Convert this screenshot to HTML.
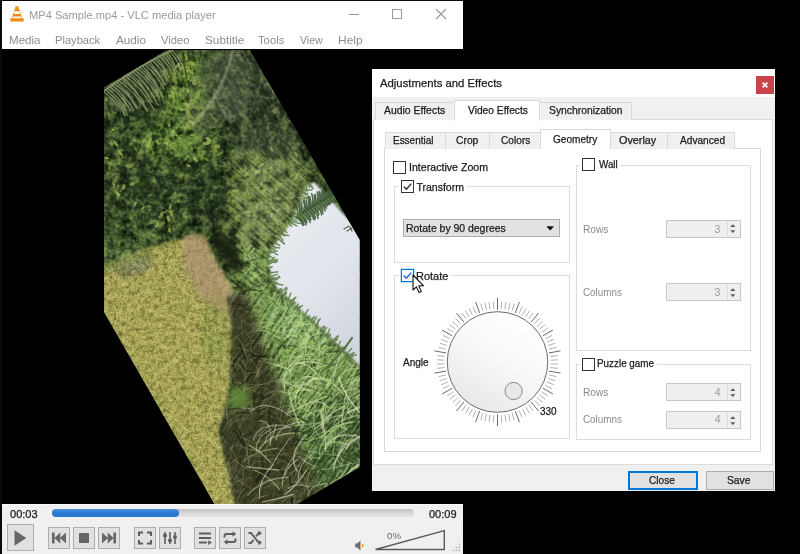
<!DOCTYPE html>
<html lang="en">
<head>
<meta charset="utf-8">
<title>MP4 Sample.mp4 - VLC media player</title>
<style>
html,body{margin:0;padding:0;}
body{width:800px;height:554px;overflow:hidden;background:#000;position:relative;font-family:"Liberation Sans",sans-serif;}
.abs,.t,.box,.btn,.tab,.cb,.grp,.spin{position:absolute;box-sizing:border-box;}
.t{white-space:pre;line-height:1;transform-origin:0 0;}
.btn{background:#e1e1e1;border:1px solid #adadad;}
.tab{background:#f0f0f0;border:1px solid #d9d9d9;border-bottom:none;}
.tab.sel{background:#fff;}
.cb{width:13px;height:13px;background:#fff;border:1px solid #333;}
.grp{border:1px solid #dcdcdc;}
.spin{background:#efefef;border:1px solid #c6c6c6;}
svg{position:absolute;overflow:visible;}
</style>
</head>
<body>

<!-- ===== VLC main window ===== -->
<div class="abs" style="left:0;top:0;width:463px;height:554px;background:#0a0a0a"></div>
<div class="abs" style="left:2px;top:1px;width:461px;height:48px;background:#fff"></div>
<div class="abs" style="left:2px;top:49px;width:461px;height:455px;background:#000"></div>

<!-- cone icon -->
<svg style="left:10px;top:6px" width="14" height="16" viewBox="0 0 14 16">
  <path d="M7 0.3 L8.3 0.3 L12.2 12.2 L13.6 12.2 L13.6 15.6 L0.4 15.6 L0.4 12.2 L1.8 12.2 L5.7 0.3 Z" fill="#f08a10"/>
  <path d="M4.6 5.2 L9.4 5.2 L10.3 7.9 L3.7 7.9 Z" fill="#fff"/>
  <path d="M2.9 10.4 L11.1 10.4 L11.7 12.2 L2.3 12.2 Z" fill="#fff"/>
  <path d="M5.9 0.3 L8.1 0.3 L8.7 2.4 L5.3 2.4 Z" fill="#f6a540"/>
</svg>

<!-- window controls -->
<div class="abs" style="left:349px;top:14px;width:10px;height:1px;background:#999"></div>
<div class="abs" style="left:392px;top:9px;width:10px;height:10px;border:1px solid #999"></div>
<svg style="left:436px;top:9px" width="10" height="10" viewBox="0 0 10 10"><path d="M0 0L10 10M10 0L0 10" stroke="#999" stroke-width="1.1" fill="none"/></svg>

<!-- video -->
<svg style="left:0;top:0" width="800" height="554" viewBox="0 0 800 554">
<defs>
<clipPath id="vc"><polygon points="104,87.5 166.5,50 249.5,50 359.7,240 359.7,467 297,504 214.5,504 104,312"/></clipPath>
<filter id="b9" x="60" y="20" width="340" height="520" filterUnits="userSpaceOnUse"><feGaussianBlur stdDeviation="9"/></filter>
<filter id="b5" x="60" y="20" width="340" height="520" filterUnits="userSpaceOnUse"><feGaussianBlur stdDeviation="5"/></filter>
<filter id="b3" x="60" y="20" width="340" height="520" filterUnits="userSpaceOnUse"><feGaussianBlur stdDeviation="3"/></filter>
<filter id="b2" x="60" y="20" width="340" height="520" filterUnits="userSpaceOnUse"><feGaussianBlur stdDeviation="1.6"/></filter>
<filter id="b1" x="60" y="20" width="340" height="520" filterUnits="userSpaceOnUse"><feGaussianBlur stdDeviation="0.8"/></filter>
<filter id="b05" x="60" y="20" width="340" height="520" filterUnits="userSpaceOnUse"><feGaussianBlur stdDeviation="0.5"/></filter>
<filter id="nFol" x="60" y="20" width="340" height="520" filterUnits="userSpaceOnUse" color-interpolation-filters="sRGB"><feTurbulence type="fractalNoise" baseFrequency="0.1" numOctaves="4" seed="11" result="n"/><feColorMatrix in="n" type="matrix" values="0 0 0 0 0.663  0 0 0 0 0.753  0 0 0 0 0.376  1.6 0 0 0 -0.800" result="l"/><feColorMatrix in="n" type="matrix" values="0 0 0 0 0.047  0 0 0 0 0.082  0 0 0 0 0.031  -3.0 0 0 0 1.500" result="d"/><feMerge><feMergeNode in="d"/><feMergeNode in="l"/></feMerge></filter>
<filter id="nFol2" x="60" y="20" width="340" height="520" filterUnits="userSpaceOnUse" color-interpolation-filters="sRGB"><feTurbulence type="fractalNoise" baseFrequency="0.3" numOctaves="2" seed="5" result="n"/><feColorMatrix in="n" type="matrix" values="0 0 0 0 0.706  0 0 0 0 0.784  0 0 0 0 0.471  0 0.9 0 0 -0.450" result="l"/><feColorMatrix in="n" type="matrix" values="0 0 0 0 0.047  0 0 0 0 0.082  0 0 0 0 0.031  0 -1.6 0 0 0.800" result="d"/><feMerge><feMergeNode in="d"/><feMergeNode in="l"/></feMerge></filter>
<filter id="nGrass" x="60" y="20" width="340" height="520" filterUnits="userSpaceOnUse" color-interpolation-filters="sRGB"><feTurbulence type="fractalNoise" baseFrequency="0.55" numOctaves="2" seed="3" result="n"/><feColorMatrix in="n" type="matrix" values="0 0 0 0 0.902  0 0 0 0 0.886  0 0 0 0 0.627  1.2 0 0 0 -0.600" result="l"/><feColorMatrix in="n" type="matrix" values="0 0 0 0 0.290  0 0 0 0 0.290  0 0 0 0 0.094  -1.2 0 0 0 0.600" result="d"/><feMerge><feMergeNode in="d"/><feMergeNode in="l"/></feMerge></filter>
<filter id="nGrassLo" x="60" y="20" width="340" height="520" filterUnits="userSpaceOnUse" color-interpolation-filters="sRGB"><feTurbulence type="fractalNoise" baseFrequency="0.09" numOctaves="2" seed="8" result="n"/><feColorMatrix in="n" type="matrix" values="0 0 0 0 0.784  0 0 0 0 0.753  0 0 0 0 0.439  0 0.8 0 0 -0.400" result="l"/><feColorMatrix in="n" type="matrix" values="0 0 0 0 0.353  0 0 0 0 0.416  0 0 0 0 0.157  0 -0.8 0 0 0.400" result="d"/><feMerge><feMergeNode in="d"/><feMergeNode in="l"/></feMerge></filter>
<filter id="nGrassMid" x="60" y="20" width="340" height="520" filterUnits="userSpaceOnUse" color-interpolation-filters="sRGB"><feTurbulence type="fractalNoise" baseFrequency="0.22" numOctaves="3" seed="14" result="n"/><feColorMatrix in="n" type="matrix" values="0 0 0 0 0.847  0 0 0 0 0.831  0 0 0 0 0.533  0 0 1.5 0 -0.750" result="l"/><feColorMatrix in="n" type="matrix" values="0 0 0 0 0.298  0 0 0 0 0.298  0 0 0 0 0.110  0 0 -1.7 0 0.850" result="d"/><feMerge><feMergeNode in="d"/><feMergeNode in="l"/></feMerge></filter>
<filter id="nTall" x="60" y="20" width="340" height="520" filterUnits="userSpaceOnUse" color-interpolation-filters="sRGB"><feTurbulence type="fractalNoise" baseFrequency="0.04 0.45" numOctaves="3" seed="21" result="n"/><feColorMatrix in="n" type="matrix" values="0 0 0 0 0.812  0 0 0 0 0.878  0 0 0 0 0.659  2.2 0 0 0 -1.100" result="l"/><feColorMatrix in="n" type="matrix" values="0 0 0 0 0.110  0 0 0 0 0.165  0 0 0 0 0.071  -2.2 0 0 0 1.100" result="d"/><feMerge><feMergeNode in="d"/><feMergeNode in="l"/></feMerge></filter>
<filter id="nTall2" x="60" y="20" width="340" height="520" filterUnits="userSpaceOnUse" color-interpolation-filters="sRGB"><feTurbulence type="fractalNoise" baseFrequency="0.3" numOctaves="2" seed="17" result="n"/><feColorMatrix in="n" type="matrix" values="0 0 0 0 0.831  0 0 0 0 0.886  0 0 0 0 0.690  0 0.9 0 0 -0.450" result="l"/><feColorMatrix in="n" type="matrix" values="0 0 0 0 0.078  0 0 0 0 0.118  0 0 0 0 0.063  0 -1.4 0 0 0.700" result="d"/><feMerge><feMergeNode in="d"/><feMergeNode in="l"/></feMerge></filter>
<filter id="nStr1" x="60" y="20" width="340" height="520" filterUnits="userSpaceOnUse" color-interpolation-filters="sRGB"><feTurbulence type="fractalNoise" baseFrequency="0.03 0.4" numOctaves="3" seed="31" result="n"/><feColorMatrix in="n" type="matrix" values="0 0 0 0 0.643  0 0 0 0 0.690  0 0 0 0 0.486  1.3 0 0 0 -0.650" result="l"/><feColorMatrix in="n" type="matrix" values="0 0 0 0 0.047  0 0 0 0 0.082  0 0 0 0 0.031  -2.8 0 0 0 1.400" result="d"/><feMerge><feMergeNode in="d"/><feMergeNode in="l"/></feMerge></filter>
<filter id="nStr2" x="60" y="20" width="340" height="520" filterUnits="userSpaceOnUse" color-interpolation-filters="sRGB"><feTurbulence type="fractalNoise" baseFrequency="0.035 0.42" numOctaves="3" seed="37" result="n"/><feColorMatrix in="n" type="matrix" values="0 0 0 0 0.737  0 0 0 0 0.784  0 0 0 0 0.533  1.8 0 0 0 -0.900" result="l"/><feColorMatrix in="n" type="matrix" values="0 0 0 0 0.078  0 0 0 0 0.110  0 0 0 0 0.047  -2.4 0 0 0 1.200" result="d"/><feMerge><feMergeNode in="d"/><feMergeNode in="l"/></feMerge></filter>
<filter id="nStr3" x="60" y="20" width="340" height="520" filterUnits="userSpaceOnUse" color-interpolation-filters="sRGB"><feTurbulence type="fractalNoise" baseFrequency="0.03 0.38" numOctaves="3" seed="41" result="n"/><feColorMatrix in="n" type="matrix" values="0 0 0 0 0.596  0 0 0 0 0.643  0 0 0 0 0.533  1.0 0 0 0 -0.500" result="l"/><feColorMatrix in="n" type="matrix" values="0 0 0 0 0.059  0 0 0 0 0.090  0 0 0 0 0.047  -2.0 0 0 0 1.000" result="d"/><feMerge><feMergeNode in="d"/><feMergeNode in="l"/></feMerge></filter>
<filter id="nDark" x="60" y="20" width="340" height="520" filterUnits="userSpaceOnUse" color-interpolation-filters="sRGB"><feTurbulence type="fractalNoise" baseFrequency="0.25" numOctaves="3" seed="2" result="n"/><feColorMatrix in="n" type="matrix" values="0 0 0 0 0.722  0 0 0 0 0.706  0 0 0 0 0.565  1.6 0 0 0 -0.800" result="l"/><feColorMatrix in="n" type="matrix" values="0 0 0 0 0.082  0 0 0 0 0.082  0 0 0 0 0.047  -1.0 0 0 0 0.500" result="d"/><feMerge><feMergeNode in="d"/><feMergeNode in="l"/></feMerge></filter>
<clipPath id="cSky"><polygon points="314,182 364,236 364,370 352,358 330,337 300,309 277,288 271,274 269,262 271,250 280,237 292,222 301,200 305,187"/></clipPath>
<clipPath id="cGrass"><polygon points="100,266 122,256 150,246 182,238 192,233 206,236 215,258 228,280 239,298 233,330 230,392 220,432 230,474 238,510 200,510 100,330"/></clipPath>
<clipPath id="cPath"><polygon points="184,240 192,234 205,236 214,258 228,280 238,298 232,312 212,308 196,290 186,268"/></clipPath>
<clipPath id="cDark"><polygon points="226,296 246,292 262,340 290,420 326,510 236,510 229,474 219,432 231,392 232,330"/></clipPath>
<clipPath id="cTall"><polygon points="226,296 262,283 277,287 364,370 364,470 300,510 236,510 229,474 219,432 231,392 232,330"/></clipPath>
<mask id="mGrass" maskUnits="userSpaceOnUse" x="60" y="20" width="340" height="520"><polygon points="100,266 122,256 150,246 182,238 192,233 206,236 215,258 228,280 239,298 233,330 230,392 220,432 230,474 238,510 200,510 100,330" fill="#fff" filter="url(#b2)"/></mask>
<mask id="mTall" maskUnits="userSpaceOnUse" x="60" y="20" width="340" height="520"><polygon points="226,296 262,283 277,287 364,370 364,470 300,510 236,510 229,474 219,432 231,392 232,330" fill="#fff" filter="url(#b2)"/></mask>
<mask id="mS1" maskUnits="userSpaceOnUse" x="60" y="20" width="340" height="520"><polygon points="100,84 172,46 206,46 186,100 142,112 100,128" fill="#fff" filter="url(#b3)"/></mask>
<mask id="mS2" maskUnits="userSpaceOnUse" x="60" y="20" width="340" height="520"><polygon points="230,150 300,150 322,186 292,240 268,288 230,288 222,220" fill="#fff" filter="url(#b3)"/></mask>
<mask id="mS3" maskUnits="userSpaceOnUse" x="60" y="20" width="340" height="520"><polygon points="206,46 252,46 320,170 300,160 240,150 205,125 215,85" fill="#fff" filter="url(#b3)"/></mask>
<linearGradient id="skyg" gradientUnits="userSpaceOnUse" x1="280" y1="250" x2="362" y2="330"><stop offset="0" stop-color="#e6e9ee"/><stop offset="0.5" stop-color="#e0e3ea"/><stop offset="1" stop-color="#d3d7df"/></linearGradient>
</defs>
<g clip-path="url(#vc)" style="isolation:isolate">
<rect x="100" y="46" width="264" height="462" fill="#364a28"/>
<g filter="url(#b5)">
<ellipse cx="150" cy="105" rx="40" ry="45" fill="#2f4226" opacity="0.9" transform="rotate(0 150 105)"/>
<ellipse cx="186" cy="92" rx="20" ry="38" fill="#6a8c34" opacity="0.85" transform="rotate(0 186 92)"/>
<ellipse cx="175" cy="140" rx="35" ry="20" fill="#64883a" opacity="0.85" transform="rotate(0 175 140)"/>
<ellipse cx="125" cy="90" rx="28" ry="14" fill="#4a5a3a" opacity="0.7" transform="rotate(-30 125 90)"/>
<ellipse cx="270" cy="105" rx="45" ry="70" fill="#333d2b" opacity="1" transform="rotate(-30 270 105)"/>
<ellipse cx="140" cy="200" rx="45" ry="32" fill="#34482a" opacity="0.9" transform="rotate(0 140 200)"/>
<ellipse cx="215" cy="200" rx="30" ry="30" fill="#2a3a22" opacity="0.9" transform="rotate(0 215 200)"/>
<polygon points="236,150 300,158 318,182 290,240 268,288 230,288 224,220" fill="#63783e" opacity="1" />
<ellipse cx="250" cy="266" rx="22" ry="18" fill="#7ba054" opacity="0.9" transform="rotate(0 250 266)"/>
<ellipse cx="285" cy="200" rx="25" ry="30" fill="#6a7e44" opacity="0.8" transform="rotate(-30 285 200)"/>
<ellipse cx="125" cy="248" rx="36" ry="12" fill="#4c6636" opacity="0.9" transform="rotate(-15 125 248)"/>
<ellipse cx="228" cy="250" rx="11" ry="26" fill="#1a2614" opacity="0.95" transform="rotate(-28 228 250)"/>
</g>
<rect x="100" y="46" width="264" height="462" filter="url(#nFol)" />
<rect x="100" y="46" width="264" height="462" filter="url(#nFol2)" />
<g mask="url(#mS1)" opacity="0.85"><g transform="rotate(78 150 90)"><rect x="-150" y="-210" width="600" height="600" filter="url(#nStr1)"/></g></g>
<g mask="url(#mS2)" opacity="0.8"><g transform="rotate(40 270 220)"><rect x="-30" y="-80" width="600" height="600" filter="url(#nStr2)"/></g></g>
<g mask="url(#mS3)" opacity="0.8"><g transform="rotate(62 260 100)"><rect x="-40" y="-200" width="600" height="600" filter="url(#nStr3)"/></g></g>
<g filter="url(#b05)">
<g opacity="0.7"><ellipse cx="122.6" cy="156.9" rx="1.6" ry="0.9" fill="#869c40" transform="rotate(93 122.6 156.9)"/><ellipse cx="265.6" cy="185.1" rx="1.6" ry="0.7" fill="#869c40" transform="rotate(61 265.6 185.1)"/><ellipse cx="182.7" cy="89.6" rx="2.9" ry="1.7" fill="#869c40" transform="rotate(147 182.7 89.6)"/><ellipse cx="219.5" cy="199.8" rx="1.6" ry="0.9" fill="#708a38" transform="rotate(107 219.5 199.8)"/><ellipse cx="149.8" cy="136.7" rx="2.9" ry="1.5" fill="#869c40" transform="rotate(148 149.8 136.7)"/><ellipse cx="241.3" cy="171.1" rx="2.9" ry="1.0" fill="#869c40" transform="rotate(158 241.3 171.1)"/><ellipse cx="150.4" cy="140.3" rx="3.4" ry="1.6" fill="#aec060" transform="rotate(92 150.4 140.3)"/><ellipse cx="115.0" cy="180.7" rx="3.4" ry="1.3" fill="#708a38" transform="rotate(134 115.0 180.7)"/><ellipse cx="178.6" cy="201.3" rx="2.2" ry="1.3" fill="#869c40" transform="rotate(131 178.6 201.3)"/><ellipse cx="161.6" cy="224.4" rx="3.8" ry="1.7" fill="#869c40" transform="rotate(142 161.6 224.4)"/><ellipse cx="256.3" cy="158.5" rx="2.4" ry="1.0" fill="#aec060" transform="rotate(148 256.3 158.5)"/><ellipse cx="160.1" cy="217.2" rx="2.2" ry="1.1" fill="#869c40" transform="rotate(15 160.1 217.2)"/><ellipse cx="199.8" cy="139.0" rx="4.0" ry="2.2" fill="#708a38" transform="rotate(98 199.8 139.0)"/><ellipse cx="188.7" cy="165.6" rx="2.4" ry="1.2" fill="#aec060" transform="rotate(15 188.7 165.6)"/><ellipse cx="176.2" cy="134.8" rx="2.1" ry="0.9" fill="#aec060" transform="rotate(20 176.2 134.8)"/><ellipse cx="151.0" cy="144.0" rx="3.7" ry="2.1" fill="#708a38" transform="rotate(106 151.0 144.0)"/><ellipse cx="111.8" cy="142.7" rx="2.1" ry="0.8" fill="#9cb04e" transform="rotate(59 111.8 142.7)"/><ellipse cx="206.4" cy="159.2" rx="3.0" ry="1.2" fill="#869c40" transform="rotate(37 206.4 159.2)"/><ellipse cx="116.5" cy="211.4" rx="2.3" ry="0.9" fill="#869c40" transform="rotate(116 116.5 211.4)"/><ellipse cx="208.5" cy="142.4" rx="2.5" ry="0.9" fill="#aec060" transform="rotate(15 208.5 142.4)"/><ellipse cx="187.5" cy="142.8" rx="1.9" ry="0.8" fill="#869c40" transform="rotate(26 187.5 142.8)"/><ellipse cx="174.7" cy="80.9" rx="3.9" ry="1.9" fill="#869c40" transform="rotate(53 174.7 80.9)"/><ellipse cx="235.8" cy="191.9" rx="3.9" ry="1.9" fill="#aec060" transform="rotate(31 235.8 191.9)"/><ellipse cx="204.4" cy="35.6" rx="2.7" ry="1.3" fill="#869c40" transform="rotate(36 204.4 35.6)"/><ellipse cx="186.0" cy="55.9" rx="2.7" ry="1.4" fill="#869c40" transform="rotate(52 186.0 55.9)"/><ellipse cx="236.2" cy="194.0" rx="3.8" ry="2.0" fill="#708a38" transform="rotate(164 236.2 194.0)"/><ellipse cx="183.4" cy="75.9" rx="2.4" ry="0.9" fill="#9cb04e" transform="rotate(136 183.4 75.9)"/><ellipse cx="252.3" cy="169.4" rx="2.1" ry="1.1" fill="#9cb04e" transform="rotate(61 252.3 169.4)"/><ellipse cx="148.9" cy="206.4" rx="2.8" ry="1.2" fill="#869c40" transform="rotate(7 148.9 206.4)"/><ellipse cx="109.8" cy="167.8" rx="3.0" ry="1.3" fill="#708a38" transform="rotate(93 109.8 167.8)"/><ellipse cx="187.3" cy="107.5" rx="2.0" ry="0.8" fill="#869c40" transform="rotate(122 187.3 107.5)"/><ellipse cx="195.4" cy="159.5" rx="3.6" ry="1.4" fill="#aec060" transform="rotate(51 195.4 159.5)"/><ellipse cx="170.4" cy="206.8" rx="3.1" ry="1.1" fill="#aec060" transform="rotate(118 170.4 206.8)"/><ellipse cx="149.6" cy="209.9" rx="1.9" ry="1.1" fill="#869c40" transform="rotate(38 149.6 209.9)"/><ellipse cx="271.0" cy="167.8" rx="1.9" ry="1.0" fill="#aec060" transform="rotate(168 271.0 167.8)"/><ellipse cx="120.6" cy="191.2" rx="1.6" ry="0.9" fill="#869c40" transform="rotate(134 120.6 191.2)"/><ellipse cx="216.7" cy="146.5" rx="3.7" ry="2.0" fill="#9cb04e" transform="rotate(7 216.7 146.5)"/><ellipse cx="117.2" cy="193.7" rx="3.4" ry="1.5" fill="#aec060" transform="rotate(33 117.2 193.7)"/><ellipse cx="193.9" cy="81.0" rx="2.6" ry="1.3" fill="#aec060" transform="rotate(128 193.9 81.0)"/><ellipse cx="151.1" cy="137.6" rx="1.5" ry="0.7" fill="#9cb04e" transform="rotate(155 151.1 137.6)"/><ellipse cx="186.9" cy="79.6" rx="1.9" ry="0.9" fill="#869c40" transform="rotate(142 186.9 79.6)"/><ellipse cx="180.4" cy="115.6" rx="2.9" ry="1.6" fill="#869c40" transform="rotate(143 180.4 115.6)"/><ellipse cx="186.1" cy="109.7" rx="3.4" ry="1.6" fill="#869c40" transform="rotate(16 186.1 109.7)"/><ellipse cx="119.2" cy="243.7" rx="3.0" ry="1.2" fill="#708a38" transform="rotate(115 119.2 243.7)"/><ellipse cx="234.4" cy="177.2" rx="3.9" ry="2.0" fill="#708a38" transform="rotate(143 234.4 177.2)"/><ellipse cx="180.8" cy="135.4" rx="1.8" ry="0.8" fill="#869c40" transform="rotate(171 180.8 135.4)"/><ellipse cx="162.5" cy="143.0" rx="2.3" ry="0.9" fill="#9cb04e" transform="rotate(164 162.5 143.0)"/><ellipse cx="198.9" cy="154.6" rx="1.8" ry="0.9" fill="#869c40" transform="rotate(101 198.9 154.6)"/><ellipse cx="169.3" cy="230.2" rx="2.1" ry="1.1" fill="#aec060" transform="rotate(86 169.3 230.2)"/><ellipse cx="157.3" cy="224.9" rx="3.3" ry="1.2" fill="#aec060" transform="rotate(112 157.3 224.9)"/><ellipse cx="215.7" cy="150.8" rx="3.1" ry="1.5" fill="#869c40" transform="rotate(28 215.7 150.8)"/><ellipse cx="184.3" cy="139.2" rx="2.2" ry="0.8" fill="#9cb04e" transform="rotate(69 184.3 139.2)"/><ellipse cx="191.5" cy="122.4" rx="3.2" ry="1.9" fill="#aec060" transform="rotate(38 191.5 122.4)"/><ellipse cx="265.9" cy="172.4" rx="3.3" ry="1.2" fill="#869c40" transform="rotate(176 265.9 172.4)"/><ellipse cx="168.1" cy="141.8" rx="3.8" ry="2.0" fill="#708a38" transform="rotate(21 168.1 141.8)"/><ellipse cx="253.2" cy="176.5" rx="3.7" ry="1.7" fill="#708a38" transform="rotate(141 253.2 176.5)"/><ellipse cx="167.7" cy="210.8" rx="1.8" ry="0.9" fill="#9cb04e" transform="rotate(28 167.7 210.8)"/><ellipse cx="174.1" cy="146.3" rx="3.8" ry="1.9" fill="#9cb04e" transform="rotate(74 174.1 146.3)"/><ellipse cx="134.4" cy="215.0" rx="2.4" ry="0.8" fill="#708a38" transform="rotate(9 134.4 215.0)"/><ellipse cx="197.8" cy="95.0" rx="3.9" ry="1.9" fill="#9cb04e" transform="rotate(114 197.8 95.0)"/><ellipse cx="178.1" cy="65.3" rx="3.1" ry="1.5" fill="#aec060" transform="rotate(129 178.1 65.3)"/><ellipse cx="106.3" cy="99.3" rx="2.4" ry="1.3" fill="#9cb04e" transform="rotate(103 106.3 99.3)"/><ellipse cx="130.1" cy="159.6" rx="1.5" ry="0.8" fill="#708a38" transform="rotate(110 130.1 159.6)"/><ellipse cx="202.8" cy="145.0" rx="2.5" ry="1.2" fill="#708a38" transform="rotate(153 202.8 145.0)"/><ellipse cx="172.9" cy="137.2" rx="2.0" ry="0.8" fill="#869c40" transform="rotate(67 172.9 137.2)"/><ellipse cx="135.8" cy="149.1" rx="2.9" ry="1.2" fill="#708a38" transform="rotate(55 135.8 149.1)"/><ellipse cx="118.0" cy="185.6" rx="1.7" ry="0.7" fill="#9cb04e" transform="rotate(63 118.0 185.6)"/><ellipse cx="251.0" cy="174.8" rx="3.5" ry="1.4" fill="#869c40" transform="rotate(100 251.0 174.8)"/><ellipse cx="181.7" cy="121.5" rx="1.7" ry="1.0" fill="#9cb04e" transform="rotate(168 181.7 121.5)"/><ellipse cx="208.4" cy="139.5" rx="3.4" ry="1.8" fill="#aec060" transform="rotate(38 208.4 139.5)"/><ellipse cx="113.1" cy="129.6" rx="1.6" ry="0.9" fill="#aec060" transform="rotate(179 113.1 129.6)"/><ellipse cx="260.9" cy="191.2" rx="2.8" ry="1.5" fill="#869c40" transform="rotate(175 260.9 191.2)"/><ellipse cx="256.5" cy="161.9" rx="3.9" ry="2.0" fill="#869c40" transform="rotate(7 256.5 161.9)"/><ellipse cx="192.3" cy="107.4" rx="1.8" ry="1.0" fill="#869c40" transform="rotate(160 192.3 107.4)"/><ellipse cx="175.4" cy="68.3" rx="2.7" ry="1.0" fill="#869c40" transform="rotate(128 175.4 68.3)"/><ellipse cx="264.3" cy="188.0" rx="3.4" ry="1.6" fill="#869c40" transform="rotate(67 264.3 188.0)"/><ellipse cx="173.2" cy="133.3" rx="3.3" ry="2.0" fill="#aec060" transform="rotate(97 173.2 133.3)"/><ellipse cx="171.0" cy="96.4" rx="3.4" ry="1.7" fill="#9cb04e" transform="rotate(19 171.0 96.4)"/><ellipse cx="256.4" cy="187.3" rx="3.4" ry="1.4" fill="#9cb04e" transform="rotate(3 256.4 187.3)"/><ellipse cx="168.4" cy="218.5" rx="3.2" ry="1.7" fill="#aec060" transform="rotate(74 168.4 218.5)"/><ellipse cx="191.7" cy="149.1" rx="2.7" ry="1.0" fill="#9cb04e" transform="rotate(79 191.7 149.1)"/><ellipse cx="187.7" cy="90.4" rx="2.6" ry="1.5" fill="#aec060" transform="rotate(68 187.7 90.4)"/><ellipse cx="165.1" cy="243.0" rx="2.0" ry="1.0" fill="#9cb04e" transform="rotate(134 165.1 243.0)"/><ellipse cx="119.1" cy="161.1" rx="3.6" ry="1.7" fill="#869c40" transform="rotate(93 119.1 161.1)"/><ellipse cx="134.1" cy="140.3" rx="2.5" ry="1.0" fill="#aec060" transform="rotate(174 134.1 140.3)"/><ellipse cx="116.6" cy="225.8" rx="2.5" ry="1.1" fill="#869c40" transform="rotate(84 116.6 225.8)"/><ellipse cx="181.9" cy="109.8" rx="2.5" ry="1.5" fill="#9cb04e" transform="rotate(3 181.9 109.8)"/><ellipse cx="202.1" cy="157.5" rx="2.5" ry="1.5" fill="#869c40" transform="rotate(92 202.1 157.5)"/><ellipse cx="151.7" cy="191.5" rx="2.2" ry="0.8" fill="#708a38" transform="rotate(162 151.7 191.5)"/><ellipse cx="175.1" cy="147.9" rx="2.8" ry="1.1" fill="#708a38" transform="rotate(109 175.1 147.9)"/><ellipse cx="191.4" cy="63.3" rx="3.8" ry="2.2" fill="#9cb04e" transform="rotate(20 191.4 63.3)"/><ellipse cx="195.4" cy="82.8" rx="3.0" ry="1.2" fill="#708a38" transform="rotate(124 195.4 82.8)"/><ellipse cx="196.8" cy="77.4" rx="1.9" ry="0.9" fill="#708a38" transform="rotate(76 196.8 77.4)"/><ellipse cx="113.5" cy="96.8" rx="2.2" ry="1.1" fill="#708a38" transform="rotate(123 113.5 96.8)"/><ellipse cx="246.5" cy="174.7" rx="3.1" ry="1.1" fill="#aec060" transform="rotate(140 246.5 174.7)"/><ellipse cx="157.8" cy="142.6" rx="3.4" ry="1.6" fill="#9cb04e" transform="rotate(62 157.8 142.6)"/><ellipse cx="191.8" cy="117.0" rx="2.3" ry="1.0" fill="#9cb04e" transform="rotate(5 191.8 117.0)"/><ellipse cx="213.1" cy="144.3" rx="3.4" ry="1.4" fill="#708a38" transform="rotate(86 213.1 144.3)"/><ellipse cx="172.9" cy="92.3" rx="2.4" ry="1.3" fill="#9cb04e" transform="rotate(23 172.9 92.3)"/><ellipse cx="121.3" cy="150.1" rx="3.1" ry="1.4" fill="#708a38" transform="rotate(5 121.3 150.1)"/><ellipse cx="205.8" cy="143.2" rx="3.7" ry="1.8" fill="#aec060" transform="rotate(0 205.8 143.2)"/><ellipse cx="168.2" cy="123.7" rx="3.6" ry="2.0" fill="#aec060" transform="rotate(63 168.2 123.7)"/><ellipse cx="186.9" cy="104.5" rx="3.9" ry="1.5" fill="#aec060" transform="rotate(21 186.9 104.5)"/><ellipse cx="250.1" cy="179.4" rx="1.8" ry="0.9" fill="#869c40" transform="rotate(165 250.1 179.4)"/><ellipse cx="202.9" cy="153.9" rx="2.1" ry="1.1" fill="#869c40" transform="rotate(25 202.9 153.9)"/><ellipse cx="178.5" cy="142.1" rx="2.0" ry="0.8" fill="#869c40" transform="rotate(2 178.5 142.1)"/><ellipse cx="245.1" cy="192.6" rx="3.9" ry="2.0" fill="#9cb04e" transform="rotate(121 245.1 192.6)"/><ellipse cx="251.0" cy="189.0" rx="3.9" ry="2.1" fill="#708a38" transform="rotate(14 251.0 189.0)"/><ellipse cx="193.2" cy="135.0" rx="3.1" ry="1.2" fill="#9cb04e" transform="rotate(170 193.2 135.0)"/><ellipse cx="166.0" cy="211.1" rx="1.6" ry="0.7" fill="#aec060" transform="rotate(92 166.0 211.1)"/><ellipse cx="203.9" cy="150.6" rx="2.2" ry="1.3" fill="#869c40" transform="rotate(52 203.9 150.6)"/><ellipse cx="171.2" cy="213.0" rx="3.6" ry="1.4" fill="#9cb04e" transform="rotate(67 171.2 213.0)"/><ellipse cx="123.7" cy="187.1" rx="3.0" ry="1.7" fill="#aec060" transform="rotate(106 123.7 187.1)"/><ellipse cx="220.1" cy="153.7" rx="3.8" ry="1.4" fill="#869c40" transform="rotate(152 220.1 153.7)"/><ellipse cx="147.9" cy="148.0" rx="2.0" ry="0.9" fill="#708a38" transform="rotate(28 147.9 148.0)"/><ellipse cx="194.1" cy="83.8" rx="2.0" ry="1.1" fill="#aec060" transform="rotate(8 194.1 83.8)"/><ellipse cx="111.0" cy="144.1" rx="2.4" ry="1.1" fill="#9cb04e" transform="rotate(27 111.0 144.1)"/><ellipse cx="189.6" cy="96.3" rx="2.6" ry="1.5" fill="#9cb04e" transform="rotate(97 189.6 96.3)"/><ellipse cx="115.8" cy="143.7" rx="3.5" ry="1.3" fill="#aec060" transform="rotate(50 115.8 143.7)"/><ellipse cx="106.6" cy="158.0" rx="2.3" ry="1.2" fill="#aec060" transform="rotate(7 106.6 158.0)"/><ellipse cx="186.4" cy="157.8" rx="3.4" ry="1.2" fill="#869c40" transform="rotate(118 186.4 157.8)"/><ellipse cx="187.2" cy="84.6" rx="2.0" ry="0.7" fill="#708a38" transform="rotate(92 187.2 84.6)"/><ellipse cx="104.9" cy="218.4" rx="1.6" ry="0.9" fill="#708a38" transform="rotate(70 104.9 218.4)"/><ellipse cx="128.4" cy="166.0" rx="3.8" ry="1.9" fill="#869c40" transform="rotate(6 128.4 166.0)"/><ellipse cx="199.8" cy="149.9" rx="2.7" ry="1.4" fill="#708a38" transform="rotate(110 199.8 149.9)"/><ellipse cx="169.7" cy="225.4" rx="1.5" ry="0.9" fill="#708a38" transform="rotate(177 169.7 225.4)"/><ellipse cx="161.1" cy="134.4" rx="2.3" ry="1.0" fill="#869c40" transform="rotate(131 161.1 134.4)"/><ellipse cx="165.8" cy="143.7" rx="2.5" ry="1.3" fill="#aec060" transform="rotate(141 165.8 143.7)"/><ellipse cx="232.0" cy="209.9" rx="3.7" ry="2.2" fill="#708a38" transform="rotate(159 232.0 209.9)"/><ellipse cx="188.7" cy="114.2" rx="4.0" ry="2.4" fill="#9cb04e" transform="rotate(59 188.7 114.2)"/><ellipse cx="150.9" cy="146.9" rx="3.2" ry="1.7" fill="#869c40" transform="rotate(75 150.9 146.9)"/><ellipse cx="113.8" cy="184.4" rx="2.1" ry="0.9" fill="#aec060" transform="rotate(63 113.8 184.4)"/><ellipse cx="175.3" cy="145.8" rx="3.7" ry="1.8" fill="#708a38" transform="rotate(16 175.3 145.8)"/><ellipse cx="149.8" cy="224.0" rx="2.8" ry="1.4" fill="#869c40" transform="rotate(167 149.8 224.0)"/><ellipse cx="161.6" cy="214.7" rx="2.7" ry="1.5" fill="#aec060" transform="rotate(95 161.6 214.7)"/><ellipse cx="191.2" cy="80.8" rx="1.6" ry="0.8" fill="#9cb04e" transform="rotate(19 191.2 80.8)"/><ellipse cx="110.0" cy="163.8" rx="3.0" ry="1.6" fill="#869c40" transform="rotate(27 110.0 163.8)"/><ellipse cx="191.3" cy="143.7" rx="2.0" ry="0.9" fill="#9cb04e" transform="rotate(11 191.3 143.7)"/><ellipse cx="180.6" cy="140.0" rx="3.3" ry="1.9" fill="#869c40" transform="rotate(83 180.6 140.0)"/><ellipse cx="143.0" cy="208.1" rx="2.3" ry="0.9" fill="#aec060" transform="rotate(140 143.0 208.1)"/><ellipse cx="160.7" cy="217.1" rx="2.5" ry="1.2" fill="#869c40" transform="rotate(167 160.7 217.1)"/><ellipse cx="162.3" cy="144.8" rx="4.0" ry="2.1" fill="#aec060" transform="rotate(13 162.3 144.8)"/><ellipse cx="114.5" cy="113.2" rx="2.5" ry="0.9" fill="#708a38" transform="rotate(164 114.5 113.2)"/><ellipse cx="159.2" cy="146.5" rx="3.9" ry="1.8" fill="#9cb04e" transform="rotate(108 159.2 146.5)"/><ellipse cx="190.4" cy="71.7" rx="3.7" ry="1.7" fill="#9cb04e" transform="rotate(33 190.4 71.7)"/><ellipse cx="191.3" cy="95.9" rx="3.5" ry="1.6" fill="#708a38" transform="rotate(129 191.3 95.9)"/><ellipse cx="184.9" cy="146.5" rx="2.8" ry="1.6" fill="#869c40" transform="rotate(98 184.9 146.5)"/><ellipse cx="151.0" cy="193.7" rx="3.5" ry="1.5" fill="#869c40" transform="rotate(123 151.0 193.7)"/><ellipse cx="132.2" cy="183.8" rx="2.5" ry="1.4" fill="#9cb04e" transform="rotate(163 132.2 183.8)"/><ellipse cx="155.0" cy="130.5" rx="2.0" ry="0.9" fill="#9cb04e" transform="rotate(10 155.0 130.5)"/><ellipse cx="163.5" cy="212.4" rx="2.4" ry="0.9" fill="#9cb04e" transform="rotate(10 163.5 212.4)"/><ellipse cx="261.5" cy="165.0" rx="3.2" ry="1.4" fill="#aec060" transform="rotate(153 261.5 165.0)"/><ellipse cx="116.6" cy="209.8" rx="2.3" ry="1.0" fill="#9cb04e" transform="rotate(108 116.6 209.8)"/><ellipse cx="135.3" cy="204.0" rx="2.6" ry="0.9" fill="#aec060" transform="rotate(119 135.3 204.0)"/><ellipse cx="148.8" cy="144.6" rx="3.5" ry="2.0" fill="#aec060" transform="rotate(102 148.8 144.6)"/><ellipse cx="194.6" cy="100.5" rx="2.4" ry="1.3" fill="#869c40" transform="rotate(10 194.6 100.5)"/><ellipse cx="223.5" cy="163.2" rx="2.3" ry="1.2" fill="#869c40" transform="rotate(13 223.5 163.2)"/><ellipse cx="266.1" cy="169.3" rx="3.5" ry="1.2" fill="#869c40" transform="rotate(157 266.1 169.3)"/><ellipse cx="203.0" cy="146.4" rx="1.8" ry="1.0" fill="#708a38" transform="rotate(42 203.0 146.4)"/><ellipse cx="211.6" cy="132.1" rx="1.7" ry="0.7" fill="#708a38" transform="rotate(40 211.6 132.1)"/><ellipse cx="120.1" cy="152.9" rx="3.5" ry="1.4" fill="#aec060" transform="rotate(53 120.1 152.9)"/><ellipse cx="248.7" cy="194.2" rx="2.3" ry="0.8" fill="#9cb04e" transform="rotate(103 248.7 194.2)"/><ellipse cx="164.4" cy="133.9" rx="2.3" ry="1.0" fill="#708a38" transform="rotate(29 164.4 133.9)"/><ellipse cx="276.4" cy="187.1" rx="3.9" ry="1.8" fill="#869c40" transform="rotate(64 276.4 187.1)"/><ellipse cx="240.4" cy="171.3" rx="3.5" ry="1.5" fill="#708a38" transform="rotate(147 240.4 171.3)"/><ellipse cx="153.3" cy="153.1" rx="2.6" ry="1.0" fill="#869c40" transform="rotate(75 153.3 153.1)"/><ellipse cx="249.5" cy="197.1" rx="4.0" ry="2.0" fill="#708a38" transform="rotate(0 249.5 197.1)"/><ellipse cx="211.7" cy="151.0" rx="3.0" ry="1.4" fill="#708a38" transform="rotate(12 211.7 151.0)"/><ellipse cx="147.5" cy="141.0" rx="1.6" ry="0.6" fill="#708a38" transform="rotate(77 147.5 141.0)"/><ellipse cx="173.8" cy="88.1" rx="2.5" ry="1.1" fill="#9cb04e" transform="rotate(52 173.8 88.1)"/></g>
<g opacity="0.6"><ellipse cx="129.8" cy="90.1" rx="3.0" ry="1.7" fill="#15200f" transform="rotate(38 129.8 90.1)"/><ellipse cx="299.4" cy="138.3" rx="5.5" ry="3.0" fill="#1b2a14" transform="rotate(67 299.4 138.3)"/><ellipse cx="192.2" cy="206.0" rx="5.6" ry="2.8" fill="#223319" transform="rotate(113 192.2 206.0)"/><ellipse cx="270.5" cy="185.7" rx="2.7" ry="1.3" fill="#1b2a14" transform="rotate(47 270.5 185.7)"/><ellipse cx="238.8" cy="241.4" rx="2.9" ry="1.4" fill="#223319" transform="rotate(50 238.8 241.4)"/><ellipse cx="194.3" cy="210.7" rx="4.7" ry="2.4" fill="#1b2a14" transform="rotate(156 194.3 210.7)"/><ellipse cx="207.8" cy="194.5" rx="4.7" ry="2.8" fill="#223319" transform="rotate(122 207.8 194.5)"/><ellipse cx="117.3" cy="208.9" rx="5.7" ry="2.1" fill="#223319" transform="rotate(115 117.3 208.9)"/><ellipse cx="216.4" cy="206.7" rx="3.3" ry="1.2" fill="#1b2a14" transform="rotate(177 216.4 206.7)"/><ellipse cx="145.3" cy="90.9" rx="4.4" ry="2.0" fill="#223319" transform="rotate(67 145.3 90.9)"/><ellipse cx="109.3" cy="59.6" rx="3.3" ry="1.9" fill="#15200f" transform="rotate(43 109.3 59.6)"/><ellipse cx="189.7" cy="82.9" rx="3.2" ry="1.3" fill="#1b2a14" transform="rotate(49 189.7 82.9)"/><ellipse cx="261.2" cy="132.8" rx="5.7" ry="2.9" fill="#223319" transform="rotate(170 261.2 132.8)"/><ellipse cx="239.7" cy="117.5" rx="2.5" ry="0.9" fill="#223319" transform="rotate(59 239.7 117.5)"/><ellipse cx="156.1" cy="85.8" rx="4.5" ry="2.2" fill="#15200f" transform="rotate(37 156.1 85.8)"/><ellipse cx="154.0" cy="192.0" rx="5.8" ry="2.5" fill="#15200f" transform="rotate(179 154.0 192.0)"/><ellipse cx="156.1" cy="192.6" rx="4.8" ry="1.7" fill="#15200f" transform="rotate(11 156.1 192.6)"/><ellipse cx="171.5" cy="156.8" rx="3.2" ry="1.9" fill="#223319" transform="rotate(170 171.5 156.8)"/><ellipse cx="176.7" cy="161.2" rx="5.0" ry="2.2" fill="#15200f" transform="rotate(52 176.7 161.2)"/><ellipse cx="219.0" cy="199.3" rx="5.5" ry="3.0" fill="#223319" transform="rotate(22 219.0 199.3)"/><ellipse cx="136.8" cy="111.9" rx="5.3" ry="2.7" fill="#1b2a14" transform="rotate(81 136.8 111.9)"/><ellipse cx="145.4" cy="112.4" rx="3.4" ry="1.4" fill="#223319" transform="rotate(94 145.4 112.4)"/><ellipse cx="154.1" cy="76.3" rx="4.2" ry="1.8" fill="#223319" transform="rotate(7 154.1 76.3)"/><ellipse cx="299.6" cy="118.3" rx="2.8" ry="1.3" fill="#15200f" transform="rotate(137 299.6 118.3)"/><ellipse cx="206.7" cy="149.3" rx="4.5" ry="1.9" fill="#1b2a14" transform="rotate(0 206.7 149.3)"/><ellipse cx="207.1" cy="235.5" rx="2.7" ry="1.2" fill="#15200f" transform="rotate(125 207.1 235.5)"/><ellipse cx="241.2" cy="188.1" rx="5.9" ry="2.8" fill="#223319" transform="rotate(40 241.2 188.1)"/><ellipse cx="173.5" cy="55.9" rx="3.3" ry="1.3" fill="#223319" transform="rotate(20 173.5 55.9)"/><ellipse cx="279.1" cy="57.4" rx="5.3" ry="2.7" fill="#1b2a14" transform="rotate(24 279.1 57.4)"/><ellipse cx="317.5" cy="77.9" rx="5.1" ry="2.3" fill="#223319" transform="rotate(6 317.5 77.9)"/><ellipse cx="155.3" cy="128.8" rx="5.7" ry="2.7" fill="#1b2a14" transform="rotate(161 155.3 128.8)"/><ellipse cx="224.8" cy="190.5" rx="4.6" ry="2.4" fill="#223319" transform="rotate(165 224.8 190.5)"/><ellipse cx="124.5" cy="208.1" rx="3.0" ry="1.7" fill="#223319" transform="rotate(141 124.5 208.1)"/><ellipse cx="163.0" cy="133.5" rx="5.2" ry="2.6" fill="#15200f" transform="rotate(85 163.0 133.5)"/><ellipse cx="245.9" cy="67.8" rx="4.3" ry="1.8" fill="#223319" transform="rotate(158 245.9 67.8)"/><ellipse cx="206.0" cy="128.1" rx="5.0" ry="2.5" fill="#1b2a14" transform="rotate(41 206.0 128.1)"/><ellipse cx="208.9" cy="209.3" rx="5.9" ry="3.1" fill="#15200f" transform="rotate(42 208.9 209.3)"/><ellipse cx="145.8" cy="203.5" rx="3.0" ry="1.3" fill="#1b2a14" transform="rotate(111 145.8 203.5)"/><ellipse cx="161.8" cy="143.6" rx="2.9" ry="1.2" fill="#1b2a14" transform="rotate(118 161.8 143.6)"/><ellipse cx="198.7" cy="193.9" rx="4.0" ry="1.6" fill="#223319" transform="rotate(75 198.7 193.9)"/><ellipse cx="289.1" cy="113.7" rx="5.1" ry="1.8" fill="#15200f" transform="rotate(110 289.1 113.7)"/><ellipse cx="291.1" cy="67.2" rx="4.8" ry="2.7" fill="#223319" transform="rotate(179 291.1 67.2)"/><ellipse cx="202.7" cy="162.6" rx="4.1" ry="1.8" fill="#223319" transform="rotate(179 202.7 162.6)"/><ellipse cx="157.6" cy="178.6" rx="3.9" ry="2.1" fill="#15200f" transform="rotate(64 157.6 178.6)"/><ellipse cx="265.0" cy="110.8" rx="5.5" ry="2.6" fill="#223319" transform="rotate(46 265.0 110.8)"/><ellipse cx="154.4" cy="85.6" rx="4.2" ry="2.5" fill="#15200f" transform="rotate(64 154.4 85.6)"/><ellipse cx="233.5" cy="232.0" rx="5.8" ry="2.8" fill="#15200f" transform="rotate(147 233.5 232.0)"/><ellipse cx="231.6" cy="95.8" rx="4.3" ry="2.2" fill="#1b2a14" transform="rotate(133 231.6 95.8)"/><ellipse cx="98.6" cy="142.5" rx="3.2" ry="1.7" fill="#1b2a14" transform="rotate(131 98.6 142.5)"/><ellipse cx="134.6" cy="155.8" rx="4.7" ry="2.0" fill="#1b2a14" transform="rotate(102 134.6 155.8)"/><ellipse cx="171.1" cy="192.2" rx="4.0" ry="2.1" fill="#1b2a14" transform="rotate(148 171.1 192.2)"/><ellipse cx="166.4" cy="123.5" rx="3.9" ry="2.3" fill="#15200f" transform="rotate(100 166.4 123.5)"/><ellipse cx="273.1" cy="127.9" rx="5.2" ry="2.9" fill="#223319" transform="rotate(49 273.1 127.9)"/><ellipse cx="245.0" cy="66.4" rx="5.4" ry="2.1" fill="#223319" transform="rotate(163 245.0 66.4)"/><ellipse cx="249.5" cy="115.8" rx="4.4" ry="1.7" fill="#1b2a14" transform="rotate(90 249.5 115.8)"/><ellipse cx="212.9" cy="219.1" rx="3.4" ry="1.5" fill="#15200f" transform="rotate(123 212.9 219.1)"/><ellipse cx="158.3" cy="147.9" rx="3.8" ry="1.9" fill="#1b2a14" transform="rotate(122 158.3 147.9)"/><ellipse cx="237.9" cy="131.6" rx="4.8" ry="2.1" fill="#1b2a14" transform="rotate(98 237.9 131.6)"/><ellipse cx="173.3" cy="206.5" rx="3.6" ry="2.1" fill="#223319" transform="rotate(88 173.3 206.5)"/><ellipse cx="128.7" cy="175.7" rx="2.8" ry="1.2" fill="#223319" transform="rotate(25 128.7 175.7)"/><ellipse cx="222.8" cy="182.3" rx="4.1" ry="2.2" fill="#15200f" transform="rotate(103 222.8 182.3)"/><ellipse cx="191.4" cy="170.8" rx="5.9" ry="2.2" fill="#223319" transform="rotate(162 191.4 170.8)"/><ellipse cx="162.5" cy="146.3" rx="4.4" ry="2.3" fill="#1b2a14" transform="rotate(171 162.5 146.3)"/><ellipse cx="117.9" cy="183.4" rx="3.3" ry="1.3" fill="#1b2a14" transform="rotate(142 117.9 183.4)"/><ellipse cx="75.2" cy="195.3" rx="5.0" ry="2.0" fill="#15200f" transform="rotate(138 75.2 195.3)"/><ellipse cx="154.1" cy="208.6" rx="4.9" ry="2.3" fill="#1b2a14" transform="rotate(119 154.1 208.6)"/><ellipse cx="50.6" cy="160.0" rx="4.9" ry="1.9" fill="#1b2a14" transform="rotate(162 50.6 160.0)"/><ellipse cx="149.1" cy="191.0" rx="5.1" ry="3.0" fill="#15200f" transform="rotate(130 149.1 191.0)"/><ellipse cx="216.9" cy="117.2" rx="2.6" ry="1.4" fill="#223319" transform="rotate(32 216.9 117.2)"/><ellipse cx="180.4" cy="130.5" rx="3.7" ry="2.0" fill="#223319" transform="rotate(53 180.4 130.5)"/><ellipse cx="125.9" cy="120.4" rx="4.4" ry="2.5" fill="#1b2a14" transform="rotate(90 125.9 120.4)"/><ellipse cx="245.7" cy="133.6" rx="3.5" ry="1.6" fill="#15200f" transform="rotate(167 245.7 133.6)"/><ellipse cx="275.8" cy="79.7" rx="3.6" ry="1.5" fill="#223319" transform="rotate(162 275.8 79.7)"/><ellipse cx="141.8" cy="183.0" rx="5.0" ry="2.9" fill="#223319" transform="rotate(146 141.8 183.0)"/><ellipse cx="128.4" cy="197.1" rx="2.7" ry="1.5" fill="#1b2a14" transform="rotate(155 128.4 197.1)"/><ellipse cx="156.0" cy="136.8" rx="4.6" ry="2.3" fill="#223319" transform="rotate(172 156.0 136.8)"/><ellipse cx="150.4" cy="226.1" rx="4.1" ry="2.2" fill="#15200f" transform="rotate(169 150.4 226.1)"/><ellipse cx="229.2" cy="175.8" rx="2.9" ry="1.7" fill="#15200f" transform="rotate(94 229.2 175.8)"/><ellipse cx="220.8" cy="163.7" rx="3.4" ry="1.4" fill="#1b2a14" transform="rotate(8 220.8 163.7)"/><ellipse cx="182.1" cy="114.1" rx="4.5" ry="2.6" fill="#1b2a14" transform="rotate(145 182.1 114.1)"/><ellipse cx="163.4" cy="151.6" rx="4.0" ry="2.1" fill="#1b2a14" transform="rotate(114 163.4 151.6)"/><ellipse cx="169.6" cy="192.2" rx="4.6" ry="2.7" fill="#15200f" transform="rotate(121 169.6 192.2)"/><ellipse cx="260.1" cy="105.6" rx="4.2" ry="2.4" fill="#223319" transform="rotate(3 260.1 105.6)"/><ellipse cx="307.9" cy="111.6" rx="2.9" ry="1.7" fill="#15200f" transform="rotate(55 307.9 111.6)"/><ellipse cx="143.9" cy="193.4" rx="5.0" ry="2.1" fill="#223319" transform="rotate(47 143.9 193.4)"/><ellipse cx="106.9" cy="221.0" rx="4.9" ry="1.9" fill="#15200f" transform="rotate(75 106.9 221.0)"/><ellipse cx="213.7" cy="129.9" rx="3.4" ry="2.0" fill="#223319" transform="rotate(8 213.7 129.9)"/><ellipse cx="197.7" cy="209.2" rx="4.9" ry="2.5" fill="#1b2a14" transform="rotate(79 197.7 209.2)"/><ellipse cx="148.1" cy="95.1" rx="5.5" ry="2.6" fill="#15200f" transform="rotate(80 148.1 95.1)"/><ellipse cx="188.3" cy="97.2" rx="4.1" ry="1.6" fill="#15200f" transform="rotate(92 188.3 97.2)"/><ellipse cx="200.7" cy="176.1" rx="3.9" ry="2.1" fill="#1b2a14" transform="rotate(145 200.7 176.1)"/><ellipse cx="147.7" cy="118.5" rx="5.9" ry="3.1" fill="#223319" transform="rotate(85 147.7 118.5)"/><ellipse cx="159.9" cy="160.4" rx="3.6" ry="1.6" fill="#15200f" transform="rotate(96 159.9 160.4)"/><ellipse cx="256.5" cy="66.4" rx="5.6" ry="3.1" fill="#1b2a14" transform="rotate(176 256.5 66.4)"/><ellipse cx="129.7" cy="207.8" rx="3.1" ry="1.8" fill="#15200f" transform="rotate(73 129.7 207.8)"/><ellipse cx="230.2" cy="148.5" rx="4.5" ry="1.9" fill="#223319" transform="rotate(175 230.2 148.5)"/><ellipse cx="264.0" cy="122.1" rx="4.4" ry="2.4" fill="#15200f" transform="rotate(59 264.0 122.1)"/><ellipse cx="120.6" cy="86.6" rx="4.1" ry="1.7" fill="#1b2a14" transform="rotate(150 120.6 86.6)"/><ellipse cx="148.6" cy="163.2" rx="2.8" ry="1.5" fill="#15200f" transform="rotate(59 148.6 163.2)"/><ellipse cx="223.2" cy="74.2" rx="5.6" ry="2.7" fill="#1b2a14" transform="rotate(129 223.2 74.2)"/><ellipse cx="219.9" cy="210.2" rx="3.1" ry="1.6" fill="#1b2a14" transform="rotate(147 219.9 210.2)"/><ellipse cx="125.3" cy="127.3" rx="3.0" ry="1.1" fill="#1b2a14" transform="rotate(95 125.3 127.3)"/><ellipse cx="116.8" cy="210.1" rx="2.8" ry="1.2" fill="#15200f" transform="rotate(88 116.8 210.1)"/><ellipse cx="144.9" cy="109.4" rx="2.6" ry="1.6" fill="#223319" transform="rotate(124 144.9 109.4)"/><ellipse cx="212.5" cy="238.3" rx="4.0" ry="2.3" fill="#223319" transform="rotate(155 212.5 238.3)"/><ellipse cx="214.9" cy="201.9" rx="3.2" ry="1.3" fill="#15200f" transform="rotate(7 214.9 201.9)"/><ellipse cx="168.1" cy="195.2" rx="5.0" ry="2.3" fill="#15200f" transform="rotate(153 168.1 195.2)"/><ellipse cx="304.5" cy="84.3" rx="2.8" ry="1.2" fill="#15200f" transform="rotate(164 304.5 84.3)"/><ellipse cx="183.0" cy="179.9" rx="3.9" ry="1.8" fill="#15200f" transform="rotate(94 183.0 179.9)"/><ellipse cx="229.1" cy="194.1" rx="2.6" ry="1.1" fill="#1b2a14" transform="rotate(15 229.1 194.1)"/><ellipse cx="144.9" cy="183.4" rx="5.3" ry="2.8" fill="#223319" transform="rotate(123 144.9 183.4)"/><ellipse cx="161.1" cy="203.0" rx="2.5" ry="1.0" fill="#223319" transform="rotate(76 161.1 203.0)"/><ellipse cx="270.6" cy="93.5" rx="3.6" ry="1.5" fill="#15200f" transform="rotate(95 270.6 93.5)"/><ellipse cx="250.4" cy="135.9" rx="5.3" ry="3.1" fill="#15200f" transform="rotate(119 250.4 135.9)"/><ellipse cx="218.5" cy="181.1" rx="5.4" ry="2.0" fill="#223319" transform="rotate(95 218.5 181.1)"/><ellipse cx="223.9" cy="133.1" rx="5.7" ry="2.6" fill="#15200f" transform="rotate(160 223.9 133.1)"/><ellipse cx="113.9" cy="196.7" rx="5.4" ry="2.5" fill="#223319" transform="rotate(93 113.9 196.7)"/><ellipse cx="198.9" cy="230.5" rx="3.1" ry="1.4" fill="#15200f" transform="rotate(112 198.9 230.5)"/><ellipse cx="212.9" cy="220.6" rx="3.0" ry="1.3" fill="#1b2a14" transform="rotate(85 212.9 220.6)"/><ellipse cx="214.4" cy="207.0" rx="4.1" ry="1.9" fill="#15200f" transform="rotate(131 214.4 207.0)"/></g>
<g opacity="0.6"><ellipse cx="238.2" cy="246.5" rx="3.4" ry="1.6" fill="#b4d484" transform="rotate(30 238.2 246.5)"/><ellipse cx="271.5" cy="148.6" rx="2.4" ry="1.0" fill="#9cc068" transform="rotate(60 271.5 148.6)"/><ellipse cx="243.8" cy="269.9" rx="1.8" ry="1.0" fill="#b4d484" transform="rotate(36 243.8 269.9)"/><ellipse cx="239.4" cy="267.1" rx="2.5" ry="1.2" fill="#86ac54" transform="rotate(73 239.4 267.1)"/><ellipse cx="252.4" cy="264.7" rx="2.3" ry="1.0" fill="#9cc068" transform="rotate(35 252.4 264.7)"/><ellipse cx="245.0" cy="260.8" rx="1.9" ry="0.9" fill="#9cc068" transform="rotate(155 245.0 260.8)"/><ellipse cx="270.8" cy="199.5" rx="1.8" ry="0.9" fill="#86ac54" transform="rotate(49 270.8 199.5)"/><ellipse cx="272.0" cy="223.8" rx="3.0" ry="1.3" fill="#86ac54" transform="rotate(14 272.0 223.8)"/><ellipse cx="252.4" cy="256.3" rx="3.2" ry="1.5" fill="#9cc068" transform="rotate(104 252.4 256.3)"/><ellipse cx="287.8" cy="242.5" rx="2.0" ry="1.0" fill="#b4d484" transform="rotate(9 287.8 242.5)"/><ellipse cx="249.6" cy="247.0" rx="3.2" ry="1.4" fill="#b4d484" transform="rotate(132 249.6 247.0)"/><ellipse cx="271.1" cy="275.1" rx="3.1" ry="1.8" fill="#b4d484" transform="rotate(97 271.1 275.1)"/><ellipse cx="253.3" cy="267.5" rx="3.0" ry="1.4" fill="#9cc068" transform="rotate(135 253.3 267.5)"/><ellipse cx="291.3" cy="266.1" rx="1.9" ry="0.8" fill="#9cc068" transform="rotate(79 291.3 266.1)"/><ellipse cx="227.8" cy="193.8" rx="1.5" ry="0.9" fill="#86ac54" transform="rotate(49 227.8 193.8)"/><ellipse cx="294.2" cy="218.8" rx="2.7" ry="1.3" fill="#86ac54" transform="rotate(113 294.2 218.8)"/><ellipse cx="251.3" cy="266.3" rx="1.9" ry="0.8" fill="#b4d484" transform="rotate(126 251.3 266.3)"/><ellipse cx="277.1" cy="223.1" rx="3.3" ry="1.6" fill="#9cc068" transform="rotate(58 277.1 223.1)"/><ellipse cx="247.4" cy="250.3" rx="2.3" ry="1.3" fill="#9cc068" transform="rotate(162 247.4 250.3)"/><ellipse cx="261.6" cy="183.4" rx="2.7" ry="1.0" fill="#9cc068" transform="rotate(92 261.6 183.4)"/><ellipse cx="242.1" cy="242.9" rx="2.9" ry="1.6" fill="#86ac54" transform="rotate(82 242.1 242.9)"/><ellipse cx="273.4" cy="208.2" rx="2.5" ry="1.5" fill="#b4d484" transform="rotate(63 273.4 208.2)"/><ellipse cx="268.6" cy="211.7" rx="1.7" ry="0.7" fill="#b4d484" transform="rotate(110 268.6 211.7)"/><ellipse cx="252.1" cy="261.9" rx="1.8" ry="1.1" fill="#b4d484" transform="rotate(162 252.1 261.9)"/><ellipse cx="265.6" cy="238.8" rx="3.3" ry="1.2" fill="#86ac54" transform="rotate(158 265.6 238.8)"/><ellipse cx="291.9" cy="197.8" rx="2.8" ry="1.5" fill="#9cc068" transform="rotate(159 291.9 197.8)"/><ellipse cx="254.9" cy="276.5" rx="2.4" ry="1.4" fill="#b4d484" transform="rotate(28 254.9 276.5)"/><ellipse cx="263.7" cy="227.4" rx="1.6" ry="1.0" fill="#86ac54" transform="rotate(68 263.7 227.4)"/><ellipse cx="238.1" cy="265.1" rx="1.8" ry="0.7" fill="#9cc068" transform="rotate(75 238.1 265.1)"/><ellipse cx="257.3" cy="205.7" rx="3.0" ry="1.6" fill="#b4d484" transform="rotate(116 257.3 205.7)"/><ellipse cx="249.5" cy="255.5" rx="2.9" ry="1.4" fill="#86ac54" transform="rotate(77 249.5 255.5)"/><ellipse cx="254.8" cy="219.2" rx="2.0" ry="0.8" fill="#86ac54" transform="rotate(139 254.8 219.2)"/><ellipse cx="287.8" cy="210.2" rx="3.3" ry="1.3" fill="#9cc068" transform="rotate(82 287.8 210.2)"/><ellipse cx="255.3" cy="216.1" rx="3.5" ry="1.5" fill="#9cc068" transform="rotate(40 255.3 216.1)"/><ellipse cx="244.8" cy="255.1" rx="2.8" ry="1.3" fill="#b4d484" transform="rotate(90 244.8 255.1)"/><ellipse cx="213.2" cy="257.3" rx="2.9" ry="1.7" fill="#b4d484" transform="rotate(86 213.2 257.3)"/><ellipse cx="277.7" cy="228.0" rx="2.7" ry="1.1" fill="#86ac54" transform="rotate(24 277.7 228.0)"/><ellipse cx="267.0" cy="250.0" rx="2.8" ry="1.5" fill="#b4d484" transform="rotate(26 267.0 250.0)"/><ellipse cx="240.0" cy="270.1" rx="1.7" ry="0.8" fill="#86ac54" transform="rotate(38 240.0 270.1)"/><ellipse cx="278.6" cy="198.6" rx="2.7" ry="1.0" fill="#b4d484" transform="rotate(177 278.6 198.6)"/><ellipse cx="266.0" cy="237.7" rx="2.2" ry="1.1" fill="#86ac54" transform="rotate(98 266.0 237.7)"/><ellipse cx="299.8" cy="216.8" rx="3.5" ry="1.5" fill="#b4d484" transform="rotate(47 299.8 216.8)"/><ellipse cx="276.3" cy="189.7" rx="2.3" ry="0.9" fill="#b4d484" transform="rotate(82 276.3 189.7)"/><ellipse cx="264.1" cy="259.9" rx="2.4" ry="1.4" fill="#9cc068" transform="rotate(6 264.1 259.9)"/><ellipse cx="253.8" cy="287.5" rx="2.1" ry="1.0" fill="#b4d484" transform="rotate(137 253.8 287.5)"/><ellipse cx="248.4" cy="211.7" rx="2.9" ry="1.3" fill="#b4d484" transform="rotate(10 248.4 211.7)"/><ellipse cx="267.5" cy="216.0" rx="1.6" ry="0.7" fill="#b4d484" transform="rotate(95 267.5 216.0)"/><ellipse cx="245.4" cy="168.9" rx="1.8" ry="0.7" fill="#b4d484" transform="rotate(124 245.4 168.9)"/><ellipse cx="246.6" cy="227.8" rx="3.5" ry="1.5" fill="#86ac54" transform="rotate(23 246.6 227.8)"/><ellipse cx="246.3" cy="270.7" rx="1.7" ry="0.7" fill="#9cc068" transform="rotate(28 246.3 270.7)"/><ellipse cx="257.7" cy="171.9" rx="3.5" ry="2.0" fill="#b4d484" transform="rotate(161 257.7 171.9)"/><ellipse cx="229.5" cy="258.7" rx="1.9" ry="1.1" fill="#b4d484" transform="rotate(46 229.5 258.7)"/><ellipse cx="242.0" cy="250.1" rx="2.2" ry="1.3" fill="#86ac54" transform="rotate(10 242.0 250.1)"/><ellipse cx="271.3" cy="215.1" rx="2.9" ry="1.4" fill="#b4d484" transform="rotate(101 271.3 215.1)"/><ellipse cx="237.2" cy="252.8" rx="1.9" ry="0.9" fill="#86ac54" transform="rotate(145 237.2 252.8)"/><ellipse cx="296.4" cy="176.5" rx="2.5" ry="1.0" fill="#9cc068" transform="rotate(105 296.4 176.5)"/><ellipse cx="265.3" cy="273.5" rx="2.5" ry="0.9" fill="#9cc068" transform="rotate(43 265.3 273.5)"/><ellipse cx="281.0" cy="184.1" rx="3.1" ry="1.1" fill="#9cc068" transform="rotate(175 281.0 184.1)"/><ellipse cx="278.2" cy="229.5" rx="2.1" ry="0.7" fill="#86ac54" transform="rotate(25 278.2 229.5)"/><ellipse cx="246.1" cy="272.7" rx="2.3" ry="0.8" fill="#b4d484" transform="rotate(149 246.1 272.7)"/><ellipse cx="236.9" cy="268.2" rx="2.0" ry="0.7" fill="#86ac54" transform="rotate(44 236.9 268.2)"/><ellipse cx="306.1" cy="216.9" rx="2.4" ry="1.1" fill="#b4d484" transform="rotate(126 306.1 216.9)"/><ellipse cx="255.6" cy="273.9" rx="2.9" ry="1.2" fill="#b4d484" transform="rotate(102 255.6 273.9)"/><ellipse cx="305.9" cy="222.1" rx="1.7" ry="0.7" fill="#b4d484" transform="rotate(47 305.9 222.1)"/><ellipse cx="266.4" cy="260.2" rx="2.6" ry="1.0" fill="#86ac54" transform="rotate(98 266.4 260.2)"/><ellipse cx="264.6" cy="220.3" rx="1.7" ry="1.0" fill="#b4d484" transform="rotate(141 264.6 220.3)"/><ellipse cx="243.1" cy="270.8" rx="2.2" ry="1.0" fill="#b4d484" transform="rotate(170 243.1 270.8)"/><ellipse cx="250.6" cy="267.9" rx="2.9" ry="1.1" fill="#b4d484" transform="rotate(139 250.6 267.9)"/><ellipse cx="240.2" cy="257.4" rx="3.1" ry="1.3" fill="#b4d484" transform="rotate(90 240.2 257.4)"/><ellipse cx="252.7" cy="250.5" rx="3.4" ry="1.4" fill="#b4d484" transform="rotate(129 252.7 250.5)"/><ellipse cx="257.2" cy="275.0" rx="1.8" ry="0.9" fill="#b4d484" transform="rotate(152 257.2 275.0)"/><ellipse cx="255.3" cy="202.5" rx="2.0" ry="1.0" fill="#9cc068" transform="rotate(32 255.3 202.5)"/><ellipse cx="252.3" cy="257.3" rx="3.2" ry="1.7" fill="#b4d484" transform="rotate(7 252.3 257.3)"/><ellipse cx="249.8" cy="273.1" rx="1.7" ry="0.7" fill="#9cc068" transform="rotate(82 249.8 273.1)"/><ellipse cx="251.5" cy="257.1" rx="2.6" ry="1.2" fill="#86ac54" transform="rotate(76 251.5 257.1)"/><ellipse cx="266.1" cy="266.2" rx="2.0" ry="0.7" fill="#86ac54" transform="rotate(102 266.1 266.2)"/><ellipse cx="248.6" cy="252.9" rx="2.4" ry="1.2" fill="#86ac54" transform="rotate(33 248.6 252.9)"/><ellipse cx="277.7" cy="236.4" rx="3.1" ry="1.6" fill="#b4d484" transform="rotate(6 277.7 236.4)"/><ellipse cx="270.3" cy="263.4" rx="2.2" ry="1.1" fill="#9cc068" transform="rotate(74 270.3 263.4)"/><ellipse cx="252.5" cy="278.3" rx="1.9" ry="1.0" fill="#b4d484" transform="rotate(10 252.5 278.3)"/><ellipse cx="233.6" cy="270.5" rx="1.8" ry="1.0" fill="#86ac54" transform="rotate(79 233.6 270.5)"/><ellipse cx="245.8" cy="258.6" rx="2.5" ry="1.2" fill="#b4d484" transform="rotate(171 245.8 258.6)"/><ellipse cx="278.1" cy="210.2" rx="3.0" ry="1.6" fill="#9cc068" transform="rotate(149 278.1 210.2)"/><ellipse cx="275.9" cy="259.1" rx="1.6" ry="0.7" fill="#b4d484" transform="rotate(22 275.9 259.1)"/><ellipse cx="263.9" cy="191.5" rx="3.0" ry="1.7" fill="#b4d484" transform="rotate(134 263.9 191.5)"/><ellipse cx="235.1" cy="285.8" rx="2.4" ry="1.0" fill="#86ac54" transform="rotate(176 235.1 285.8)"/><ellipse cx="243.0" cy="213.0" rx="1.9" ry="1.0" fill="#9cc068" transform="rotate(125 243.0 213.0)"/><ellipse cx="276.0" cy="267.1" rx="3.1" ry="1.3" fill="#86ac54" transform="rotate(41 276.0 267.1)"/><ellipse cx="244.8" cy="259.5" rx="1.6" ry="0.7" fill="#b4d484" transform="rotate(23 244.8 259.5)"/><ellipse cx="250.0" cy="257.1" rx="2.9" ry="1.4" fill="#b4d484" transform="rotate(60 250.0 257.1)"/></g>
</g>
<g filter="url(#b05)">
<path d="M104.3 90.8Q113.1 97.0 119.1 106.4M106.5 89.2Q115.5 95.9 121.6 106.0M108.6 87.6Q117.3 95.5 122.5 106.4M110.8 86.1Q118.4 93.1 123.0 102.8M113.0 84.5Q122.7 92.2 128.8 103.5M115.2 83.0Q125.4 90.9 131.9 102.5M117.5 81.5Q126.0 90.3 130.8 102.2M119.7 80.0Q130.2 88.5 136.9 100.8M121.9 78.5Q132.3 89.1 138.0 103.3M124.2 77.0Q133.8 85.2 139.9 96.8M126.5 75.5Q137.2 84.1 144.0 96.6M128.8 74.1Q138.7 82.2 144.9 94.0M131.1 72.6Q141.6 82.2 147.9 95.6M133.4 71.2Q141.5 78.7 146.3 89.1M135.7 69.8Q146.1 79.0 152.4 92.0M138.0 68.4Q146.1 76.7 150.6 88.0M140.4 67.0Q147.8 74.7 151.9 85.0M142.7 65.6Q149.3 72.4 153.0 81.5M145.1 64.2Q153.4 72.8 157.9 84.4M147.5 62.9Q155.0 70.4 159.2 80.6M149.9 61.5Q156.9 68.5 160.9 78.1M152.3 60.2Q157.9 67.3 160.5 76.3M154.7 58.9Q159.8 65.0 162.3 73.0M157.1 57.6Q161.9 62.7 164.5 69.4M159.6 56.3Q163.9 60.8 166.3 66.9M162.0 55.0Q166.7 60.7 168.9 68.1M164.5 53.7Q169.3 59.6 171.7 67.1M167.0 52.5Q170.9 57.4 172.7 63.6M169.5 51.2Q173.5 55.8 175.6 61.9M172.0 50.0Q176.2 54.8 178.3 61.1" stroke="#121c0e" stroke-width="1.6" fill="none" opacity="0.6" stroke-linecap="round"/>
<path d="M103.3 91.5Q116.7 101.1 125.7 115.6M105.5 89.9Q119.1 100.3 128.0 115.7M107.7 88.3Q118.8 97.0 126.0 109.8M109.9 86.7Q122.4 96.4 130.6 110.6M112.1 85.1Q125.3 95.5 133.8 110.7M114.4 83.6Q128.4 93.4 138.0 108.3M116.6 82.0Q128.8 92.9 136.3 108.1M118.9 80.5Q135.5 92.5 146.8 110.7M121.2 79.0Q134.6 88.3 143.8 102.6M123.5 77.5Q138.7 91.5 147.7 111.0M125.8 76.0Q142.9 89.5 154.0 109.3M128.1 74.5Q141.2 84.3 149.8 98.9M130.4 73.0Q144.0 85.2 152.1 102.4M132.8 71.6Q148.6 85.5 158.3 105.1M135.1 70.1Q149.9 81.4 159.6 98.2M137.5 68.7Q150.2 78.5 158.4 92.9M139.9 67.3Q153.2 78.7 161.5 94.9M142.3 65.9Q155.3 78.9 162.7 96.7M144.7 64.5Q156.5 74.2 163.9 88.3M147.1 63.1Q158.1 71.8 165.2 84.5M149.5 61.7Q159.4 71.9 164.8 85.6M152.0 60.4Q161.8 68.6 168.0 80.4M154.4 59.0Q162.4 65.6 167.4 75.1M156.9 57.7Q164.7 66.2 168.8 77.5M159.4 56.4Q166.4 62.2 170.8 70.5M161.9 55.1Q170.8 63.0 176.1 74.1M164.4 53.8Q172.4 61.5 177.1 72.1M166.9 52.5Q172.9 59.1 175.9 67.9M169.5 51.3Q177.1 59.2 181.2 69.9M172.0 50.0Q179.1 57.5 183.0 67.5" stroke="#a2ad7c" stroke-width="1.5" fill="none" opacity="0.62" stroke-linecap="round"/><path d="M100 94Q133 69 172 50" stroke="#8c9a70" stroke-width="1.6" fill="none" opacity="0.87" stroke-linecap="round"/>
</g>
<g filter="url(#b1)">
<path d="M232.2 52.2Q242.4 60.3 254.7 65.2M232.2 52.2Q220.0 56.7 206.8 57.5M231.7 54.6Q243.0 63.1 256.5 68.1M231.7 54.6Q218.5 59.5 204.1 60.4M231.2 57.0Q242.8 65.9 256.8 71.2M231.2 57.0Q217.1 60.9 202.1 60.6M230.6 59.3Q242.5 69.7 257.2 76.2M230.6 59.3Q215.5 63.7 199.4 63.4M230.0 61.7Q241.4 72.3 255.7 79.3M230.0 61.7Q215.1 66.4 199.2 66.6M229.3 64.1Q241.6 74.9 257.0 81.9M229.3 64.1Q213.2 67.5 196.4 66.0M228.5 66.4Q239.6 78.3 254.0 86.6M228.5 66.4Q212.6 69.5 196.1 67.8M227.8 68.7Q237.7 80.1 250.7 88.3M227.8 68.7Q213.0 71.7 197.7 70.2M227.0 71.1Q236.8 82.3 249.8 90.3M227.0 71.1Q212.3 74.1 197.2 72.7M226.1 73.4Q239.0 87.5 255.8 97.5M226.1 73.4Q207.5 77.8 188.0 76.6M225.2 75.7Q236.4 88.0 251.0 96.8M225.2 75.7Q208.9 79.3 191.9 78.0M224.2 78.0Q237.1 92.5 254.1 102.8M224.2 78.0Q205.0 80.3 185.5 76.7M223.2 80.3Q232.1 93.0 244.6 102.8M223.2 80.3Q207.8 82.1 192.2 79.2M222.2 82.6Q231.0 95.0 243.4 104.5M222.2 82.6Q207.0 83.9 191.8 80.7M221.1 84.8Q230.2 97.1 242.7 106.5M221.1 84.8Q205.9 86.3 190.6 83.2M220.0 87.1Q229.4 101.7 242.9 113.1M220.0 87.1Q202.7 87.4 185.6 82.6M218.8 89.3Q227.2 103.4 239.5 114.6M218.8 89.3Q202.5 90.0 186.3 85.7M217.6 91.6Q227.7 105.3 241.6 115.7M217.6 91.6Q200.6 92.4 183.7 88.2M216.3 93.8Q223.7 107.1 234.8 117.9M216.3 93.8Q201.1 93.2 186.5 88.1M215.0 96.0Q221.9 109.6 232.6 120.8M215.0 96.0Q199.8 96.2 184.9 91.9M213.7 98.2Q220.3 110.5 230.4 120.4M213.7 98.2Q199.8 98.1 186.2 93.9M212.3 100.4Q220.4 113.4 232.2 123.7M212.3 100.4Q196.9 100.2 182.0 95.4M210.8 102.6Q216.3 112.4 224.6 120.3M210.8 102.6Q199.6 102.0 188.8 98.1M209.3 104.8Q215.4 114.8 224.4 122.8M209.3 104.8Q197.6 105.1 186.0 101.8M207.8 106.9Q212.3 118.1 220.1 127.7M207.8 106.9Q195.8 106.2 184.2 102.0M206.2 109.1Q210.8 117.4 217.6 124.1M206.2 109.1Q196.9 107.7 188.2 103.6M204.6 111.2Q207.6 119.4 212.9 126.4M204.6 111.2Q196.0 110.8 187.6 107.8M202.9 113.4Q206.0 121.1 211.2 127.7M202.9 113.4Q194.7 112.7 186.9 109.5M201.2 115.5Q204.2 124.0 209.7 131.3M201.2 115.5Q192.4 113.9 184.2 109.8M199.5 117.6Q203.9 126.6 211.0 134.0M199.5 117.6Q189.5 116.6 180.1 112.6M197.7 119.7Q200.8 127.8 206.2 134.7M197.7 119.7Q189.2 118.4 181.3 114.5M195.8 121.8Q198.9 130.2 204.5 137.5M195.8 121.8Q187.1 119.9 179.1 115.3M193.9 123.9Q197.1 132.3 202.7 139.5M193.9 123.9Q185.1 122.5 176.9 118.5M192.0 126.0Q195.8 134.9 202.1 142.4M192.0 126.0Q182.7 123.5 174.4 118.2" stroke="#848f70" stroke-width="1.5" fill="none" opacity="0.38" stroke-linecap="round"/><path d="M233 48Q226 90 192 126" stroke="#bcc298" stroke-width="2.0" fill="none" opacity="0.63" stroke-linecap="round"/>
<path d="M261.9 64.0Q271.0 69.3 282.2 69.9M261.9 64.0Q252.9 69.5 241.8 70.2M261.8 67.0Q270.0 73.4 280.9 75.3M261.8 67.0Q253.0 72.6 242.0 73.5M261.6 70.1Q273.1 78.0 287.8 79.8M261.6 70.1Q250.0 77.9 235.3 79.6M261.3 73.1Q271.8 79.9 285.0 81.1M261.3 73.1Q250.0 78.4 236.8 77.7M260.9 76.2Q273.0 85.9 289.2 89.2M260.9 76.2Q246.8 82.6 230.3 81.6M260.5 79.2Q272.4 88.0 287.9 90.4M260.5 79.2Q246.8 84.6 231.2 82.9M260.0 82.2Q272.5 92.0 289.0 95.0M260.0 82.2Q245.6 89.0 228.8 88.3M259.4 85.3Q268.3 94.5 281.1 98.8M259.4 85.3Q247.7 90.4 234.2 89.4M258.7 88.3Q270.4 97.6 285.9 100.6M258.7 88.3Q244.6 93.2 229.0 90.7M258.0 91.4Q267.2 100.7 280.4 104.8M258.0 91.4Q245.7 95.7 232.0 93.7M257.2 94.4Q267.3 105.9 282.4 111.7M257.2 94.4Q242.5 98.4 226.7 94.8M256.3 97.4Q266.9 108.6 282.4 113.8M256.3 97.4Q241.9 102.9 225.7 100.8M255.3 100.5Q266.1 112.5 282.1 118.6M255.3 100.5Q240.0 105.5 223.1 102.6M254.3 103.5Q263.6 113.8 277.4 118.8M254.3 103.5Q241.2 108.0 226.7 105.7M253.2 106.6Q262.3 116.7 275.9 121.7M253.2 106.6Q239.8 109.2 225.9 105.1M252.0 109.6Q260.5 119.9 273.6 125.4M252.0 109.6Q239.0 112.7 225.3 109.1M250.7 112.6Q259.1 123.1 272.0 128.8M250.7 112.6Q237.8 115.7 224.1 112.2M249.4 115.7Q256.2 124.3 266.8 129.0M249.4 115.7Q238.7 118.1 227.5 115.2M248.0 118.7Q254.2 128.2 264.8 133.9M248.0 118.7Q236.8 120.4 225.4 116.3M246.5 121.8Q252.4 129.8 262.0 134.3M246.5 121.8Q236.7 123.4 226.7 120.1M244.9 124.8Q248.4 131.3 254.8 135.7M244.9 124.8Q237.7 125.9 230.3 123.3M243.3 127.8Q247.6 135.1 255.2 139.8M243.3 127.8Q235.0 129.2 226.5 126.4M241.6 130.9Q245.5 138.7 253.0 144.2M241.6 130.9Q232.9 131.1 224.6 127.0M239.8 133.9Q243.6 140.1 250.2 144.0M239.8 133.9Q232.6 134.5 225.5 131.5M237.9 137.0Q242.4 144.1 250.1 148.7M237.9 137.0Q229.5 137.0 221.6 132.9M236.0 140.0Q240.4 147.8 248.4 153.0M236.0 140.0Q227.0 139.9 218.7 135.3" stroke="#7a876e" stroke-width="1.0" fill="none" opacity="0.22" stroke-linecap="round"/><path d="M262 60Q262 100 236 140" stroke="#7d8a70" stroke-width="1.2" fill="none" opacity="0.47" stroke-linecap="round"/>
<path d="M235.0 190.9Q238.7 201.9 236.7 213.9M235.0 190.9Q245.0 185.1 251.4 174.7M237.3 191.5Q241.4 204.0 239.1 217.7M237.3 191.5Q248.3 184.2 254.9 172.0M239.7 192.0Q243.3 205.0 240.3 218.9M239.7 192.0Q250.4 183.9 256.4 171.0M242.1 192.4Q246.9 206.1 244.7 221.3M242.1 192.4Q253.2 183.1 259.0 168.9M244.4 192.7Q250.8 209.2 248.6 227.8M244.4 192.7Q257.2 180.6 263.2 162.8M246.9 193.0Q254.0 209.7 252.4 229.0M246.9 193.0Q260.6 180.9 267.5 162.8M249.3 193.1Q256.9 205.9 257.7 221.7M249.3 193.1Q259.9 182.6 264.8 167.6M251.8 193.1Q260.9 208.3 262.0 227.1M251.8 193.1Q262.9 179.3 266.5 160.8M254.2 193.1Q263.0 209.2 263.2 228.7M254.2 193.1Q265.7 178.7 269.3 159.5M256.7 192.9Q264.9 205.7 266.1 221.7M256.7 192.9Q265.1 180.3 266.6 164.3M259.3 192.7Q269.1 206.7 271.4 224.8M259.3 192.7Q269.8 179.1 273.0 161.2M261.8 192.4Q271.3 203.2 274.9 218.0M261.8 192.4Q270.2 180.6 272.2 165.5M264.4 191.9Q275.5 204.2 279.8 221.1M264.4 191.9Q272.2 177.4 272.4 159.9M267.0 191.4Q276.5 203.6 279.3 219.7M267.0 191.4Q274.6 178.0 275.1 161.7M269.6 190.8Q279.9 203.0 283.5 219.5M269.6 190.8Q277.4 176.9 277.8 160.0M272.3 190.1Q282.4 199.0 287.4 212.3M272.3 190.1Q278.6 178.2 278.6 164.0M274.9 189.3Q284.5 198.9 288.8 212.6M274.9 189.3Q280.4 176.9 279.4 162.6M277.6 188.4Q286.9 195.3 292.1 206.3M277.6 188.4Q281.0 177.4 278.6 165.4M280.4 187.4Q288.7 195.2 292.6 206.6M280.4 187.4Q283.7 176.6 281.6 164.7M283.1 186.4Q291.8 192.3 297.1 202.2M283.1 186.4Q285.9 176.2 283.5 165.2M285.8 185.2Q292.8 189.7 297.1 197.4M285.8 185.2Q287.6 177.1 285.3 168.6M288.6 183.9Q295.1 189.0 298.6 196.8M288.6 183.9Q290.8 176.1 289.0 167.6M291.4 182.6Q300.1 187.5 305.9 196.3M291.4 182.6Q293.4 172.8 290.5 162.7M294.3 181.2Q302.9 185.7 308.7 194.3M294.3 181.2Q296.1 171.6 293.1 161.7M297.1 179.6Q304.1 183.6 308.7 190.7M297.1 179.6Q299.1 171.9 297.2 163.6M300.0 178.0Q307.0 182.0 311.5 189.2M300.0 178.0Q301.5 170.1 299.1 162.0" stroke="#a8b482" stroke-width="1.0" fill="none" opacity="0.4" stroke-linecap="round"/><path d="M232 190Q262 200 300 178" stroke="#7f9366" stroke-width="1.2" fill="none" opacity="0.65" stroke-linecap="round"/>
<path d="M238.6 235.9Q245.5 246.3 246.8 259.4M238.6 235.9Q245.9 225.8 247.7 212.8M240.8 235.8Q248.7 246.5 250.8 260.4M240.8 235.8Q247.7 224.4 248.5 210.3M243.0 235.6Q250.1 247.7 250.7 262.6M243.0 235.6Q249.4 223.1 249.2 208.2M245.2 235.3Q253.7 248.1 255.3 264.4M245.2 235.3Q250.9 221.0 249.2 204.7M247.4 234.9Q255.5 245.5 257.9 259.4M247.4 234.9Q252.5 222.5 251.1 208.4M249.6 234.4Q258.5 245.4 261.4 260.2M249.6 234.4Q255.6 221.6 255.0 206.6M251.8 233.9Q261.6 242.9 266.3 256.2M251.8 233.9Q255.9 221.2 253.4 207.3M254.1 233.2Q264.1 244.6 267.9 260.1M254.1 233.2Q258.5 218.8 255.6 203.1M256.4 232.5Q267.0 242.2 272.2 256.5M256.4 232.5Q260.9 218.9 258.4 203.9M258.6 231.7Q271.5 242.1 278.5 258.1M258.6 231.7Q264.1 216.2 261.5 198.9M260.9 230.9Q272.7 240.0 279.3 254.4M260.9 230.9Q264.6 216.4 260.9 201.0M263.2 229.9Q275.4 239.6 282.1 254.7M263.2 229.9Q265.2 214.5 259.5 199.0M265.6 228.9Q276.8 237.8 282.9 251.7M265.6 228.9Q268.2 214.8 263.7 200.3M267.9 227.7Q279.1 235.9 285.6 249.2M267.9 227.7Q269.7 213.9 264.5 200.1M270.2 226.5Q280.8 233.2 287.5 244.6M270.2 226.5Q271.3 214.1 266.1 201.9M272.6 225.2Q282.9 231.0 289.7 241.4M272.6 225.2Q274.4 213.6 270.3 201.8M275.0 223.9Q285.8 229.6 293.0 240.4M275.0 223.9Q276.2 211.7 271.3 199.7M277.4 222.4Q285.2 227.8 289.9 236.7M277.4 222.4Q278.6 213.0 275.0 203.6M279.8 220.9Q288.0 224.8 293.9 232.6M279.8 220.9Q280.1 211.7 276.0 203.0M282.2 219.3Q288.7 223.1 292.9 229.8M282.2 219.3Q282.0 211.8 278.1 204.8M284.6 217.6Q292.1 221.7 297.1 229.2M284.6 217.6Q285.1 209.1 281.3 200.9M287.1 215.8Q295.1 220.2 300.5 228.3M287.1 215.8Q287.2 206.6 282.8 198.0M289.5 213.9Q297.2 217.2 302.8 224.0M289.5 213.9Q289.4 205.6 285.2 197.9M292.0 212.0Q299.2 215.6 304.2 222.6M292.0 212.0Q291.1 203.9 286.3 196.8" stroke="#a8b482" stroke-width="1.0" fill="none" opacity="0.4" stroke-linecap="round"/><path d="M236 236Q262 236 292 212" stroke="#7f9366" stroke-width="1.2" fill="none" opacity="0.65" stroke-linecap="round"/>
<path d="M234.6 159.0Q242.5 168.0 245.4 180.4M234.6 159.0Q237.5 147.4 234.5 135.1M237.0 158.2Q243.9 166.1 246.5 176.9M237.0 158.2Q239.2 147.9 236.1 137.2M239.4 157.4Q248.8 166.1 253.3 178.9M239.4 157.4Q243.8 145.4 242.0 131.9M241.9 156.6Q251.2 167.7 254.4 182.6M241.9 156.6Q246.1 142.8 243.2 127.8M244.3 155.9Q252.5 165.1 255.7 177.7M244.3 155.9Q249.1 144.6 248.0 131.7M246.8 155.2Q255.0 165.6 257.5 179.4M246.8 155.2Q252.1 143.1 251.1 129.2M249.3 154.6Q257.5 163.4 260.8 175.6M249.3 154.6Q254.1 143.6 253.1 131.0M251.9 154.0Q260.0 164.0 262.7 177.5M251.9 154.0Q256.4 141.9 254.8 128.3M254.4 153.5Q262.9 164.1 265.7 178.2M254.4 153.5Q260.6 141.3 260.3 126.9M257.0 152.9Q264.1 164.6 265.0 179.1M257.0 152.9Q263.2 140.8 263.0 126.3M259.6 152.5Q266.4 163.8 267.1 177.8M259.6 152.5Q265.8 140.8 265.8 126.8M262.3 152.0Q271.0 163.6 273.5 178.8M262.3 152.0Q268.3 138.8 267.3 123.5M264.9 151.7Q271.4 160.1 273.3 171.2M264.9 151.7Q270.3 142.5 270.9 131.3M267.6 151.3Q273.4 160.1 274.6 171.2M267.6 151.3Q272.7 142.1 273.0 131.0M270.3 151.0Q277.0 161.0 278.3 173.6M270.3 151.0Q275.4 140.1 274.7 127.5M273.1 150.7Q277.8 160.0 277.6 171.1M273.1 150.7Q278.6 141.9 279.4 130.9M275.8 150.5Q279.2 157.2 279.0 165.1M275.8 150.5Q279.6 144.0 279.9 136.1M278.6 150.3Q282.6 156.8 283.1 164.7M278.6 150.3Q283.0 144.2 284.1 136.3M281.4 150.2Q284.8 157.6 284.4 166.2M281.4 150.2Q285.4 143.1 285.6 134.5M284.3 150.1Q288.6 157.6 288.9 166.7M284.3 150.1Q288.8 142.7 289.4 133.6M287.1 150.0Q290.6 156.9 290.5 165.0M287.1 150.0Q291.7 143.8 292.9 135.7M290.0 150.0Q293.3 156.9 293.1 164.9M290.0 150.0Q294.3 143.7 295.2 135.7" stroke="#98ab80" stroke-width="1.0" fill="none" opacity="0.4" stroke-linecap="round"/>
</g>
<g filter="url(#b3)"><ellipse cx="229" cy="252" rx="9" ry="24" fill="#16200f" opacity="0.8" transform="rotate(-28 229 252)"/></g>
<g mask="url(#mGrass)"><g filter="url(#b3)"><polygon points="100,266 122,256 150,246 182,238 192,233 206,236 215,258 228,280 239,298 233,330 230,392 220,432 230,474 238,510 200,510 100,330" fill="#aaa656" opacity="1" /><ellipse cx="134" cy="265" rx="20" ry="11" fill="#77755c" opacity="0.85" transform="rotate(-15 134 265)"/><ellipse cx="125" cy="262" rx="26" ry="6" fill="#708844" opacity="0.7" transform="rotate(-18 125 262)"/><polygon points="184,240 192,234 205,236 214,258 228,280 238,298 232,312 212,308 196,290 186,268" fill="#b5a07a" opacity="1" /><ellipse cx="215" cy="330" rx="14" ry="40" fill="#8c9a4c" opacity="0.7" transform="rotate(0 215 330)"/></g><rect x="100" y="46" width="264" height="462" filter="url(#nGrassLo)" /><rect x="100" y="46" width="264" height="462" filter="url(#nGrassMid)" /><rect x="100" y="46" width="264" height="462" filter="url(#nGrass)" /></g>
<g mask="url(#mGrass)"><g filter="url(#b3)"><polygon points="184,240 192,234 205,236 214,258 228,280 238,298 232,312 212,308 196,290 186,268" fill="#a88e68" opacity="0.55" /><path d="M222 276Q232 292 236 304" stroke="#c8b878" stroke-width="5" opacity="0.55" fill="none"/></g></g>
<g mask="url(#mTall)"><g filter="url(#b5)"><polygon points="226,296 262,283 277,287 364,370 364,470 300,510 236,510 229,474 219,432 231,392 232,330" fill="#73944a" opacity="1" /><ellipse cx="300" cy="328" rx="40" ry="16" fill="#88b066" opacity="0.9" transform="rotate(43 300 328)"/><ellipse cx="335" cy="445" rx="42" ry="52" fill="#456232" opacity="0.95" transform="rotate(0 335 445)"/><polygon points="226,296 246,292 262,340 290,420 326,510 236,510 229,474 219,432 231,392 232,330" fill="#45452f" opacity="0.95" /><ellipse cx="239" cy="398" rx="10" ry="11" fill="#6a9a3c" opacity="0.9" transform="rotate(0 239 398)"/></g><g transform="rotate(-58 310 400)"><rect x="60" y="100" width="520" height="600" filter="url(#nTall)" /></g><rect x="100" y="46" width="264" height="462" filter="url(#nTall2)" /></g>
<g mask="url(#mTall)"><g filter="url(#b05)">
<path d="M314.6 434.0Q312.8 418.3 329.9 406.3" stroke="#25331c" stroke-width="2.0" opacity="0.6" fill="none" stroke-linecap="round"/><path d="M231.2 397.6Q237.8 392.1 247.6 392.7" stroke="#25331c" stroke-width="1.9" opacity="0.4" fill="none" stroke-linecap="round"/><path d="M241.2 500.3Q247.2 499.7 253.3 500.5M293.5 432.9Q293.6 418.1 298.3 403.7M355.8 376.5Q356.1 367.8 369.0 365.2" stroke="#3a4a2a" stroke-width="1.2" opacity="0.6" fill="none" stroke-linecap="round"/><path d="M295.1 308.5Q298.0 299.0 309.1 294.6M258.1 415.1Q266.3 410.4 277.1 416.3M242.7 438.0Q250.3 440.3 256.9 445.3" stroke="#25331c" stroke-width="1.4" opacity="0.5" fill="none" stroke-linecap="round"/><path d="M326.9 345.0Q332.7 341.4 337.3 336.2M315.3 481.7Q308.6 474.1 322.1 462.4M303.5 422.1Q317.0 416.4 332.6 426.5" stroke="#3a4a2a" stroke-width="1.1" opacity="0.6" fill="none" stroke-linecap="round"/><path d="M270.9 292.4Q280.7 287.3 292.0 286.2" stroke="#2e3e22" stroke-width="1.8" opacity="0.7" fill="none" stroke-linecap="round"/><path d="M346.6 445.9Q342.7 436.1 361.6 430.9" stroke="#2e3e22" stroke-width="1.9" opacity="0.7" fill="none" stroke-linecap="round"/><path d="M336.9 486.9Q347.8 479.8 360.4 475.7" stroke="#3a4a2a" stroke-width="2.1" opacity="0.5" fill="none" stroke-linecap="round"/><path d="M310.3 368.6Q312.0 361.5 324.0 363.5M299.4 441.5Q297.3 431.7 315.8 430.0" stroke="#25331c" stroke-width="2.1" opacity="0.4" fill="none" stroke-linecap="round"/><path d="M321.8 356.6Q331.9 348.3 347.8 353.4M301.7 331.7Q309.3 327.8 315.0 342.5M277.2 403.7Q278.6 390.7 294.3 383.9" stroke="#2e3e22" stroke-width="1.5" opacity="0.6" fill="none" stroke-linecap="round"/><path d="M291.3 429.9Q290.2 418.0 296.9 406.6" stroke="#3a4a2a" stroke-width="1.9" opacity="0.7" fill="none" stroke-linecap="round"/><path d="M275.0 297.6Q286.2 285.1 301.3 276.8" stroke="#3a4a2a" stroke-width="1.8" opacity="0.5" fill="none" stroke-linecap="round"/><path d="M312.8 406.3Q315.6 397.8 330.3 403.2" stroke="#2e3e22" stroke-width="2.0" opacity="0.5" fill="none" stroke-linecap="round"/><path d="M307.3 412.6Q324.2 414.7 341.3 413.3M228.0 446.7Q230.1 438.6 242.7 438.6M268.5 401.2Q279.4 393.2 292.9 412.6" stroke="#3a4a2a" stroke-width="1.4" opacity="0.5" fill="none" stroke-linecap="round"/><path d="M249.3 366.0Q255.6 354.3 262.9 343.2M233.1 354.3Q234.7 342.6 244.7 333.6" stroke="#3a4a2a" stroke-width="2.0" opacity="0.4" fill="none" stroke-linecap="round"/><path d="M278.6 471.9Q283.8 457.8 288.3 443.5M251.8 353.2Q259.4 347.5 270.4 348.9" stroke="#25331c" stroke-width="1.8" opacity="0.5" fill="none" stroke-linecap="round"/><path d="M276.3 433.5Q276.6 420.2 281.7 407.5M282.2 302.1Q280.8 285.8 301.0 275.1" stroke="#2e3e22" stroke-width="2.2" opacity="0.6" fill="none" stroke-linecap="round"/><path d="M288.0 391.6Q290.7 377.0 313.6 376.8" stroke="#25331c" stroke-width="1.0" opacity="0.4" fill="none" stroke-linecap="round"/><path d="M234.0 323.5Q234.2 309.6 239.4 296.2" stroke="#2e3e22" stroke-width="1.3" opacity="0.5" fill="none" stroke-linecap="round"/><path d="M286.5 402.2Q285.2 394.9 298.7 393.8" stroke="#2e3e22" stroke-width="1.7" opacity="0.5" fill="none" stroke-linecap="round"/><path d="M232.1 383.5Q235.1 373.9 250.0 374.5" stroke="#2e3e22" stroke-width="2.2" opacity="0.5" fill="none" stroke-linecap="round"/><path d="M309.8 341.3Q313.1 334.6 323.2 334.9" stroke="#3a4a2a" stroke-width="1.7" opacity="0.4" fill="none" stroke-linecap="round"/><path d="M254.0 478.3Q260.7 480.1 264.6 487.1" stroke="#2e3e22" stroke-width="1.6" opacity="0.5" fill="none" stroke-linecap="round"/><path d="M350.4 454.8Q361.3 452.9 371.7 460.9M325.8 451.5Q336.4 440.6 356.1 454.7" stroke="#2e3e22" stroke-width="1.5" opacity="0.5" fill="none" stroke-linecap="round"/><path d="M348.9 382.8Q355.2 373.4 369.3 372.6" stroke="#25331c" stroke-width="1.8" opacity="0.6" fill="none" stroke-linecap="round"/><path d="M281.4 292.2Q279.7 277.9 301.3 271.2" stroke="#25331c" stroke-width="1.1" opacity="0.7" fill="none" stroke-linecap="round"/><path d="M294.6 475.5Q291.9 467.6 296.5 458.9M256.8 406.9Q257.7 399.9 264.5 395.1M304.0 354.7Q311.4 348.0 318.0 340.7" stroke="#3a4a2a" stroke-width="1.2" opacity="0.5" fill="none" stroke-linecap="round"/><path d="M345.1 407.9Q348.7 401.3 356.6 398.2M327.9 430.0Q328.1 421.4 343.3 422.0" stroke="#25331c" stroke-width="2.0" opacity="0.4" fill="none" stroke-linecap="round"/><path d="M272.1 400.6Q266.4 398.7 271.5 388.5M317.5 488.2Q318.8 477.6 324.7 468.1M350.1 465.6Q352.7 459.0 355.6 452.4" stroke="#2e3e22" stroke-width="1.6" opacity="0.4" fill="none" stroke-linecap="round"/><path d="M279.0 433.7Q280.7 418.1 302.9 413.3M348.8 421.5Q360.8 411.2 378.4 410.3" stroke="#2e3e22" stroke-width="1.4" opacity="0.7" fill="none" stroke-linecap="round"/><path d="M336.7 477.5Q345.2 475.3 354.1 474.6M326.6 461.2Q334.5 450.3 353.5 462.6" stroke="#25331c" stroke-width="1.2" opacity="0.6" fill="none" stroke-linecap="round"/><path d="M354.7 432.0Q361.9 417.5 376.6 408.0" stroke="#2e3e22" stroke-width="2.1" opacity="0.6" fill="none" stroke-linecap="round"/><path d="M256.3 382.7Q264.6 368.2 287.1 369.7M300.0 309.7Q300.4 297.8 312.3 289.3M321.3 346.0Q331.3 334.7 351.4 347.9" stroke="#2e3e22" stroke-width="2.1" opacity="0.5" fill="none" stroke-linecap="round"/><path d="M285.9 428.1Q289.8 422.9 298.9 429.2M323.5 383.4Q315.1 369.6 306.3 356.0M255.7 458.4Q251.9 451.4 251.5 443.1" stroke="#25331c" stroke-width="2.0" opacity="0.5" fill="none" stroke-linecap="round"/><path d="M239.9 304.6Q235.8 290.6 261.8 285.2" stroke="#2e3e22" stroke-width="1.3" opacity="0.7" fill="none" stroke-linecap="round"/><path d="M281.4 291.8Q279.2 283.8 288.6 276.8M313.2 368.3Q321.2 359.7 336.6 366.5" stroke="#3a4a2a" stroke-width="1.6" opacity="0.5" fill="none" stroke-linecap="round"/><path d="M274.0 453.3Q283.5 446.8 294.2 464.3" stroke="#25331c" stroke-width="1.2" opacity="0.5" fill="none" stroke-linecap="round"/><path d="M267.8 415.5Q270.9 404.8 288.2 406.5M327.5 435.5Q334.4 420.2 357.2 419.7" stroke="#25331c" stroke-width="1.7" opacity="0.5" fill="none" stroke-linecap="round"/><path d="M247.0 351.1Q247.7 343.2 252.8 336.4M360.9 417.0Q364.7 405.7 377.6 400.0M266.2 373.1Q272.3 371.9 275.2 381.7" stroke="#2e3e22" stroke-width="1.3" opacity="0.6" fill="none" stroke-linecap="round"/><path d="M250.7 461.8Q258.1 452.2 264.1 441.6M231.7 389.2Q230.8 378.0 251.4 378.2" stroke="#3a4a2a" stroke-width="1.1" opacity="0.4" fill="none" stroke-linecap="round"/><path d="M280.3 291.1Q284.1 286.0 292.5 287.2" stroke="#2e3e22" stroke-width="1.8" opacity="0.4" fill="none" stroke-linecap="round"/><path d="M305.8 363.1Q305.4 355.3 305.6 347.5" stroke="#25331c" stroke-width="1.4" opacity="0.7" fill="none" stroke-linecap="round"/><path d="M346.5 392.0Q354.1 391.2 361.6 389.3M241.3 467.4Q238.4 456.8 241.3 445.3M335.1 420.7Q344.8 424.3 355.4 424.3" stroke="#25331c" stroke-width="1.1" opacity="0.5" fill="none" stroke-linecap="round"/><path d="M302.6 507.3Q308.5 492.4 332.3 495.4M339.9 461.1Q340.0 445.5 346.8 430.7" stroke="#3a4a2a" stroke-width="1.6" opacity="0.7" fill="none" stroke-linecap="round"/><path d="M293.4 462.6Q288.0 456.0 296.1 445.7" stroke="#25331c" stroke-width="2.0" opacity="0.7" fill="none" stroke-linecap="round"/><path d="M284.5 424.7Q284.1 417.5 291.9 412.3M279.0 467.3Q269.6 455.3 259.9 443.5" stroke="#25331c" stroke-width="1.1" opacity="0.6" fill="none" stroke-linecap="round"/><path d="M258.3 418.1Q263.3 413.8 269.6 410.9" stroke="#3a4a2a" stroke-width="1.4" opacity="0.4" fill="none" stroke-linecap="round"/><path d="M353.6 438.7Q364.6 430.3 373.6 419.7" stroke="#25331c" stroke-width="1.9" opacity="0.5" fill="none" stroke-linecap="round"/><path d="M294.6 459.9Q307.6 460.7 320.4 463.6" stroke="#3a4a2a" stroke-width="1.1" opacity="0.5" fill="none" stroke-linecap="round"/><path d="M282.8 430.8Q278.7 414.6 294.8 399.7M272.3 508.3Q277.2 501.8 288.4 510.1" stroke="#2e3e22" stroke-width="1.8" opacity="0.6" fill="none" stroke-linecap="round"/><path d="M244.6 471.1Q258.8 471.7 259.8 495.1M341.2 438.2Q333.9 425.9 355.1 413.3M232.7 337.6Q240.2 326.5 259.3 340.9" stroke="#3a4a2a" stroke-width="1.7" opacity="0.5" fill="none" stroke-linecap="round"/><path d="M242.0 502.8Q252.5 491.8 265.5 483.6M253.6 386.6Q248.7 373.7 255.0 359.1" stroke="#25331c" stroke-width="1.7" opacity="0.6" fill="none" stroke-linecap="round"/><path d="M347.1 413.5Q341.7 398.2 368.1 388.7M242.8 499.5Q250.1 495.4 259.6 498.4" stroke="#25331c" stroke-width="1.5" opacity="0.6" fill="none" stroke-linecap="round"/><path d="M335.5 438.0Q345.2 441.9 355.5 444.3" stroke="#3a4a2a" stroke-width="1.8" opacity="0.6" fill="none" stroke-linecap="round"/><path d="M304.0 432.2Q291.4 425.9 293.9 405.8M341.6 350.2Q353.2 341.2 361.4 328.6" stroke="#3a4a2a" stroke-width="1.9" opacity="0.6" fill="none" stroke-linecap="round"/><path d="M330.0 340.5Q328.9 330.9 331.1 321.3" stroke="#2e3e22" stroke-width="1.4" opacity="0.6" fill="none" stroke-linecap="round"/><path d="M356.9 392.5Q356.1 386.5 367.0 385.8M323.8 386.2Q325.9 376.7 329.3 367.5M236.6 486.7Q251.2 485.4 258.0 506.8" stroke="#2e3e22" stroke-width="1.2" opacity="0.6" fill="none" stroke-linecap="round"/><path d="M280.1 452.7Q283.5 438.7 292.5 426.7" stroke="#3a4a2a" stroke-width="1.0" opacity="0.6" fill="none" stroke-linecap="round"/><path d="M270.1 463.1Q276.0 453.6 281.2 443.6" stroke="#3a4a2a" stroke-width="1.5" opacity="0.7" fill="none" stroke-linecap="round"/><path d="M313.9 459.8Q318.3 446.1 333.8 439.2" stroke="#3a4a2a" stroke-width="2.0" opacity="0.5" fill="none" stroke-linecap="round"/><path d="M236.6 371.9Q247.3 363.2 262.9 363.0" stroke="#2e3e22" stroke-width="2.0" opacity="0.4" fill="none" stroke-linecap="round"/><path d="M309.2 471.0Q323.3 465.4 336.9 483.3" stroke="#2e3e22" stroke-width="1.2" opacity="0.5" fill="none" stroke-linecap="round"/><path d="M272.5 479.4Q285.3 474.0 298.0 468.8" stroke="#3a4a2a" stroke-width="1.6" opacity="0.6" fill="none" stroke-linecap="round"/><path d="M272.7 298.0Q267.1 283.7 283.6 269.2M330.1 396.6Q344.1 394.5 349.8 417.0" stroke="#3a4a2a" stroke-width="1.5" opacity="0.5" fill="none" stroke-linecap="round"/><path d="M255.4 333.8Q270.4 326.3 285.4 348.7" stroke="#2e3e22" stroke-width="1.0" opacity="0.6" fill="none" stroke-linecap="round"/><path d="M272.9 358.1Q279.3 347.7 287.8 338.6" stroke="#25331c" stroke-width="1.3" opacity="0.7" fill="none" stroke-linecap="round"/><path d="M305.7 444.9Q315.1 433.3 328.3 425.4" stroke="#2e3e22" stroke-width="1.1" opacity="0.6" fill="none" stroke-linecap="round"/><path d="M326.0 415.8Q333.9 409.0 346.4 411.8M279.7 363.3Q277.2 355.6 277.7 347.2" stroke="#3a4a2a" stroke-width="1.5" opacity="0.6" fill="none" stroke-linecap="round"/><path d="M234.7 329.7Q248.4 332.1 252.9 350.8" stroke="#2e3e22" stroke-width="1.7" opacity="0.6" fill="none" stroke-linecap="round"/><path d="M272.6 355.3Q275.8 339.8 303.7 349.0" stroke="#25331c" stroke-width="1.6" opacity="0.5" fill="none" stroke-linecap="round"/><path d="M237.9 460.1Q245.0 445.7 269.8 456.6" stroke="#2e3e22" stroke-width="1.7" opacity="0.7" fill="none" stroke-linecap="round"/><path d="M292.9 428.2Q301.1 427.6 309.3 429.3" stroke="#2e3e22" stroke-width="1.5" opacity="0.4" fill="none" stroke-linecap="round"/><path d="M316.0 478.6Q312.4 462.1 334.8 450.6" stroke="#2e3e22" stroke-width="1.8" opacity="0.5" fill="none" stroke-linecap="round"/><path d="M245.6 489.3Q244.7 480.8 260.8 481.3" stroke="#25331c" stroke-width="1.0" opacity="0.6" fill="none" stroke-linecap="round"/><path d="M299.0 422.8Q301.7 406.5 314.7 393.7" stroke="#25331c" stroke-width="1.1" opacity="0.4" fill="none" stroke-linecap="round"/>
<path d="M239.0 448.7Q246.3 447.4 253.7 450.6M298.4 315.6Q281.0 315.2 285.2 283.4" stroke="#d0e2a8" stroke-width="1.0" opacity="0.5" fill="none" stroke-linecap="round"/><path d="M294.2 413.8Q291.1 403.6 289.5 393.0M262.6 444.4Q280.4 435.8 294.8 421.3" stroke="#bcd88c" stroke-width="0.8" opacity="0.4" fill="none" stroke-linecap="round"/><path d="M321.6 418.9Q318.5 407.6 330.4 397.2M248.9 455.7Q267.9 457.4 286.9 453.0" stroke="#a8cc78" stroke-width="1.5" opacity="0.7" fill="none" stroke-linecap="round"/><path d="M341.5 445.7Q343.5 439.6 352.8 439.5M286.1 369.2Q284.3 363.3 294.1 359.9" stroke="#98bc60" stroke-width="1.4" opacity="0.4" fill="none" stroke-linecap="round"/><path d="M311.4 349.6Q316.1 333.2 343.9 339.4M294.7 507.7Q308.3 498.7 326.2 516.0" stroke="#bcd88c" stroke-width="1.0" opacity="0.4" fill="none" stroke-linecap="round"/><path d="M287.1 505.7Q295.5 493.1 317.2 509.4" stroke="#d0e2a8" stroke-width="0.9" opacity="0.5" fill="none" stroke-linecap="round"/><path d="M257.8 484.2Q270.6 473.3 290.9 490.1" stroke="#d0e2a8" stroke-width="1.4" opacity="0.6" fill="none" stroke-linecap="round"/><path d="M240.5 470.4Q242.2 460.1 256.0 456.5M310.8 487.7Q317.4 481.8 326.4 479.2" stroke="#d0e2a8" stroke-width="0.8" opacity="0.4" fill="none" stroke-linecap="round"/><path d="M289.2 331.0Q297.9 327.3 303.9 342.9M326.0 354.4Q331.8 351.0 338.7 358.9M283.5 357.3Q302.6 352.8 321.5 367.2M280.3 454.5Q290.0 456.2 299.9 457.0" stroke="#bcd88c" stroke-width="1.3" opacity="0.5" fill="none" stroke-linecap="round"/><path d="M330.2 484.0Q342.8 474.2 361.1 475.8M290.2 356.6Q297.4 338.4 329.4 355.6" stroke="#bcd88c" stroke-width="1.6" opacity="0.5" fill="none" stroke-linecap="round"/><path d="M286.4 438.9Q291.5 423.2 301.1 409.3" stroke="#d0e2a8" stroke-width="1.6" opacity="0.4" fill="none" stroke-linecap="round"/><path d="M345.5 428.5Q337.3 416.4 349.1 399.4M241.7 319.6Q248.6 325.6 257.5 328.7M299.3 455.0Q301.5 436.4 332.0 437.0" stroke="#a8cc78" stroke-width="1.3" opacity="0.6" fill="none" stroke-linecap="round"/><path d="M321.9 352.0Q326.6 347.9 333.3 347.1M287.3 337.3Q292.7 325.3 307.9 321.0M322.2 445.5Q336.8 438.1 348.7 426.4M268.1 296.3Q275.4 298.4 279.9 305.8" stroke="#a8cc78" stroke-width="1.2" opacity="0.7" fill="none" stroke-linecap="round"/><path d="M315.5 398.8Q321.5 381.6 351.7 393.6" stroke="#98bc60" stroke-width="0.9" opacity="0.4" fill="none" stroke-linecap="round"/><path d="M267.8 375.8Q276.3 362.0 282.9 347.2M328.3 424.7Q326.6 407.6 318.7 391.7M315.2 389.6Q316.2 376.0 324.7 364.1M289.9 359.9Q290.5 344.1 315.9 341.9M275.3 458.6Q289.2 447.7 310.7 457.2" stroke="#98bc60" stroke-width="1.0" opacity="0.7" fill="none" stroke-linecap="round"/><path d="M230.2 471.1Q226.8 462.6 240.8 456.2M341.3 428.8Q342.5 409.3 346.6 390.1M297.3 360.3Q308.1 357.5 319.6 360.1" stroke="#d0e2a8" stroke-width="1.3" opacity="0.5" fill="none" stroke-linecap="round"/><path d="M317.0 416.2Q321.5 409.6 325.1 402.4M250.2 341.8Q251.0 329.4 269.1 325.5" stroke="#bcd88c" stroke-width="1.0" opacity="0.7" fill="none" stroke-linecap="round"/><path d="M304.6 333.7Q308.0 327.7 309.2 320.7M248.8 460.7Q253.2 443.8 261.8 428.2M338.5 382.1Q338.1 366.7 366.1 368.4" stroke="#a8cc78" stroke-width="1.5" opacity="0.5" fill="none" stroke-linecap="round"/><path d="M300.8 323.0Q301.2 311.8 302.2 300.7M258.0 361.0Q274.9 363.2 290.7 370.5" stroke="#bcd88c" stroke-width="1.5" opacity="0.8" fill="none" stroke-linecap="round"/><path d="M278.1 366.8Q285.9 356.7 292.8 345.9M360.7 422.7Q360.6 404.8 385.0 396.4M336.4 375.0Q326.7 360.6 326.8 341.6" stroke="#98bc60" stroke-width="0.8" opacity="0.4" fill="none" stroke-linecap="round"/><path d="M292.2 322.5Q301.1 320.1 310.4 325.4" stroke="#bcd88c" stroke-width="0.9" opacity="0.5" fill="none" stroke-linecap="round"/><path d="M241.2 497.2Q251.7 489.0 264.3 483.9M283.0 443.9Q276.7 437.0 287.4 425.8M288.7 410.5Q293.6 395.4 298.3 380.1" stroke="#a8cc78" stroke-width="1.2" opacity="0.5" fill="none" stroke-linecap="round"/><path d="M240.0 391.4Q228.1 379.3 215.8 367.5" stroke="#98bc60" stroke-width="1.3" opacity="0.4" fill="none" stroke-linecap="round"/><path d="M264.7 462.1Q269.3 456.8 278.6 461.0M268.9 300.0Q279.4 289.0 299.1 296.0" stroke="#98bc60" stroke-width="1.1" opacity="0.5" fill="none" stroke-linecap="round"/><path d="M227.5 431.2Q230.2 418.9 249.4 418.8M319.3 454.7Q319.5 437.9 338.4 427.2" stroke="#a8cc78" stroke-width="1.4" opacity="0.7" fill="none" stroke-linecap="round"/><path d="M245.2 365.7Q248.1 354.7 267.2 359.5M289.7 412.2Q307.5 403.2 326.4 396.3" stroke="#d0e2a8" stroke-width="1.4" opacity="0.7" fill="none" stroke-linecap="round"/><path d="M276.7 487.9Q283.0 475.0 305.4 486.3M300.0 348.3Q304.9 333.8 316.9 322.9" stroke="#bcd88c" stroke-width="1.1" opacity="0.7" fill="none" stroke-linecap="round"/><path d="M265.4 504.4Q281.2 496.5 299.8 496.0" stroke="#d0e2a8" stroke-width="1.2" opacity="0.8" fill="none" stroke-linecap="round"/><path d="M281.5 437.2Q289.2 442.3 290.6 453.3M269.6 468.8Q270.3 459.5 277.2 451.7" stroke="#98bc60" stroke-width="1.3" opacity="0.5" fill="none" stroke-linecap="round"/><path d="M290.9 353.3Q303.4 341.8 319.6 335.1" stroke="#d0e2a8" stroke-width="0.7" opacity="0.5" fill="none" stroke-linecap="round"/><path d="M283.4 489.7Q290.3 481.7 304.4 489.6M256.7 435.1Q264.1 424.4 282.5 438.5M302.0 449.4Q319.4 454.8 337.8 455.6" stroke="#a8cc78" stroke-width="0.9" opacity="0.5" fill="none" stroke-linecap="round"/><path d="M306.8 385.7Q309.8 374.4 329.4 379.5" stroke="#a8cc78" stroke-width="1.5" opacity="0.8" fill="none" stroke-linecap="round"/><path d="M263.1 496.8Q274.2 481.7 283.7 465.3" stroke="#bcd88c" stroke-width="1.5" opacity="0.4" fill="none" stroke-linecap="round"/><path d="M245.1 299.6Q253.1 291.7 264.2 287.7M357.8 399.0Q365.3 396.2 372.9 404.2" stroke="#bcd88c" stroke-width="1.1" opacity="0.6" fill="none" stroke-linecap="round"/><path d="M299.2 437.3Q299.6 423.5 311.0 412.3M229.8 295.4Q228.5 284.0 234.6 273.1" stroke="#d0e2a8" stroke-width="1.2" opacity="0.5" fill="none" stroke-linecap="round"/><path d="M321.5 341.0Q330.2 337.8 340.1 340.3" stroke="#d0e2a8" stroke-width="1.3" opacity="0.4" fill="none" stroke-linecap="round"/><path d="M282.5 501.3Q296.4 492.8 314.1 493.4M242.3 484.3Q248.4 474.9 263.5 477.0M311.1 460.0Q306.7 446.8 305.2 432.7" stroke="#98bc60" stroke-width="1.4" opacity="0.5" fill="none" stroke-linecap="round"/><path d="M256.7 331.8Q262.0 323.6 264.8 314.1M271.4 396.9Q286.8 384.5 309.8 406.7M309.4 348.5Q305.6 332.7 301.3 317.0" stroke="#a8cc78" stroke-width="1.5" opacity="0.6" fill="none" stroke-linecap="round"/><path d="M321.7 436.6Q333.5 424.5 352.3 422.1M263.1 488.2Q277.4 478.8 295.5 499.0" stroke="#bcd88c" stroke-width="1.6" opacity="0.7" fill="none" stroke-linecap="round"/><path d="M234.9 386.3Q228.6 372.3 248.2 358.6M285.6 449.9Q294.6 446.5 304.8 449.1" stroke="#bcd88c" stroke-width="0.9" opacity="0.4" fill="none" stroke-linecap="round"/><path d="M299.8 447.7Q303.8 443.2 308.3 439.0" stroke="#a8cc78" stroke-width="0.7" opacity="0.5" fill="none" stroke-linecap="round"/><path d="M253.4 389.7Q261.3 383.5 273.2 393.4" stroke="#d0e2a8" stroke-width="1.0" opacity="0.8" fill="none" stroke-linecap="round"/><path d="M262.4 343.3Q268.6 340.3 274.0 335.8M334.3 391.2Q322.9 380.7 343.6 361.7M251.0 421.3Q257.0 407.1 281.8 421.0M258.0 388.2Q251.9 371.8 282.9 363.5M332.8 454.3Q335.0 443.7 335.2 432.9M324.3 486.3Q336.2 483.8 348.1 490.7M357.8 366.9Q360.1 359.6 370.8 359.0" stroke="#d0e2a8" stroke-width="0.8" opacity="0.7" fill="none" stroke-linecap="round"/><path d="M266.7 286.8Q277.1 286.4 287.3 284.0M238.6 487.9Q240.4 482.1 243.4 476.8" stroke="#98bc60" stroke-width="0.8" opacity="0.6" fill="none" stroke-linecap="round"/><path d="M252.4 443.7Q261.0 440.4 269.2 436.0M290.3 423.6Q294.7 407.7 320.4 410.0" stroke="#98bc60" stroke-width="1.2" opacity="0.5" fill="none" stroke-linecap="round"/><path d="M252.6 415.2Q248.0 409.3 252.9 400.2" stroke="#a8cc78" stroke-width="1.4" opacity="0.6" fill="none" stroke-linecap="round"/><path d="M298.0 358.3Q303.3 354.8 310.6 357.3M299.4 345.6Q309.7 332.2 330.7 332.6M250.1 325.3Q265.9 318.0 284.7 327.8" stroke="#a8cc78" stroke-width="1.3" opacity="0.7" fill="none" stroke-linecap="round"/><path d="M233.7 421.3Q232.9 414.1 230.2 407.2M270.9 375.8Q269.0 369.8 276.3 364.4M289.5 336.9Q273.0 327.9 253.8 325.2" stroke="#a8cc78" stroke-width="0.8" opacity="0.8" fill="none" stroke-linecap="round"/><path d="M347.1 387.8Q354.8 377.2 371.1 377.3M286.8 345.4Q295.0 334.9 299.4 321.9M266.1 404.3Q269.5 397.5 275.3 392.3M231.3 457.2Q227.7 448.9 239.7 441.2" stroke="#d0e2a8" stroke-width="1.3" opacity="0.6" fill="none" stroke-linecap="round"/><path d="M318.3 333.4Q318.8 317.4 343.5 313.8M320.7 425.2Q328.8 412.0 345.1 406.1M264.3 395.8Q271.1 388.5 283.8 391.8" stroke="#d0e2a8" stroke-width="1.2" opacity="0.7" fill="none" stroke-linecap="round"/><path d="M349.0 387.0Q354.5 374.4 358.1 361.1M288.4 394.3Q298.3 389.7 309.8 390.0" stroke="#98bc60" stroke-width="1.1" opacity="0.8" fill="none" stroke-linecap="round"/><path d="M345.7 399.5Q361.0 391.6 373.4 378.9M308.1 340.9Q314.4 341.6 319.4 346.5" stroke="#98bc60" stroke-width="1.4" opacity="0.7" fill="none" stroke-linecap="round"/><path d="M271.1 475.6Q279.4 468.2 291.6 466.9M321.9 372.9Q329.6 367.9 338.2 364.6" stroke="#d0e2a8" stroke-width="1.1" opacity="0.5" fill="none" stroke-linecap="round"/><path d="M233.2 484.9Q239.9 477.1 252.5 477.8M232.2 445.4Q240.8 439.3 247.7 431.1" stroke="#d0e2a8" stroke-width="1.0" opacity="0.7" fill="none" stroke-linecap="round"/><path d="M244.4 405.4Q250.9 396.8 265.8 405.9M279.8 421.4Q281.5 413.1 283.3 404.9" stroke="#d0e2a8" stroke-width="1.5" opacity="0.5" fill="none" stroke-linecap="round"/><path d="M270.1 458.8Q288.3 458.1 301.7 477.0M309.6 381.8Q325.1 371.9 344.0 394.8M302.2 419.5Q309.4 404.3 322.6 392.6" stroke="#bcd88c" stroke-width="1.4" opacity="0.7" fill="none" stroke-linecap="round"/><path d="M290.9 387.8Q277.1 378.8 290.3 354.9M241.7 348.9Q239.9 337.6 258.5 333.4" stroke="#d0e2a8" stroke-width="1.0" opacity="0.4" fill="none" stroke-linecap="round"/><path d="M289.8 374.2Q292.0 357.1 322.7 363.9" stroke="#d0e2a8" stroke-width="1.3" opacity="0.8" fill="none" stroke-linecap="round"/><path d="M305.6 355.3Q304.4 339.0 312.7 323.4M283.4 487.9Q291.0 475.8 311.8 486.4" stroke="#bcd88c" stroke-width="1.2" opacity="0.8" fill="none" stroke-linecap="round"/><path d="M254.8 406.2Q273.7 404.3 285.6 428.4" stroke="#bcd88c" stroke-width="1.3" opacity="0.6" fill="none" stroke-linecap="round"/><path d="M275.2 333.5Q281.2 318.2 306.9 324.6" stroke="#a8cc78" stroke-width="1.0" opacity="0.8" fill="none" stroke-linecap="round"/><path d="M303.4 463.5Q305.2 455.1 319.8 458.6M247.6 429.7Q250.4 417.0 272.7 422.8" stroke="#bcd88c" stroke-width="1.5" opacity="0.5" fill="none" stroke-linecap="round"/><path d="M261.8 345.7Q263.9 334.0 277.0 327.4" stroke="#98bc60" stroke-width="0.7" opacity="0.7" fill="none" stroke-linecap="round"/><path d="M306.8 446.6Q311.2 430.7 335.7 430.7M255.9 406.3Q261.6 396.0 278.6 400.5" stroke="#a8cc78" stroke-width="0.9" opacity="0.7" fill="none" stroke-linecap="round"/><path d="M356.3 383.5Q366.4 369.6 389.9 376.8M303.1 495.1Q287.1 489.6 294.2 462.3M241.7 355.9Q253.9 345.5 267.9 337.3M266.9 369.7Q260.3 355.0 270.3 337.7" stroke="#a8cc78" stroke-width="1.0" opacity="0.5" fill="none" stroke-linecap="round"/><path d="M275.2 382.0Q280.4 370.9 285.6 359.8" stroke="#d0e2a8" stroke-width="0.8" opacity="0.5" fill="none" stroke-linecap="round"/><path d="M283.6 473.7Q300.0 469.9 314.5 486.9" stroke="#98bc60" stroke-width="1.6" opacity="0.6" fill="none" stroke-linecap="round"/><path d="M253.3 417.4Q257.5 411.8 267.2 415.3" stroke="#bcd88c" stroke-width="1.1" opacity="0.5" fill="none" stroke-linecap="round"/><path d="M284.7 362.9Q297.2 353.5 314.7 353.9M313.4 432.9Q313.1 426.2 323.5 424.2M330.6 429.4Q334.7 422.2 347.2 429.8M232.6 401.2Q240.3 392.5 250.0 385.7M251.4 406.9Q259.1 410.3 267.4 412.5" stroke="#a8cc78" stroke-width="1.1" opacity="0.7" fill="none" stroke-linecap="round"/><path d="M272.9 497.5Q274.3 489.0 275.1 480.5" stroke="#bcd88c" stroke-width="1.3" opacity="0.7" fill="none" stroke-linecap="round"/><path d="M271.9 370.9Q269.3 361.6 272.7 351.6" stroke="#98bc60" stroke-width="0.8" opacity="0.7" fill="none" stroke-linecap="round"/><path d="M294.3 496.2Q295.4 485.0 294.3 473.7" stroke="#a8cc78" stroke-width="0.8" opacity="0.7" fill="none" stroke-linecap="round"/><path d="M246.3 334.8Q258.7 324.2 278.6 338.1" stroke="#bcd88c" stroke-width="1.6" opacity="0.6" fill="none" stroke-linecap="round"/><path d="M353.7 381.5Q358.2 374.1 370.8 378.4M255.1 310.6Q245.4 293.8 263.6 272.8" stroke="#98bc60" stroke-width="1.1" opacity="0.7" fill="none" stroke-linecap="round"/><path d="M243.4 351.5Q248.9 347.9 255.9 347.4" stroke="#a8cc78" stroke-width="0.8" opacity="0.5" fill="none" stroke-linecap="round"/><path d="M335.5 425.1Q346.7 414.8 364.3 415.5M300.9 406.5Q294.2 398.9 305.7 386.9" stroke="#bcd88c" stroke-width="1.4" opacity="0.6" fill="none" stroke-linecap="round"/><path d="M278.5 433.4Q276.0 419.5 302.1 417.9M275.8 290.3Q288.7 282.0 301.5 307.1" stroke="#a8cc78" stroke-width="1.0" opacity="0.6" fill="none" stroke-linecap="round"/><path d="M269.9 455.0Q271.7 446.9 285.3 449.2" stroke="#98bc60" stroke-width="1.6" opacity="0.7" fill="none" stroke-linecap="round"/><path d="M362.4 394.7Q379.7 398.0 397.6 396.7" stroke="#98bc60" stroke-width="1.4" opacity="0.6" fill="none" stroke-linecap="round"/><path d="M351.2 416.1Q345.0 412.5 349.0 401.9M294.7 504.1Q303.3 498.0 314.7 497.2" stroke="#bcd88c" stroke-width="1.0" opacity="0.8" fill="none" stroke-linecap="round"/><path d="M239.5 395.1Q248.1 382.7 261.2 374.0" stroke="#d0e2a8" stroke-width="0.9" opacity="0.6" fill="none" stroke-linecap="round"/><path d="M295.1 402.6Q294.2 385.9 317.1 377.4M227.8 425.3Q227.0 412.8 225.7 400.3" stroke="#d0e2a8" stroke-width="1.1" opacity="0.7" fill="none" stroke-linecap="round"/><path d="M281.4 498.7Q288.6 483.8 296.0 469.1" stroke="#d0e2a8" stroke-width="0.7" opacity="0.8" fill="none" stroke-linecap="round"/><path d="M300.7 451.1Q304.4 444.2 315.2 445.2" stroke="#98bc60" stroke-width="1.5" opacity="0.5" fill="none" stroke-linecap="round"/><path d="M295.9 384.0Q304.6 369.3 330.0 384.1M316.8 375.2Q311.6 362.9 306.8 350.4" stroke="#a8cc78" stroke-width="1.1" opacity="0.6" fill="none" stroke-linecap="round"/><path d="M325.2 448.5Q328.1 438.1 346.4 444.5" stroke="#a8cc78" stroke-width="1.6" opacity="0.7" fill="none" stroke-linecap="round"/><path d="M260.5 490.2Q258.8 481.2 274.6 478.6" stroke="#d0e2a8" stroke-width="1.6" opacity="0.7" fill="none" stroke-linecap="round"/><path d="M313.1 404.0Q317.7 398.3 327.5 406.8" stroke="#d0e2a8" stroke-width="1.3" opacity="0.7" fill="none" stroke-linecap="round"/><path d="M302.5 375.0Q310.7 365.5 326.0 366.0M264.5 491.9Q284.2 494.2 298.7 512.0" stroke="#d0e2a8" stroke-width="1.2" opacity="0.4" fill="none" stroke-linecap="round"/><path d="M306.4 502.5Q308.8 492.4 308.0 481.7" stroke="#a8cc78" stroke-width="1.1" opacity="0.8" fill="none" stroke-linecap="round"/><path d="M288.8 366.9Q300.7 354.9 320.9 377.6" stroke="#d0e2a8" stroke-width="1.1" opacity="0.8" fill="none" stroke-linecap="round"/><path d="M253.3 500.5Q257.8 493.1 263.2 486.3" stroke="#d0e2a8" stroke-width="1.6" opacity="0.5" fill="none" stroke-linecap="round"/><path d="M227.4 408.6Q228.9 399.8 238.6 394.8" stroke="#bcd88c" stroke-width="1.4" opacity="0.5" fill="none" stroke-linecap="round"/><path d="M241.2 348.1Q251.1 337.9 269.4 346.2" stroke="#d0e2a8" stroke-width="0.7" opacity="0.6" fill="none" stroke-linecap="round"/><path d="M235.3 471.5Q240.2 452.4 243.4 432.9" stroke="#d0e2a8" stroke-width="1.2" opacity="0.6" fill="none" stroke-linecap="round"/><path d="M245.5 318.9Q251.5 313.5 261.6 317.1M301.1 380.8Q312.4 370.6 326.7 364.4M243.4 476.6Q243.5 468.3 241.6 460.1M323.3 422.9Q320.6 408.2 341.4 399.2" stroke="#bcd88c" stroke-width="0.8" opacity="0.6" fill="none" stroke-linecap="round"/><path d="M305.3 410.2Q306.1 404.1 305.5 397.8" stroke="#98bc60" stroke-width="0.8" opacity="0.8" fill="none" stroke-linecap="round"/><path d="M287.7 438.7Q305.0 430.8 321.5 421.2" stroke="#98bc60" stroke-width="1.5" opacity="0.6" fill="none" stroke-linecap="round"/><path d="M285.4 318.4Q290.8 313.9 299.3 316.6" stroke="#d0e2a8" stroke-width="1.5" opacity="0.4" fill="none" stroke-linecap="round"/><path d="M295.3 393.9Q303.2 383.7 321.2 394.4" stroke="#d0e2a8" stroke-width="0.8" opacity="0.6" fill="none" stroke-linecap="round"/><path d="M235.3 382.3Q250.1 385.7 265.7 384.1" stroke="#a8cc78" stroke-width="1.2" opacity="0.8" fill="none" stroke-linecap="round"/><path d="M276.6 444.7Q275.5 434.9 293.9 435.0" stroke="#98bc60" stroke-width="0.9" opacity="0.5" fill="none" stroke-linecap="round"/><path d="M231.8 363.3Q250.1 364.3 243.3 397.9" stroke="#d0e2a8" stroke-width="1.5" opacity="0.7" fill="none" stroke-linecap="round"/><path d="M275.0 409.9Q292.1 399.8 314.3 415.3" stroke="#a8cc78" stroke-width="1.2" opacity="0.6" fill="none" stroke-linecap="round"/><path d="M288.4 364.3Q290.9 347.9 315.9 345.8" stroke="#a8cc78" stroke-width="1.4" opacity="0.8" fill="none" stroke-linecap="round"/><path d="M325.3 450.3Q330.3 443.3 334.5 435.8" stroke="#a8cc78" stroke-width="0.9" opacity="0.6" fill="none" stroke-linecap="round"/><path d="M324.4 363.0Q320.1 357.6 325.4 349.3M348.9 382.9Q358.2 373.2 375.2 388.4M245.8 441.7Q241.1 430.3 238.2 418.2M292.9 424.7Q303.4 412.8 321.0 409.8" stroke="#a8cc78" stroke-width="1.0" opacity="0.7" fill="none" stroke-linecap="round"/><path d="M348.9 380.0Q359.4 376.0 369.7 371.3" stroke="#d0e2a8" stroke-width="1.1" opacity="0.6" fill="none" stroke-linecap="round"/><path d="M258.2 416.0Q268.1 406.1 282.4 401.7" stroke="#bcd88c" stroke-width="1.2" opacity="0.6" fill="none" stroke-linecap="round"/><path d="M259.2 477.4Q268.1 474.4 277.2 482.8M280.2 353.9Q282.2 347.2 294.0 351.8" stroke="#98bc60" stroke-width="1.3" opacity="0.6" fill="none" stroke-linecap="round"/><path d="M301.9 352.0Q300.0 339.6 293.7 328.3" stroke="#98bc60" stroke-width="1.1" opacity="0.6" fill="none" stroke-linecap="round"/><path d="M250.2 419.0Q255.3 407.5 275.3 418.6" stroke="#a8cc78" stroke-width="1.4" opacity="0.4" fill="none" stroke-linecap="round"/><path d="M261.9 453.9Q254.7 452.5 250.2 445.2" stroke="#a8cc78" stroke-width="1.3" opacity="0.4" fill="none" stroke-linecap="round"/><path d="M288.9 491.6Q299.6 489.7 310.4 494.6" stroke="#a8cc78" stroke-width="0.8" opacity="0.6" fill="none" stroke-linecap="round"/><path d="M282.0 335.8Q293.8 323.5 313.9 323.7" stroke="#d0e2a8" stroke-width="1.4" opacity="0.4" fill="none" stroke-linecap="round"/><path d="M278.0 484.4Q279.4 478.0 287.2 475.1" stroke="#a8cc78" stroke-width="1.2" opacity="0.4" fill="none" stroke-linecap="round"/><path d="M307.7 439.4Q317.3 430.4 327.0 421.5M359.2 459.5Q368.3 441.8 391.1 435.7" stroke="#bcd88c" stroke-width="0.9" opacity="0.7" fill="none" stroke-linecap="round"/><path d="M277.4 489.5Q274.4 484.0 281.2 477.4M289.7 413.5Q299.0 414.9 303.7 426.1" stroke="#bcd88c" stroke-width="0.8" opacity="0.5" fill="none" stroke-linecap="round"/><path d="M234.1 348.0Q228.9 339.1 245.8 331.0M293.2 383.8Q303.8 387.8 313.7 393.4" stroke="#98bc60" stroke-width="1.3" opacity="0.7" fill="none" stroke-linecap="round"/><path d="M325.7 363.2Q330.9 354.8 344.4 356.9" stroke="#98bc60" stroke-width="1.0" opacity="0.6" fill="none" stroke-linecap="round"/><path d="M342.2 354.7Q342.2 337.4 371.7 336.6" stroke="#d0e2a8" stroke-width="0.9" opacity="0.7" fill="none" stroke-linecap="round"/><path d="M249.8 486.6Q253.3 475.0 261.1 465.2" stroke="#bcd88c" stroke-width="0.9" opacity="0.6" fill="none" stroke-linecap="round"/><path d="M252.2 390.8Q265.6 389.2 278.1 398.6" stroke="#98bc60" stroke-width="1.5" opacity="0.4" fill="none" stroke-linecap="round"/><path d="M273.9 306.7Q271.2 289.6 303.4 288.6" stroke="#a8cc78" stroke-width="1.3" opacity="0.5" fill="none" stroke-linecap="round"/><path d="M259.5 482.4Q270.0 477.1 281.3 491.5M318.5 348.1Q324.6 335.9 345.4 343.3M295.5 427.9Q303.1 412.2 325.3 409.8M310.4 329.3Q325.6 342.3 316.6 368.8" stroke="#bcd88c" stroke-width="0.8" opacity="0.7" fill="none" stroke-linecap="round"/><path d="M303.4 377.5Q309.6 375.5 316.3 379.0" stroke="#d0e2a8" stroke-width="1.5" opacity="0.6" fill="none" stroke-linecap="round"/><path d="M283.5 340.2Q286.3 334.1 296.3 336.3" stroke="#bcd88c" stroke-width="1.2" opacity="0.7" fill="none" stroke-linecap="round"/><path d="M282.9 485.6Q281.3 467.2 315.9 468.8" stroke="#98bc60" stroke-width="0.9" opacity="0.7" fill="none" stroke-linecap="round"/><path d="M251.5 428.7Q255.4 415.9 268.5 408.0" stroke="#a8cc78" stroke-width="1.6" opacity="0.6" fill="none" stroke-linecap="round"/><path d="M318.0 410.5Q331.8 404.2 348.4 408.5" stroke="#98bc60" stroke-width="0.9" opacity="0.8" fill="none" stroke-linecap="round"/><path d="M341.0 482.6Q347.5 471.7 358.7 464.5" stroke="#d0e2a8" stroke-width="1.6" opacity="0.8" fill="none" stroke-linecap="round"/>
</g>
<g filter="url(#b5)"><polygon points="226,296 246,292 262,340 290,420 326,510 236,510 229,474 219,432 231,392 232,330" fill="#34331f" opacity="0.72" /><ellipse cx="239" cy="398" rx="9" ry="10" fill="#6a9a3c" opacity="0.8" transform="rotate(0 239 398)"/></g>
<g filter="url(#b05)">
<path d="M259.2 417.7Q254.4 409.0 248.3 400.9M267.9 365.3Q269.3 354.1 282.4 348.0M294.2 478.4Q296.3 468.7 300.7 459.5M293.5 475.9Q292.1 470.8 293.5 465.2M258.9 337.5Q259.2 331.0 257.1 324.5" stroke="#6f7a50" stroke-width="0.7" opacity="0.6" fill="none" stroke-linecap="round"/><path d="M277.4 507.6Q285.9 499.2 294.0 490.4M246.2 373.5Q253.3 372.5 260.3 371.9M235.7 480.1Q228.6 473.1 228.2 461.7" stroke="#9a9474" stroke-width="0.9" opacity="0.5" fill="none" stroke-linecap="round"/><path d="M308.7 492.3Q303.4 482.3 311.1 469.8" stroke="#aaa588" stroke-width="0.6" opacity="0.5" fill="none" stroke-linecap="round"/><path d="M261.1 451.8Q266.8 448.8 274.0 450.7M268.5 399.9Q266.2 392.0 280.2 388.4" stroke="#6f7a50" stroke-width="0.8" opacity="0.5" fill="none" stroke-linecap="round"/><path d="M304.2 491.8Q306.4 481.9 309.5 472.1" stroke="#9a9474" stroke-width="0.7" opacity="0.6" fill="none" stroke-linecap="round"/><path d="M244.7 394.9Q233.9 387.7 231.0 372.9M237.9 430.6Q243.4 420.5 245.5 408.9" stroke="#9a9474" stroke-width="0.9" opacity="0.4" fill="none" stroke-linecap="round"/><path d="M236.5 385.7Q239.0 389.0 237.9 393.9M279.2 509.9Q283.6 500.3 285.2 489.6M258.5 434.9Q263.1 428.4 274.5 435.0" stroke="#6f7a50" stroke-width="0.8" opacity="0.4" fill="none" stroke-linecap="round"/><path d="M232.9 376.3Q231.3 368.7 228.0 361.6M249.9 340.7Q258.3 341.9 266.9 340.1M229.8 447.0Q234.4 451.0 236.0 457.4" stroke="#9a9474" stroke-width="0.7" opacity="0.5" fill="none" stroke-linecap="round"/><path d="M238.9 295.6Q246.4 293.4 251.0 305.5M251.7 466.4Q253.8 459.6 265.2 461.8M278.1 482.8Q278.0 477.4 286.9 476.8M258.0 354.7Q247.0 349.2 234.6 347.2" stroke="#6f7a50" stroke-width="1.0" opacity="0.6" fill="none" stroke-linecap="round"/><path d="M262.1 423.9Q269.5 423.2 275.7 429.6M240.8 298.6Q232.9 297.6 236.6 283.1M269.8 438.4Q265.4 438.1 266.4 430.3M266.6 476.2Q265.4 466.1 281.1 461.9M296.8 452.2Q290.4 442.2 290.3 429.3" stroke="#6f7a50" stroke-width="0.9" opacity="0.5" fill="none" stroke-linecap="round"/><path d="M229.4 449.1Q234.1 442.4 245.8 447.7M232.8 296.3Q225.9 292.0 226.8 281.2" stroke="#aaa588" stroke-width="0.6" opacity="0.6" fill="none" stroke-linecap="round"/><path d="M266.8 455.8Q260.9 449.2 273.3 439.3" stroke="#6f7a50" stroke-width="1.0" opacity="0.5" fill="none" stroke-linecap="round"/><path d="M258.9 369.5Q256.0 364.2 262.3 358.0M285.7 507.9Q291.6 502.0 300.7 500.7M254.9 506.1Q253.2 498.0 267.1 495.0M308.1 467.9Q306.5 461.7 302.9 456.1" stroke="#aaa588" stroke-width="0.8" opacity="0.4" fill="none" stroke-linecap="round"/><path d="M239.9 382.7Q244.1 386.1 244.7 392.4M261.6 486.9Q266.0 479.4 278.9 484.9" stroke="#aaa588" stroke-width="1.0" opacity="0.4" fill="none" stroke-linecap="round"/><path d="M263.4 394.9Q251.9 390.2 240.7 384.8M238.1 357.9Q249.3 363.0 244.7 381.5M243.0 300.3Q239.8 294.8 241.7 287.7" stroke="#9a9474" stroke-width="0.8" opacity="0.5" fill="none" stroke-linecap="round"/><path d="M244.5 351.9Q242.7 347.1 249.9 343.3M250.9 351.8Q250.5 346.6 252.8 341.5M256.0 380.8Q255.0 373.1 261.8 366.5" stroke="#8a8464" stroke-width="0.8" opacity="0.6" fill="none" stroke-linecap="round"/><path d="M242.7 484.4Q238.4 481.1 235.9 476.0M273.5 470.1Q278.5 469.5 283.6 469.8M247.0 357.5Q244.2 346.1 237.5 336.0" stroke="#9a9474" stroke-width="0.6" opacity="0.6" fill="none" stroke-linecap="round"/><path d="M251.5 443.3Q259.1 443.1 266.6 443.0" stroke="#6f7a50" stroke-width="0.7" opacity="0.4" fill="none" stroke-linecap="round"/><path d="M259.4 441.3Q257.7 430.4 273.8 424.6" stroke="#aaa588" stroke-width="0.7" opacity="0.6" fill="none" stroke-linecap="round"/><path d="M254.6 494.7Q252.7 491.1 259.1 488.0" stroke="#6f7a50" stroke-width="0.6" opacity="0.4" fill="none" stroke-linecap="round"/><path d="M259.4 462.0Q257.0 453.6 267.9 446.6M237.7 309.2Q241.6 306.2 246.9 312.4" stroke="#8a8464" stroke-width="1.0" opacity="0.4" fill="none" stroke-linecap="round"/><path d="M242.2 382.1Q234.5 380.0 227.1 376.8M294.2 454.8Q292.9 447.1 297.6 439.5M264.0 460.6Q265.1 455.3 267.9 450.5M229.2 411.6Q238.0 403.7 245.3 394.3M250.0 337.9Q242.1 333.6 245.5 320.5M300.9 477.6Q296.4 477.2 296.0 469.9" stroke="#6f7a50" stroke-width="0.7" opacity="0.5" fill="none" stroke-linecap="round"/><path d="M238.4 309.9Q246.0 308.0 253.6 313.8" stroke="#6f7a50" stroke-width="0.6" opacity="0.5" fill="none" stroke-linecap="round"/><path d="M294.6 481.9Q297.3 478.7 302.5 484.6M287.0 424.5Q289.9 419.0 294.0 414.4M252.6 437.9Q256.6 434.7 262.6 435.3" stroke="#8a8464" stroke-width="0.9" opacity="0.6" fill="none" stroke-linecap="round"/><path d="M238.8 427.6Q234.0 415.6 235.0 402.0" stroke="#8a8464" stroke-width="0.8" opacity="0.5" fill="none" stroke-linecap="round"/><path d="M233.4 319.1Q226.9 309.1 223.0 297.5M258.1 442.9Q263.2 438.6 271.3 444.5M276.5 400.4Q279.0 393.0 289.6 391.9" stroke="#aaa588" stroke-width="0.8" opacity="0.5" fill="none" stroke-linecap="round"/><path d="M235.1 434.5Q244.9 437.5 251.7 446.5M278.7 413.4Q286.8 407.7 297.4 406.9" stroke="#aaa588" stroke-width="0.7" opacity="0.4" fill="none" stroke-linecap="round"/><path d="M270.8 380.2Q273.0 373.6 284.3 376.8M267.6 448.5Q266.4 442.8 271.9 437.6" stroke="#6f7a50" stroke-width="0.9" opacity="0.4" fill="none" stroke-linecap="round"/><path d="M251.7 324.2Q258.1 314.9 271.2 312.7" stroke="#aaa588" stroke-width="0.9" opacity="0.4" fill="none" stroke-linecap="round"/><path d="M275.1 441.2Q281.8 431.4 297.2 432.8M253.4 380.7Q259.8 371.1 270.3 365.0M229.8 427.3Q229.8 419.0 234.8 411.3M301.1 466.1Q295.0 469.0 291.1 457.0M245.6 462.5Q242.5 459.7 246.9 454.2" stroke="#9a9474" stroke-width="0.8" opacity="0.6" fill="none" stroke-linecap="round"/><path d="M261.7 434.1Q263.7 426.3 275.7 426.4" stroke="#8a8464" stroke-width="0.7" opacity="0.5" fill="none" stroke-linecap="round"/><path d="M251.4 489.1Q239.7 483.7 233.2 470.8" stroke="#9a9474" stroke-width="0.6" opacity="0.5" fill="none" stroke-linecap="round"/><path d="M249.9 449.1Q255.0 450.6 260.3 451.4M262.1 350.5Q262.7 341.1 271.0 333.8M255.8 375.9Q260.2 368.2 263.1 359.8" stroke="#aaa588" stroke-width="0.9" opacity="0.5" fill="none" stroke-linecap="round"/><path d="M273.4 432.4Q285.6 428.8 295.4 445.4" stroke="#8a8464" stroke-width="0.7" opacity="0.4" fill="none" stroke-linecap="round"/><path d="M245.0 365.9Q247.3 356.5 254.7 349.1M301.3 496.7Q298.2 492.7 304.5 487.1M263.3 360.8Q272.6 354.4 284.5 368.9" stroke="#8a8464" stroke-width="0.8" opacity="0.4" fill="none" stroke-linecap="round"/><path d="M239.6 493.1Q243.4 481.7 243.6 469.5M308.8 486.7Q304.8 483.0 303.6 477.2" stroke="#8a8464" stroke-width="0.7" opacity="0.6" fill="none" stroke-linecap="round"/><path d="M242.2 316.8Q248.3 310.5 254.9 304.7M284.7 504.2Q287.1 508.3 282.3 513.3M295.8 506.9Q291.6 499.6 297.4 490.0" stroke="#9a9474" stroke-width="0.8" opacity="0.4" fill="none" stroke-linecap="round"/><path d="M236.9 391.7Q244.5 383.8 249.2 373.5" stroke="#6f7a50" stroke-width="1.0" opacity="0.4" fill="none" stroke-linecap="round"/><path d="M272.1 401.1Q264.7 411.1 248.4 409.0" stroke="#8a8464" stroke-width="1.0" opacity="0.5" fill="none" stroke-linecap="round"/><path d="M287.9 417.3Q285.9 413.7 292.0 410.1" stroke="#aaa588" stroke-width="0.9" opacity="0.6" fill="none" stroke-linecap="round"/><path d="M306.0 461.9Q296.5 454.0 305.8 437.1" stroke="#8a8464" stroke-width="0.6" opacity="0.5" fill="none" stroke-linecap="round"/><path d="M242.8 335.0Q239.9 328.7 242.5 321.1M235.0 481.0Q239.2 481.0 243.2 482.4M239.3 410.4Q246.6 406.1 253.0 400.4" stroke="#8a8464" stroke-width="0.9" opacity="0.5" fill="none" stroke-linecap="round"/><path d="M230.7 311.2Q228.0 305.0 234.2 298.1M229.8 475.1Q225.9 469.4 220.8 464.6" stroke="#aaa588" stroke-width="0.7" opacity="0.5" fill="none" stroke-linecap="round"/><path d="M249.9 468.8Q247.7 456.2 245.8 443.5" stroke="#aaa588" stroke-width="1.0" opacity="0.5" fill="none" stroke-linecap="round"/><path d="M250.4 359.3Q258.8 365.1 258.5 377.9M282.6 409.5Q278.2 407.7 281.7 399.9" stroke="#9a9474" stroke-width="0.9" opacity="0.6" fill="none" stroke-linecap="round"/><path d="M251.7 501.4Q256.0 496.2 264.1 496.5M236.8 509.5Q235.6 498.4 244.1 488.3" stroke="#8a8464" stroke-width="1.0" opacity="0.6" fill="none" stroke-linecap="round"/><path d="M246.1 455.9Q247.2 448.9 248.6 441.9M267.4 449.8Q276.0 444.4 287.2 454.7M243.7 421.9Q245.4 413.8 257.3 412.5" stroke="#6f7a50" stroke-width="0.8" opacity="0.6" fill="none" stroke-linecap="round"/><path d="M236.1 409.2Q246.1 406.3 256.8 410.4" stroke="#aaa588" stroke-width="1.0" opacity="0.6" fill="none" stroke-linecap="round"/><path d="M297.6 505.8Q299.2 494.3 309.0 485.6" stroke="#8a8464" stroke-width="0.6" opacity="0.6" fill="none" stroke-linecap="round"/><path d="M236.4 440.7Q240.3 433.7 252.1 442.6" stroke="#aaa588" stroke-width="0.8" opacity="0.6" fill="none" stroke-linecap="round"/>
<path d="M254.1 361.4Q257.9 356.6 265.2 356.3M235.6 385.4Q231.9 383.2 233.2 377.0" stroke="#1c1e12" stroke-width="1.6" opacity="0.7" fill="none" stroke-linecap="round"/><path d="M253.9 477.3Q253.3 470.5 265.9 470.6" stroke="#1c1e12" stroke-width="1.6" opacity="0.5" fill="none" stroke-linecap="round"/><path d="M288.3 416.4Q297.1 414.8 305.7 421.2" stroke="#1c1e12" stroke-width="1.8" opacity="0.7" fill="none" stroke-linecap="round"/><path d="M287.0 461.3Q294.6 462.2 293.8 475.1" stroke="#1c1e12" stroke-width="1.8" opacity="0.6" fill="none" stroke-linecap="round"/><path d="M227.8 304.1Q235.5 303.8 243.0 305.5M231.7 359.9Q229.3 349.6 234.1 339.0M256.2 417.3Q256.2 412.6 261.3 409.5" stroke="#15170d" stroke-width="1.1" opacity="0.5" fill="none" stroke-linecap="round"/><path d="M283.3 458.0Q273.8 456.7 269.3 444.9M291.1 432.1Q300.5 429.3 310.4 435.7" stroke="#15170d" stroke-width="1.1" opacity="0.6" fill="none" stroke-linecap="round"/><path d="M257.2 356.7Q252.9 355.9 249.9 351.7M231.6 417.6Q236.0 409.9 248.8 413.2" stroke="#15170d" stroke-width="1.5" opacity="0.6" fill="none" stroke-linecap="round"/><path d="M253.5 352.0Q253.6 356.1 253.1 360.1" stroke="#1c1e12" stroke-width="1.2" opacity="0.5" fill="none" stroke-linecap="round"/><path d="M243.0 294.1Q248.1 286.6 260.9 291.5" stroke="#15170d" stroke-width="1.2" opacity="0.6" fill="none" stroke-linecap="round"/><path d="M257.4 411.2Q254.4 407.1 261.1 401.8M238.3 387.4Q245.5 381.3 252.3 374.5M271.1 433.3Q269.3 424.5 275.4 415.9M261.4 398.5Q260.7 394.1 262.9 389.6" stroke="#1c1e12" stroke-width="1.9" opacity="0.5" fill="none" stroke-linecap="round"/><path d="M262.5 398.6Q266.0 395.9 270.5 395.0" stroke="#15170d" stroke-width="1.5" opacity="0.7" fill="none" stroke-linecap="round"/><path d="M243.5 308.4Q247.3 305.2 249.8 300.9" stroke="#1c1e12" stroke-width="1.2" opacity="0.6" fill="none" stroke-linecap="round"/><path d="M276.5 469.0Q283.8 468.9 285.2 480.8" stroke="#15170d" stroke-width="1.9" opacity="0.4" fill="none" stroke-linecap="round"/><path d="M262.3 357.2Q267.4 353.6 274.6 357.4" stroke="#15170d" stroke-width="1.7" opacity="0.4" fill="none" stroke-linecap="round"/><path d="M270.1 423.3Q267.4 415.4 270.2 406.7" stroke="#15170d" stroke-width="1.7" opacity="0.5" fill="none" stroke-linecap="round"/><path d="M305.2 474.9Q299.3 473.3 302.0 463.2" stroke="#15170d" stroke-width="1.2" opacity="0.5" fill="none" stroke-linecap="round"/><path d="M253.6 478.2Q258.4 473.6 266.2 482.7M249.7 383.8Q253.1 378.3 260.9 377.4" stroke="#1c1e12" stroke-width="1.4" opacity="0.4" fill="none" stroke-linecap="round"/><path d="M251.5 371.7Q244.3 372.3 240.2 362.5" stroke="#1c1e12" stroke-width="1.7" opacity="0.4" fill="none" stroke-linecap="round"/><path d="M303.3 509.4Q307.3 501.5 311.7 493.8" stroke="#15170d" stroke-width="2.0" opacity="0.6" fill="none" stroke-linecap="round"/><path d="M255.9 412.0Q253.6 402.8 253.5 393.3" stroke="#15170d" stroke-width="1.5" opacity="0.5" fill="none" stroke-linecap="round"/><path d="M228.5 410.0Q234.6 407.9 241.4 408.9M255.9 480.5Q259.0 476.4 263.9 474.0M246.6 509.5Q252.3 507.0 255.5 518.3" stroke="#1c1e12" stroke-width="1.5" opacity="0.6" fill="none" stroke-linecap="round"/><path d="M254.4 366.7Q255.8 360.1 261.4 355.0" stroke="#1c1e12" stroke-width="1.6" opacity="0.6" fill="none" stroke-linecap="round"/><path d="M235.2 452.1Q232.1 446.3 238.0 439.2" stroke="#1c1e12" stroke-width="1.4" opacity="0.6" fill="none" stroke-linecap="round"/><path d="M253.9 400.2Q255.1 395.1 263.1 395.3M292.9 442.2Q295.6 436.3 296.4 429.8" stroke="#15170d" stroke-width="1.9" opacity="0.5" fill="none" stroke-linecap="round"/><path d="M295.8 439.6Q301.4 440.8 307.3 440.8" stroke="#15170d" stroke-width="1.4" opacity="0.6" fill="none" stroke-linecap="round"/><path d="M291.1 485.3Q288.6 481.0 290.8 475.2" stroke="#15170d" stroke-width="1.8" opacity="0.6" fill="none" stroke-linecap="round"/><path d="M253.8 395.9Q258.3 389.0 264.3 383.3M230.2 442.1Q225.7 436.1 219.5 431.6" stroke="#1c1e12" stroke-width="1.5" opacity="0.4" fill="none" stroke-linecap="round"/><path d="M262.4 492.3Q260.8 484.1 274.4 481.0" stroke="#1c1e12" stroke-width="1.6" opacity="0.4" fill="none" stroke-linecap="round"/><path d="M245.4 446.0Q239.7 440.7 236.8 433.1" stroke="#15170d" stroke-width="1.9" opacity="0.7" fill="none" stroke-linecap="round"/><path d="M235.5 371.2Q229.1 364.6 240.8 353.6M246.3 361.3Q243.6 352.9 239.7 345.0" stroke="#15170d" stroke-width="1.2" opacity="0.7" fill="none" stroke-linecap="round"/><path d="M251.7 346.4Q257.1 340.2 261.7 333.3" stroke="#15170d" stroke-width="1.4" opacity="0.7" fill="none" stroke-linecap="round"/><path d="M256.8 482.2Q259.9 477.5 261.6 472.1" stroke="#15170d" stroke-width="1.7" opacity="0.6" fill="none" stroke-linecap="round"/><path d="M239.5 441.3Q243.3 434.8 252.1 433.0" stroke="#1c1e12" stroke-width="1.8" opacity="0.4" fill="none" stroke-linecap="round"/><path d="M258.5 418.0Q259.3 410.2 258.0 402.3M291.3 444.8Q297.5 444.0 302.2 450.9" stroke="#1c1e12" stroke-width="1.9" opacity="0.4" fill="none" stroke-linecap="round"/><path d="M291.2 509.0Q291.8 503.5 292.2 498.0" stroke="#15170d" stroke-width="1.6" opacity="0.7" fill="none" stroke-linecap="round"/><path d="M262.5 479.7Q261.3 475.1 268.4 472.3" stroke="#15170d" stroke-width="1.6" opacity="0.6" fill="none" stroke-linecap="round"/><path d="M226.8 420.7Q221.3 415.5 215.3 410.7" stroke="#15170d" stroke-width="1.2" opacity="0.4" fill="none" stroke-linecap="round"/><path d="M241.8 312.7Q242.5 308.5 249.6 309.5" stroke="#1c1e12" stroke-width="1.8" opacity="0.5" fill="none" stroke-linecap="round"/><path d="M235.8 426.4Q241.6 433.0 243.4 442.2" stroke="#1c1e12" stroke-width="1.3" opacity="0.5" fill="none" stroke-linecap="round"/><path d="M253.3 424.5Q256.1 417.5 264.7 414.6" stroke="#15170d" stroke-width="1.8" opacity="0.4" fill="none" stroke-linecap="round"/><path d="M263.1 501.0Q258.3 498.7 258.0 491.8" stroke="#1c1e12" stroke-width="1.0" opacity="0.4" fill="none" stroke-linecap="round"/><path d="M302.9 499.5Q309.1 493.9 318.9 504.3" stroke="#15170d" stroke-width="1.6" opacity="0.5" fill="none" stroke-linecap="round"/><path d="M240.5 461.5Q235.2 457.7 243.5 448.8" stroke="#1c1e12" stroke-width="1.7" opacity="0.5" fill="none" stroke-linecap="round"/><path d="M266.9 365.5Q262.1 359.9 256.1 355.5" stroke="#1c1e12" stroke-width="1.1" opacity="0.4" fill="none" stroke-linecap="round"/><path d="M268.8 476.3Q262.0 470.5 262.3 459.6" stroke="#1c1e12" stroke-width="1.9" opacity="0.6" fill="none" stroke-linecap="round"/>
<path d="M339.8 464.6Q332.4 454.6 348.0 441.1" stroke="#c6d2a8" stroke-width="1.0" opacity="0.6" fill="none" stroke-linecap="round"/><path d="M284.8 390.0Q278.8 370.5 303.0 353.5M276.1 439.4Q279.4 423.4 303.6 422.0" stroke="#d2dcba" stroke-width="1.1" opacity="0.6" fill="none" stroke-linecap="round"/><path d="M295.7 386.9Q303.4 380.8 315.3 388.2M248.0 494.9Q262.1 478.6 287.4 477.3" stroke="#c6d2a8" stroke-width="1.4" opacity="0.5" fill="none" stroke-linecap="round"/><path d="M242.8 461.2Q257.3 450.3 276.6 448.2" stroke="#c6d2a8" stroke-width="0.9" opacity="0.6" fill="none" stroke-linecap="round"/><path d="M249.2 445.2Q261.3 451.7 270.6 462.4" stroke="#b4c496" stroke-width="1.3" opacity="0.7" fill="none" stroke-linecap="round"/><path d="M270.3 468.6Q278.5 452.5 289.7 438.2M281.9 486.9Q282.0 467.4 298.5 451.7" stroke="#d2dcba" stroke-width="1.0" opacity="0.6" fill="none" stroke-linecap="round"/><path d="M337.6 427.4Q338.9 408.2 360.7 396.7" stroke="#b4c496" stroke-width="1.1" opacity="0.5" fill="none" stroke-linecap="round"/><path d="M329.3 445.0Q345.2 429.9 355.2 409.6" stroke="#c6d2a8" stroke-width="0.8" opacity="0.6" fill="none" stroke-linecap="round"/><path d="M331.6 400.5Q341.9 383.6 370.8 395.8" stroke="#a2b880" stroke-width="1.3" opacity="0.6" fill="none" stroke-linecap="round"/><path d="M318.0 467.0Q307.0 464.2 298.3 455.8" stroke="#a2b880" stroke-width="1.1" opacity="0.7" fill="none" stroke-linecap="round"/><path d="M264.8 442.6Q268.0 427.9 290.6 427.2" stroke="#c6d2a8" stroke-width="1.1" opacity="0.6" fill="none" stroke-linecap="round"/><path d="M346.0 449.3Q355.8 435.1 375.3 431.3M333.5 470.1Q335.9 453.5 348.1 439.9" stroke="#d2dcba" stroke-width="1.4" opacity="0.6" fill="none" stroke-linecap="round"/><path d="M321.1 469.8Q336.8 467.8 352.2 463.3" stroke="#d2dcba" stroke-width="1.1" opacity="0.5" fill="none" stroke-linecap="round"/><path d="M355.9 397.9Q372.5 385.8 385.4 369.4" stroke="#c6d2a8" stroke-width="1.4" opacity="0.6" fill="none" stroke-linecap="round"/><path d="M253.5 440.2Q257.6 421.2 289.8 426.4" stroke="#b4c496" stroke-width="1.5" opacity="0.5" fill="none" stroke-linecap="round"/><path d="M256.4 451.3Q253.6 438.0 271.7 428.9" stroke="#b4c496" stroke-width="1.0" opacity="0.7" fill="none" stroke-linecap="round"/><path d="M262.5 502.0Q278.1 498.7 293.6 494.4" stroke="#d2dcba" stroke-width="1.1" opacity="0.7" fill="none" stroke-linecap="round"/><path d="M299.7 425.4Q291.8 408.4 288.4 389.6M323.1 432.0Q321.4 420.3 323.6 408.4" stroke="#c6d2a8" stroke-width="1.4" opacity="0.7" fill="none" stroke-linecap="round"/><path d="M297.4 471.1Q286.5 455.9 306.1 434.7" stroke="#b4c496" stroke-width="1.4" opacity="0.7" fill="none" stroke-linecap="round"/><path d="M293.2 459.0Q295.7 449.1 304.0 441.7" stroke="#a2b880" stroke-width="0.9" opacity="0.5" fill="none" stroke-linecap="round"/><path d="M289.6 388.1Q290.6 367.4 301.2 348.3" stroke="#a2b880" stroke-width="0.8" opacity="0.8" fill="none" stroke-linecap="round"/><path d="M256.1 506.9Q275.7 501.4 293.7 522.4" stroke="#a2b880" stroke-width="1.1" opacity="0.6" fill="none" stroke-linecap="round"/><path d="M258.1 451.3Q268.0 433.5 294.5 433.3M294.2 425.5Q309.0 423.9 323.9 422.6" stroke="#a2b880" stroke-width="1.4" opacity="0.7" fill="none" stroke-linecap="round"/><path d="M245.2 389.7Q264.0 383.6 283.1 378.2M249.1 470.6Q240.8 465.4 233.4 459.1" stroke="#a2b880" stroke-width="0.8" opacity="0.5" fill="none" stroke-linecap="round"/><path d="M320.9 428.9Q323.8 419.8 328.5 411.3" stroke="#c6d2a8" stroke-width="0.8" opacity="0.5" fill="none" stroke-linecap="round"/><path d="M327.8 444.6Q333.7 436.0 346.1 434.4M348.8 436.6Q362.7 430.8 373.5 454.0M269.9 441.8Q274.2 433.7 276.3 424.6" stroke="#d2dcba" stroke-width="1.3" opacity="0.5" fill="none" stroke-linecap="round"/><path d="M325.8 451.7Q326.0 431.3 320.6 411.2" stroke="#c6d2a8" stroke-width="1.3" opacity="0.7" fill="none" stroke-linecap="round"/><path d="M246.7 466.7Q262.6 468.6 278.6 470.1" stroke="#c6d2a8" stroke-width="1.5" opacity="0.6" fill="none" stroke-linecap="round"/><path d="M288.2 488.3Q296.6 482.1 309.1 487.1M250.6 411.8Q264.5 397.1 290.8 416.4" stroke="#d2dcba" stroke-width="1.2" opacity="0.5" fill="none" stroke-linecap="round"/><path d="M358.8 443.5Q362.4 463.4 371.5 481.8" stroke="#d2dcba" stroke-width="0.9" opacity="0.5" fill="none" stroke-linecap="round"/><path d="M338.4 456.2Q345.2 442.9 360.2 435.9" stroke="#d2dcba" stroke-width="1.2" opacity="0.7" fill="none" stroke-linecap="round"/><path d="M357.9 418.4Q370.0 405.3 389.8 402.3M259.3 498.4Q257.5 480.4 273.0 464.9" stroke="#c6d2a8" stroke-width="1.0" opacity="0.8" fill="none" stroke-linecap="round"/><path d="M344.0 460.8Q333.7 455.0 346.4 437.2M308.2 495.9Q309.4 484.6 327.2 483.4" stroke="#c6d2a8" stroke-width="1.1" opacity="0.5" fill="none" stroke-linecap="round"/><path d="M344.4 391.5Q352.6 384.4 365.7 394.5" stroke="#d2dcba" stroke-width="1.4" opacity="0.5" fill="none" stroke-linecap="round"/><path d="M284.7 475.4Q287.8 465.4 297.9 459.2" stroke="#c6d2a8" stroke-width="1.1" opacity="0.7" fill="none" stroke-linecap="round"/><path d="M253.8 470.0Q268.9 475.5 279.5 489.4M333.0 424.7Q341.8 408.1 366.4 407.6" stroke="#b4c496" stroke-width="1.2" opacity="0.6" fill="none" stroke-linecap="round"/><path d="M346.4 404.3Q349.6 386.1 367.4 373.9M281.4 383.1Q302.3 379.7 323.3 389.1" stroke="#a2b880" stroke-width="1.4" opacity="0.6" fill="none" stroke-linecap="round"/><path d="M283.2 482.3Q298.2 467.5 311.1 450.7M351.0 453.4Q364.2 444.7 378.0 436.9" stroke="#a2b880" stroke-width="0.9" opacity="0.7" fill="none" stroke-linecap="round"/><path d="M304.1 385.5Q315.2 379.5 329.2 385.9" stroke="#c6d2a8" stroke-width="1.3" opacity="0.5" fill="none" stroke-linecap="round"/><path d="M363.8 452.6Q379.9 445.6 392.9 432.8M325.4 446.3Q333.5 432.0 356.6 435.8" stroke="#b4c496" stroke-width="1.4" opacity="0.6" fill="none" stroke-linecap="round"/><path d="M332.2 399.6Q337.0 378.4 370.8 379.6M337.6 478.0Q353.4 468.8 370.5 493.7" stroke="#b4c496" stroke-width="1.3" opacity="0.5" fill="none" stroke-linecap="round"/><path d="M316.7 428.8Q324.8 415.9 343.8 415.1" stroke="#c6d2a8" stroke-width="0.9" opacity="0.7" fill="none" stroke-linecap="round"/><path d="M260.0 420.7Q273.7 421.6 270.0 446.4" stroke="#b4c496" stroke-width="1.4" opacity="0.5" fill="none" stroke-linecap="round"/><path d="M284.3 391.0Q282.8 372.4 299.0 356.8" stroke="#b4c496" stroke-width="0.9" opacity="0.8" fill="none" stroke-linecap="round"/><path d="M318.4 411.0Q333.6 401.2 353.7 403.7" stroke="#a2b880" stroke-width="0.9" opacity="0.6" fill="none" stroke-linecap="round"/><path d="M333.2 382.1Q334.6 363.8 345.3 347.5" stroke="#d2dcba" stroke-width="1.2" opacity="0.6" fill="none" stroke-linecap="round"/><path d="M285.1 494.4Q297.9 484.5 306.5 470.1" stroke="#b4c496" stroke-width="1.3" opacity="0.8" fill="none" stroke-linecap="round"/><path d="M298.3 479.0Q297.7 463.4 314.4 452.3" stroke="#d2dcba" stroke-width="0.9" opacity="0.7" fill="none" stroke-linecap="round"/><path d="M349.7 419.6Q360.4 402.1 367.4 382.7" stroke="#a2b880" stroke-width="1.0" opacity="0.7" fill="none" stroke-linecap="round"/><path d="M325.1 440.5Q306.7 431.2 317.8 399.7" stroke="#a2b880" stroke-width="1.2" opacity="0.7" fill="none" stroke-linecap="round"/><path d="M347.6 413.4Q364.9 401.2 388.0 401.1" stroke="#d2dcba" stroke-width="1.3" opacity="0.8" fill="none" stroke-linecap="round"/><path d="M282.9 381.4Q296.0 387.3 310.1 390.8" stroke="#c6d2a8" stroke-width="1.2" opacity="0.7" fill="none" stroke-linecap="round"/><path d="M361.0 413.8Q345.9 398.6 338.6 377.3" stroke="#d2dcba" stroke-width="1.4" opacity="0.8" fill="none" stroke-linecap="round"/>
</g></g>
<g filter="url(#b1)"><polygon points="314,182 364,236 364,370 352,358 330,337 300,309 277,288 271,274 269,262 271,250 280,237 292,222 301,200 305,187" fill="url(#skyg)"/></g>
<g filter="url(#b05)">
<path d="M296 218Q314 203 334 193Q337 196 335 200Q320 210 306 221Q300 224 296 218Z" fill="#4a6640" opacity="0.75"/>
<path d="M297.8 216.6Q301.5 220.1 302.9 225.5M297.8 216.6Q298.6 211.6 296.4 206.5M299.2 215.6Q302.8 219.2 304.0 224.7M299.2 215.6Q300.4 210.6 298.6 205.3M300.6 214.5Q304.7 218.7 306.1 224.9M300.6 214.5Q301.8 208.8 299.5 202.9M302.0 213.5Q305.7 217.1 306.9 222.6M302.0 213.5Q303.1 208.5 301.2 203.2M303.4 212.5Q308.1 216.3 310.1 222.6M303.4 212.5Q305.3 206.8 303.6 200.4M304.8 211.5Q308.8 215.8 309.9 222.1M304.8 211.5Q306.2 205.8 304.1 199.8M306.2 210.5Q309.8 214.3 310.9 219.9M306.2 210.5Q307.8 205.5 306.3 200.1M307.7 209.6Q312.0 213.5 313.7 219.6M307.7 209.6Q309.7 204.0 308.2 197.8M309.1 208.6Q313.5 213.0 315.0 219.6M309.1 208.6Q310.4 202.5 308.0 196.1M310.6 207.6Q314.3 211.7 315.4 217.6M310.6 207.6Q311.8 202.3 309.7 196.6M312.0 206.7Q316.6 211.4 318.0 218.4M312.0 206.7Q313.8 200.4 311.7 193.6M313.5 205.8Q317.3 209.7 318.4 215.5M313.5 205.8Q315.5 200.7 314.3 194.9M315.0 204.9Q318.3 208.9 318.9 214.5M315.0 204.9Q316.7 200.0 315.4 194.5M316.5 204.0Q320.6 208.4 321.6 214.9M316.5 204.0Q318.7 198.3 317.3 191.9M318.0 203.1Q321.9 207.3 322.9 213.5M318.0 203.1Q320.3 197.8 319.2 191.6M319.5 202.2Q322.4 205.6 323.0 210.4M319.5 202.2Q321.2 198.1 320.4 193.3M321.0 201.3Q324.4 205.3 325.2 211.0M321.0 201.3Q322.9 196.4 321.7 190.8M322.5 200.4Q325.5 203.6 326.4 208.3M322.5 200.4Q324.1 196.4 323.2 191.7M324.0 199.6Q326.4 202.3 327.0 206.2M324.0 199.6Q325.3 196.2 324.5 192.4M325.6 198.8Q327.8 201.2 328.3 204.8M325.6 198.8Q326.6 195.6 325.7 192.2M327.1 197.9Q329.4 200.9 329.7 204.8M327.1 197.9Q328.6 194.5 327.9 190.6M328.7 197.1Q330.6 199.7 330.8 203.2M328.7 197.1Q330.0 194.2 329.6 190.7M330.3 196.3Q332.2 198.7 332.6 202.1M330.3 196.3Q331.4 193.5 330.8 190.2M331.8 195.5Q334.2 198.4 334.7 202.5M331.8 195.5Q333.6 192.2 333.3 188.2M333.4 194.8Q335.4 197.6 335.5 201.3M333.4 194.8Q334.6 191.5 333.9 187.9M335.0 194.0Q336.9 196.5 337.1 199.9M335.0 194.0Q336.5 191.3 336.3 187.9" stroke="#3f5a36" stroke-width="1.5" fill="none" opacity="0.9" stroke-linecap="round"/><path d="M296 218Q314 204 335 194" stroke="#34502c" stroke-width="1.8" fill="none" opacity="1" stroke-linecap="round"/>
<path d="M299.6 215.8Q302.2 217.6 303.5 220.7M302.0 214.1Q305.4 216.4 307.1 220.6M304.4 212.4Q307.7 214.4 309.4 218.3M306.8 210.7Q310.7 213.5 312.7 218.3M309.3 209.0Q312.7 211.7 314.3 216.1M311.8 207.4Q315.9 210.1 318.0 215.0M314.3 205.8Q317.7 208.5 319.1 213.0M316.9 204.2Q320.5 206.6 322.3 210.9M319.5 202.6Q322.5 205.4 323.6 209.7M322.1 201.0Q324.8 202.9 326.0 206.1M324.8 199.5Q326.7 200.9 327.6 203.2M327.5 198.0Q329.3 199.6 329.9 202.2M330.2 196.5Q332.1 198.0 332.9 200.5M333.0 195.0Q334.6 196.6 335.0 199.1" stroke="#9ab07a" stroke-width="0.9" fill="none" opacity="0.6" stroke-linecap="round"/>
<path d="M344 229l5-3M347 231l5-3M350 227l2 4" stroke="#3f5636" stroke-width="1.3" opacity="0.85" fill="none" stroke-linecap="round"/>
<path d="M308.9 182.6L312.4 187.0M308.2 182.9L313.0 188.7M306.1 184.1L307.2 189.9M308.3 182.9L309.4 187.4M300.3 195.4L307.0 198.3M301.3 192.1L306.8 195.5M301.4 191.8L307.9 193.8M301.6 191.1L311.7 190.0M302.9 187.1L307.5 191.0M300.4 195.1L306.8 198.7M293.2 213.7L298.6 215.0M299.1 199.4L303.5 203.1M297.3 203.9L304.3 209.4M291.1 219.0L296.5 220.7M299.1 199.3L308.9 197.7M297.1 204.3L300.5 207.1M293.4 213.2L301.4 217.7M293.3 213.4L302.6 214.2M292.1 216.6L302.8 216.5M296.9 204.7L300.4 207.4M281.8 231.6L284.7 236.1M290.0 221.3L300.4 223.4M288.6 223.0L291.7 226.2M289.4 222.0L296.8 225.8M280.3 233.4L283.7 235.4M279.8 234.1L288.6 235.5M283.8 229.0L286.9 232.7M278.8 235.3L283.1 240.3M271.1 246.3L279.7 247.9M277.2 237.5L284.4 243.6M271.8 245.4L275.9 248.4M270.0 247.9L273.7 249.6M274.1 242.0L279.6 245.5M276.9 238.0L284.3 244.0M270.4 247.3L274.6 249.8M267.1 261.4L276.2 262.5M267.0 261.6L277.4 259.6M268.0 255.6L272.9 257.9M269.0 250.0L277.6 254.8M268.6 252.3L277.2 251.1M268.1 268.5L272.2 266.8M267.2 263.5L277.3 261.3M268.9 273.3L277.7 271.8M267.2 263.4L274.6 257.3M267.4 264.5L276.5 260.8M270.0 276.8L277.5 274.4M272.7 283.1L279.3 276.3M272.6 282.8L277.3 282.6M270.8 278.5L280.0 277.5M272.8 283.2L282.8 284.9M271.0 279.0L277.5 279.4M282.5 295.7L286.1 293.8M282.9 296.1L287.0 288.7M292.3 304.7L295.9 302.3M296.3 308.3L302.5 305.6M290.3 302.8L295.8 297.3M287.8 300.5L290.8 293.3M295.7 307.8L298.5 304.0M298.1 310.0L301.1 306.1M292.6 304.9L294.8 297.6M277.1 290.8L280.9 288.7M279.9 293.4L286.5 287.3M283.1 296.3L286.7 292.5M280.1 293.5L281.7 289.1M289.0 301.6L295.4 297.9M322.5 332.7L324.6 326.3M316.3 327.0L318.1 320.8M310.4 321.5L314.0 317.7M326.6 336.6L328.3 331.9M312.7 323.6L316.6 317.2M315.2 325.9L317.9 322.6M323.4 333.6L325.3 329.5M323.2 333.4L326.6 327.5M310.6 321.6L312.2 318.1M320.6 330.9L323.1 326.5M315.6 326.3L320.2 318.9M326.5 336.5L330.4 334.3M327.9 337.8L330.5 334.2M327.2 337.1L329.6 328.9M316.8 327.4L318.7 319.8M304.3 315.7L308.2 309.7M308.2 319.4L309.7 315.9M310.5 321.6L314.6 316.4M350.3 359.1L353.0 354.2M332.7 342.4L337.4 339.3M348.4 357.4L356.4 354.7M342.3 351.5L346.1 348.0M345.8 354.9L351.6 348.5M340.7 350.0L345.9 346.4M346.9 355.9L354.5 352.5M339.5 348.8L342.8 346.8M333.1 342.8L338.2 336.2M349.6 358.4L353.9 355.5M331.9 341.5L337.8 335.7M337.8 347.3L340.5 341.3M347.1 356.1L352.2 354.0" stroke="#5f7d45" stroke-width="1.5" opacity="0.85" fill="none" stroke-linecap="round"/>
<path d="M322 372Q340 356 352 338" stroke="#55753f" stroke-width="2.2" fill="none" stroke-linecap="round"/>
</g>
</g>
</svg>

<!-- control bar -->
<div class="abs" style="left:2px;top:504px;width:461px;height:50px;background:#f0f0f0;border-top:1px solid #fafafa"></div>
<!-- seek bar -->
<div class="abs" style="left:52px;top:509px;width:362px;height:8px;border-radius:4px;background:linear-gradient(#c4c4c4,#dadada 60%,#e4e4e4)"></div>
<div class="abs" style="left:52px;top:509px;width:127px;height:8px;border-radius:4px;background:linear-gradient(#4b93dd,#2a78cf 50%,#2a7ad2)"></div>

<!-- buttons -->
<div class="btn" style="left:7px;top:524px;width:27px;height:27px"></div>
<svg style="left:14px;top:530px" width="13" height="16" viewBox="0 0 13 16"><path d="M0.5 0.3 L12.3 8 L0.5 15.7 Z" fill="#666"/></svg>

<div class="btn" style="left:48px;top:527px;width:22px;height:22px"></div>
<div class="btn" style="left:73px;top:527px;width:22px;height:22px"></div>
<div class="btn" style="left:98px;top:527px;width:22px;height:22px"></div>
<div class="btn" style="left:133.5px;top:527px;width:22px;height:22px"></div>
<div class="btn" style="left:158.5px;top:527px;width:22px;height:22px"></div>
<div class="btn" style="left:194px;top:527px;width:22px;height:22px"></div>
<div class="btn" style="left:219px;top:527px;width:22px;height:22px"></div>
<div class="btn" style="left:244px;top:527px;width:22px;height:22px"></div>

<!-- prev -->
<svg style="left:48px;top:527px" width="22" height="22" viewBox="0 0 22 22"><path d="M4 5.6h2.6v10.8H4z M6.4 11 L12.3 5.6v10.8z M12 11 L18 5.6v10.8z" fill="#666"/></svg>
<!-- stop -->
<svg style="left:73px;top:527px" width="22" height="22" viewBox="0 0 22 22"><rect x="6" y="6" width="10" height="10" fill="#666"/></svg>
<!-- next -->
<svg style="left:98px;top:527px" width="22" height="22" viewBox="0 0 22 22"><path d="M18 5.6h-2.6v10.8H18z M15.6 11 L9.7 5.6v10.8z M10 11 L4 5.6v10.8z" fill="#666"/></svg>
<!-- fullscreen -->
<svg style="left:133.5px;top:527px" width="22" height="22" viewBox="0 0 22 22"><path d="M5 9V5.5h4 M13 5.5h4V9 M17 13v3.5h-4 M9 16.5H5V13" stroke="#5e5e5e" stroke-width="2" fill="none"/></svg>
<!-- ext settings -->
<svg style="left:158.5px;top:527px" width="22" height="22" viewBox="0 0 22 22"><path d="M6 5v12 M11 5v12 M16 5v12" stroke="#5e5e5e" stroke-width="1.6" fill="none"/><path d="M4.2 7h3.6v3H4.2z M9.2 12h3.6v3H9.2z M14.2 8.5h3.6v3h-3.6z" fill="#5e5e5e"/></svg>
<!-- playlist -->
<svg style="left:194px;top:527px" width="22" height="22" viewBox="0 0 22 22"><path d="M5 6.5h12 M5 11h12 M5 15.5h8" stroke="#5e5e5e" stroke-width="2" fill="none"/><path d="M14.2 13.3 L18 15.6 L14.2 17.9z" fill="#5e5e5e"/></svg>
<!-- loop -->
<svg style="left:219px;top:527px" width="22" height="22" viewBox="0 0 22 22"><path d="M5.5 10.5V9a2 2 0 0 1 2-2h6.5 M16.5 11.5V13a2 2 0 0 1-2 2H8" stroke="#5e5e5e" stroke-width="2" fill="none"/><path d="M13.5 4.2 L17.3 7 L13.5 9.8z M8.5 12.2 L4.7 15 L8.5 17.8z" fill="#5e5e5e"/></svg>
<!-- random -->
<svg style="left:244px;top:527px" width="22" height="22" viewBox="0 0 22 22"><path d="M4.5 6 L7 6 L14.5 15.5 L16 15.5 M4.5 16 L7 16 L9.5 12.8 M12 9.5 L14.5 6.2 L16 6.2" stroke="#5e5e5e" stroke-width="1.9" fill="none"/><path d="M14.6 3.6 L18 6.2 L14.6 8.8z M14.6 13 L18 15.6 L14.6 18.2z" fill="#5e5e5e"/></svg>

<!-- volume -->
<svg style="left:354px;top:539px" width="12" height="13" viewBox="0 0 12 13"><path d="M1.2 4.5h2L6.5 1.5v10L3.2 8.5h-2z" fill="#6e6e6e"/><rect x="8" y="5" width="1.3" height="3.2" fill="#f08a10"/></svg>
<svg style="left:370px;top:526px" width="80" height="28" viewBox="0 0 80 28"><path d="M5.5 23.5 L74.3 4.6 L74.3 23.5 Z" fill="none" stroke="#5a5a5a" stroke-width="1.4" stroke-linejoin="miter"/></svg>
<!-- size grip -->
<svg style="left:452px;top:543px" width="9" height="9" viewBox="0 0 9 9"><g fill="#b8b8b8"><rect x="6.5" y="0.5" width="1.6" height="1.6"/><rect x="3.5" y="3.5" width="1.6" height="1.6"/><rect x="6.5" y="3.5" width="1.6" height="1.6"/><rect x="0.5" y="6.5" width="1.6" height="1.6"/><rect x="3.5" y="6.5" width="1.6" height="1.6"/><rect x="6.5" y="6.5" width="1.6" height="1.6"/></g></svg>

<!-- ===== Adjustments and Effects dialog ===== -->
<div class="abs" style="left:372.3px;top:69px;width:403.2px;height:422px;background:#f0f0f0"></div>
<div class="abs" style="left:372.3px;top:69px;width:403.2px;height:28px;background:#fff"></div>
<!-- close button -->
<div class="abs" style="left:756px;top:76.2px;width:18.2px;height:17.8px;background:#c9444a"></div>
<svg style="left:762.3px;top:82.2px" width="6" height="6" viewBox="0 0 6 6"><path d="M0.6 0.6L5.4 5.4M5.4 0.6L0.6 5.4" stroke="#fff" stroke-width="1.7" fill="none"/></svg>

<!-- outer tab pane -->
<div class="abs" style="left:372.6px;top:119.4px;width:400.4px;height:346px;background:#fff;border:1px solid #dcdcdc"></div>
<div class="tab" style="left:375px;top:102px;width:80px;height:18px"></div>
<div class="tab" style="left:539px;top:102px;width:92.5px;height:18px"></div>
<div class="tab sel" style="left:454px;top:99.5px;width:85.5px;height:21px"></div>

<!-- inner tab pane -->
<div class="abs" style="left:383.5px;top:148.4px;width:377.5px;height:304px;background:#fff;border:1px solid #d9d9d9"></div>
<div class="tab" style="left:384.5px;top:132px;width:61px;height:17px"></div>
<div class="tab" style="left:444.5px;top:132px;width:45px;height:17px"></div>
<div class="tab" style="left:488.5px;top:132px;width:52px;height:17px"></div>
<div class="tab" style="left:609.5px;top:132px;width:58px;height:17px"></div>
<div class="tab" style="left:666.5px;top:132px;width:68px;height:17px"></div>
<div class="tab sel" style="left:540px;top:129px;width:70.5px;height:20.4px"></div>

<!-- group boxes -->
<div class="grp" style="left:394px;top:186.3px;width:175.5px;height:76.5px"></div>
<div class="abs" style="left:399px;top:180px;width:67px;height:14px;background:#fff"></div>
<div class="grp" style="left:394px;top:275px;width:175.5px;height:164px"></div>
<div class="abs" style="left:399px;top:269px;width:52px;height:14px;background:#fff"></div>
<div class="grp" style="left:575.5px;top:165px;width:175.5px;height:185.5px"></div>
<div class="abs" style="left:580px;top:158px;width:40px;height:14px;background:#fff"></div>
<div class="grp" style="left:575.5px;top:364px;width:175.5px;height:75.5px"></div>
<div class="abs" style="left:580px;top:357px;width:77px;height:14px;background:#fff"></div>

<!-- checkboxes -->
<div class="cb" style="left:393px;top:160.5px"></div>
<div class="cb" style="left:400.7px;top:180.3px"></div>
<svg style="left:400.7px;top:180.3px" width="13" height="13" viewBox="0 0 13 13"><path d="M2.8 6.6 L5.3 9.2 L10.3 3.6" stroke="#222" stroke-width="1.3" fill="none"/></svg>
<div class="cb" style="left:400.7px;top:269px;border-color:#0078d7;box-shadow:0 0 0 1px rgba(140,200,245,.55)"></div>
<svg style="left:400.7px;top:269px" width="13" height="13" viewBox="0 0 13 13"><path d="M2.8 6.6 L5.3 9.2 L10.3 3.6" stroke="#1e66c0" stroke-width="1.4" fill="none"/></svg>
<div class="cb" style="left:582px;top:158px"></div>
<div class="cb" style="left:582px;top:357.5px"></div>

<!-- combobox -->
<div class="btn" style="left:403px;top:218.5px;width:157px;height:18.5px"></div>
<svg style="left:546.4px;top:225.8px" width="8.4" height="4.6" viewBox="0 0 9 5"><path d="M0.3 0.3h8.4L4.5 4.8z" fill="#111"/></svg>

<!-- spin boxes -->
<div class="spin" style="left:666px;top:219.7px;width:75px;height:18px"></div>
<div class="spin" style="left:666px;top:283.2px;width:75px;height:18px"></div>
<div class="spin" style="left:666px;top:383.2px;width:75px;height:18px"></div>
<div class="spin" style="left:666px;top:411px;width:75px;height:18px"></div>
<svg style="left:729.6px;top:224.3px" width="5.6" height="9.2" viewBox="0 0 5.6 9.2"><path d="M2.8 0.3L5.4 3H0.2z M2.8 8.9L5.4 6.2H0.2z" fill="#5a5a5a"/></svg><div class="abs" style="left:727px;top:221.2px;width:1px;height:15px;background:#dcdcdc"></div>
<svg style="left:729.6px;top:287.8px" width="5.6" height="9.2" viewBox="0 0 5.6 9.2"><path d="M2.8 0.3L5.4 3H0.2z M2.8 8.9L5.4 6.2H0.2z" fill="#5a5a5a"/></svg><div class="abs" style="left:727px;top:284.7px;width:1px;height:15px;background:#dcdcdc"></div>
<svg style="left:729.6px;top:387.8px" width="5.6" height="9.2" viewBox="0 0 5.6 9.2"><path d="M2.8 0.3L5.4 3H0.2z M2.8 8.9L5.4 6.2H0.2z" fill="#5a5a5a"/></svg><div class="abs" style="left:727px;top:384.7px;width:1px;height:15px;background:#dcdcdc"></div>
<svg style="left:729.6px;top:415.6px" width="5.6" height="9.2" viewBox="0 0 5.6 9.2"><path d="M2.8 0.3L5.4 3H0.2z M2.8 8.9L5.4 6.2H0.2z" fill="#5a5a5a"/></svg><div class="abs" style="left:727px;top:412.5px;width:1px;height:15px;background:#dcdcdc"></div>

<!-- dial -->
<svg style="left:0;top:0" width="800" height="554" viewBox="0 0 800 554">
<defs><linearGradient id="dg" x1="0.75" y1="0.1" x2="0.25" y2="0.95"><stop offset="0" stop-color="#ffffff"/><stop offset="0.45" stop-color="#f8f8f8"/><stop offset="1" stop-color="#e8e8e8"/></linearGradient></defs>
<path d="M501.22 308.83L501.73 301.55M504.92 309.22L505.93 301.99M508.58 309.86L510.10 302.72M512.19 310.76L514.20 303.75M519.18 313.31L522.15 306.64M522.52 314.94L525.95 308.49M525.74 316.80L529.61 310.61M528.83 318.88L533.12 312.97M534.53 323.66L539.60 318.41M537.11 326.34L542.53 321.45M539.50 329.19L545.25 324.69M541.69 332.20L547.74 328.11M545.41 338.63L551.97 335.43M546.92 342.03L553.69 339.30M548.19 345.53L555.13 343.27M549.22 349.11L556.30 347.34M550.51 356.43L557.77 355.67M550.77 360.14L558.06 359.89M550.77 363.86L558.06 364.11M550.51 367.57L557.77 368.33M549.22 374.89L556.30 376.66M548.19 378.47L555.13 380.73M546.92 381.97L553.69 384.70M545.41 385.37L551.97 388.57M541.69 391.80L547.74 395.89M539.50 394.81L545.25 399.31M537.11 397.66L542.53 402.55M534.53 400.34L539.60 405.59M528.83 405.12L533.12 411.03M525.74 407.20L529.61 413.39M522.52 409.06L525.95 415.51M519.18 410.69L522.15 417.36M512.19 413.24L514.20 420.25M508.58 414.14L510.10 421.28M504.92 414.78L505.93 422.01M501.22 415.17L501.73 422.45M493.78 415.17L493.27 422.45M490.08 414.78L489.07 422.01M486.42 414.14L484.90 421.28M482.81 413.24L480.80 420.25M475.82 410.69L472.85 417.36M472.48 409.06L469.05 415.51M469.26 407.20L465.39 413.39M466.17 405.12L461.88 411.03M460.47 400.34L455.40 405.59M457.89 397.66L452.47 402.55M455.50 394.81L449.75 399.31M453.31 391.80L447.26 395.89M449.59 385.37L443.03 388.57M448.08 381.97L441.31 384.70M446.81 378.47L439.87 380.73M445.78 374.89L438.70 376.66M444.49 367.57L437.23 368.33M444.23 363.86L436.94 364.11M444.23 360.14L436.94 359.89M444.49 356.43L437.23 355.67M445.78 349.11L438.70 347.34M446.81 345.53L439.87 343.27M448.08 342.03L441.31 339.30M449.59 338.63L443.03 335.43M453.31 332.20L447.26 328.11M455.50 329.19L449.75 324.69M457.89 326.34L452.47 321.45M460.47 323.66L455.40 318.41M466.17 318.88L461.88 312.97M469.26 316.80L465.39 310.61M472.48 314.94L469.05 308.49M475.82 313.31L472.85 306.64M482.81 310.76L480.80 303.75M486.42 309.86L484.90 302.72M490.08 309.22L489.07 301.99M493.78 308.83L493.27 301.55" stroke="#b0b0b0" stroke-width="1" fill="none"/>
<path d="M497.50 309.70L497.50 298.00M515.39 312.85L519.39 301.86M531.12 321.94L538.64 312.97M542.79 335.85L552.93 330.00M549.01 352.92L560.53 350.89M549.01 371.08L560.53 373.11M542.79 388.15L552.93 394.00M531.12 402.06L538.64 411.03M515.39 411.15L519.39 422.14M497.50 414.30L497.50 426.00M479.61 411.15L475.61 422.14M463.88 402.06L456.36 411.03M452.21 388.15L442.07 394.00M445.99 371.08L434.47 373.11M445.99 352.92L434.47 350.89M452.21 335.85L442.07 330.00M463.88 321.94L456.36 312.97M479.61 312.85L475.61 301.86" stroke="#6a6a6a" stroke-width="1" fill="none"/>
<circle cx="497.5" cy="362.0" r="50.3" fill="url(#dg)" stroke="#6a6a6a" stroke-width="1"/>
<circle cx="513.6" cy="391" r="8.6" fill="#e9e9e9" stroke="#8a8a8a" stroke-width="1"/>
</svg>

<!-- buttons -->
<div class="btn" style="left:628px;top:471px;width:69.5px;height:19px;border:2px solid #0078d7"></div>
<div class="btn" style="left:705.5px;top:471px;width:68.5px;height:19px"></div>

<!-- all text -->
<span class='t' style='left:28.91px;top:9.58px;font-size:11.5px;transform:scaleX(0.967);color:#9a9a9a'>MP4 Sample.mp4 - VLC media player</span>
<span class='t' style='left:9.00px;top:34.63px;font-size:11.5px;transform:scaleX(1.006);color:#8c8c8c'>Media</span>
<span class='t' style='left:55.27px;top:34.63px;font-size:11.5px;transform:scaleX(0.968);color:#8c8c8c'>Playback</span>
<span class='t' style='left:115.67px;top:34.63px;font-size:11.5px;transform:scaleX(1.020);color:#8c8c8c'>Audio</span>
<span class='t' style='left:161.47px;top:34.63px;font-size:11.5px;transform:scaleX(0.976);color:#8c8c8c'>Video</span>
<span class='t' style='left:205.04px;top:34.63px;font-size:11.5px;transform:scaleX(1.023);color:#8c8c8c'>Subtitle</span>
<span class='t' style='left:257.98px;top:34.63px;font-size:11.5px;transform:scaleX(0.978);color:#8c8c8c'>Tools</span>
<span class='t' style='left:300.19px;top:34.63px;font-size:11.5px;transform:scaleX(0.915);color:#8c8c8c'>View</span>
<span class='t' style='left:337.90px;top:34.63px;font-size:11.5px;transform:scaleX(1.040);color:#8c8c8c'>Help</span>
<span class='t' style='left:379.89px;top:78.02px;font-size:11.5px;transform:scaleX(0.985);-webkit-text-stroke:0.25px #1a1a1a;color:#1a1a1a'>Adjustments and Effects</span>
<span class='t' style='left:383.95px;top:105.38px;font-size:10.5px;transform:scaleX(0.993);-webkit-text-stroke:0.25px #1a1a1a;color:#1a1a1a'>Audio Effects</span>
<span class='t' style='left:467.71px;top:104.83px;font-size:10.5px;transform:scaleX(0.975);-webkit-text-stroke:0.25px #1a1a1a;color:#1a1a1a'>Video Effects</span>
<span class='t' style='left:549.31px;top:105.38px;font-size:10.5px;transform:scaleX(0.985);-webkit-text-stroke:0.25px #1a1a1a;color:#1a1a1a'>Synchronization</span>
<span class='t' style='left:393.07px;top:134.83px;font-size:10.5px;transform:scaleX(0.948);-webkit-text-stroke:0.25px #1a1a1a;color:#1a1a1a'>Essential</span>
<span class='t' style='left:455.96px;top:134.83px;font-size:10.5px;transform:scaleX(0.982);-webkit-text-stroke:0.25px #1a1a1a;color:#1a1a1a'>Crop</span>
<span class='t' style='left:500.98px;top:134.83px;font-size:10.5px;transform:scaleX(0.967);-webkit-text-stroke:0.25px #1a1a1a;color:#1a1a1a'>Colors</span>
<span class='t' style='left:552.70px;top:133.58px;font-size:10.5px;transform:scaleX(0.958);-webkit-text-stroke:0.25px #1a1a1a;color:#1a1a1a'>Geometry</span>
<span class='t' style='left:618.56px;top:134.83px;font-size:10.5px;transform:scaleX(1.030);-webkit-text-stroke:0.25px #1a1a1a;color:#1a1a1a'>Overlay</span>
<span class='t' style='left:679.78px;top:134.83px;font-size:10.5px;transform:scaleX(0.965);-webkit-text-stroke:0.25px #1a1a1a;color:#1a1a1a'>Advanced</span>
<span class='t' style='left:408.81px;top:162.28px;font-size:10.5px;transform:scaleX(1.012);-webkit-text-stroke:0.25px #1a1a1a;color:#1a1a1a'>Interactive Zoom</span>
<span class='t' style='left:416.47px;top:181.78px;font-size:10.5px;transform:scaleX(1.000);-webkit-text-stroke:0.25px #1a1a1a;color:#1a1a1a'>Transform</span>
<span class='t' style='left:405.77px;top:223.28px;font-size:10.5px;transform:scaleX(0.993);-webkit-text-stroke:0.25px #1a1a1a;color:#1a1a1a'>Rotate by 90 degrees</span>
<span class='t' style='left:416.16px;top:270.68px;font-size:10.5px;transform:scaleX(1.045);-webkit-text-stroke:0.25px #1a1a1a;color:#1a1a1a'>Rotate</span>
<span class='t' style='left:402.55px;top:357.08px;font-size:10.5px;transform:scaleX(0.956);-webkit-text-stroke:0.25px #1a1a1a;color:#1a1a1a'>Angle</span>
<span class='t' style='left:539.50px;top:406.28px;font-size:10.5px;transform:scaleX(0.951);-webkit-text-stroke:0.25px #1a1a1a;color:#1a1a1a'>330</span>
<span class='t' style='left:598.85px;top:159.18px;font-size:10.5px;transform:scaleX(0.934);-webkit-text-stroke:0.25px #1a1a1a;color:#1a1a1a'>Wall</span>
<span class='t' style='left:582.76px;top:224.28px;font-size:10.5px;transform:scaleX(0.969);color:#8a8a8a'>Rows</span>
<span class='t' style='left:714.57px;top:224.28px;font-size:10.5px;transform:scaleX(1.000);color:#9a9a9a'>3</span>
<span class='t' style='left:583.18px;top:287.28px;font-size:10.5px;transform:scaleX(0.938);color:#8a8a8a'>Columns</span>
<span class='t' style='left:714.57px;top:287.28px;font-size:10.5px;transform:scaleX(1.000);color:#9a9a9a'>3</span>
<span class='t' style='left:597.40px;top:358.38px;font-size:10.5px;transform:scaleX(0.940);-webkit-text-stroke:0.25px #1a1a1a;color:#1a1a1a'>Puzzle game</span>
<span class='t' style='left:582.76px;top:387.08px;font-size:10.5px;transform:scaleX(0.969);color:#8a8a8a'>Rows</span>
<span class='t' style='left:714.87px;top:387.08px;font-size:10.5px;transform:scaleX(1.000);color:#9a9a9a'>4</span>
<span class='t' style='left:583.18px;top:414.08px;font-size:10.5px;transform:scaleX(0.938);color:#8a8a8a'>Columns</span>
<span class='t' style='left:714.87px;top:414.08px;font-size:10.5px;transform:scaleX(1.000);color:#9a9a9a'>4</span>
<span class='t' style='left:648.70px;top:475.38px;font-size:10.5px;transform:scaleX(0.961);-webkit-text-stroke:0.25px #1a1a1a;color:#1a1a1a'>Close</span>
<span class='t' style='left:727.31px;top:475.38px;font-size:10.5px;transform:scaleX(0.980);-webkit-text-stroke:0.25px #1a1a1a;color:#1a1a1a'>Save</span>
<span class='t' style='left:9.74px;top:508.83px;font-size:11px;transform:scaleX(1.002);-webkit-text-stroke:0.25px #1a1a1a;color:#1a1a1a'>00:03</span>
<span class='t' style='left:429.01px;top:508.83px;font-size:11px;transform:scaleX(1.000);-webkit-text-stroke:0.25px #1a1a1a;color:#1a1a1a'>00:09</span>
<span class='t' style='left:387.20px;top:531.94px;font-size:8.5px;transform:scaleX(1.146);color:#666'>0%</span>

<!-- mouse cursor -->
<svg style="left:411.5px;top:273.5px" width="13" height="20" viewBox="0 0 13 20"><path d="M1 1 L1 16 L4.4 12.8 L7 18.6 L9.3 17.6 L6.8 11.9 L11.4 11.6 Z" fill="#fff" stroke="#111" stroke-width="1.1" stroke-linejoin="round"/></svg>

</body>
</html>
